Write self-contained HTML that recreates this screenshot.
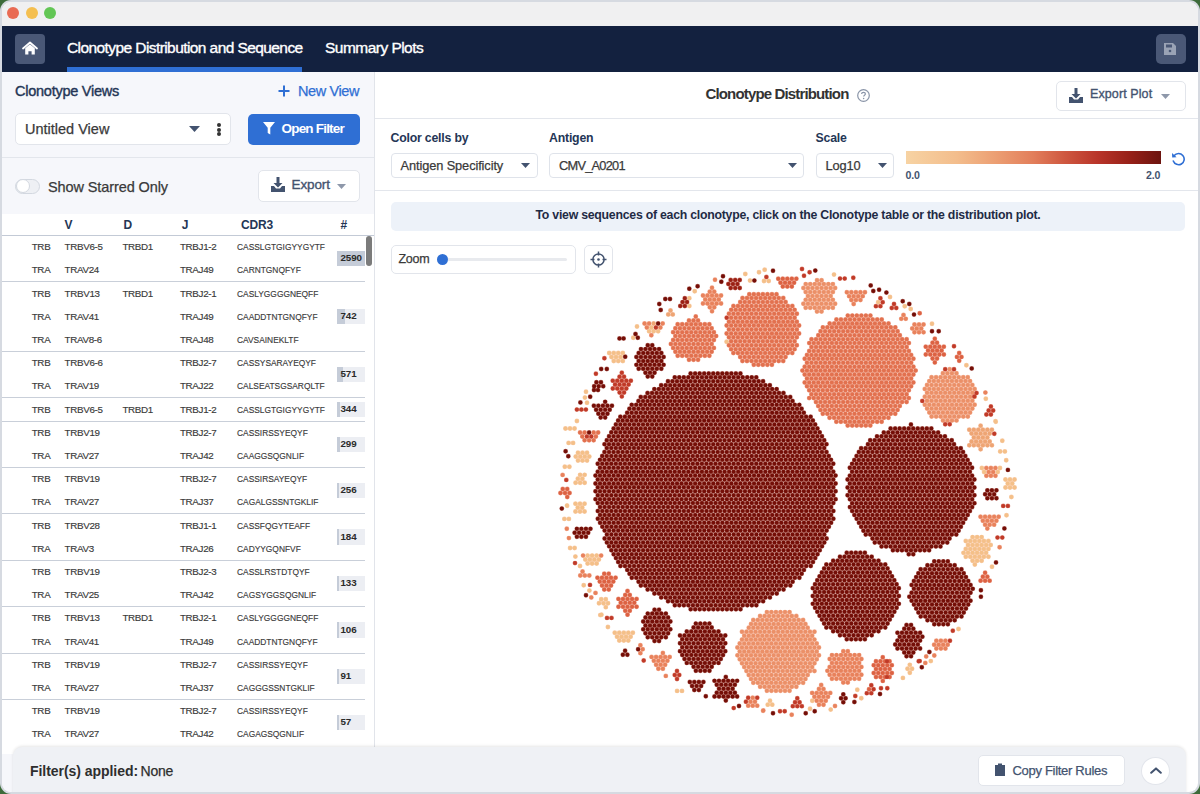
<!DOCTYPE html>
<html><head><meta charset="utf-8">
<style>
*{box-sizing:border-box;margin:0;padding:0}
html,body{width:1200px;height:794px;overflow:hidden;background:#3d6b3a;font-family:"Liberation Sans",sans-serif}
.win{position:absolute;left:0;top:0;width:1200px;height:794px;border-radius:11px;background:#d6dae1;overflow:hidden}
.inner{position:absolute;left:2px;top:2px;right:2px;bottom:2px;border-radius:9px;background:#fff;overflow:hidden}
.abs{position:absolute}
.t{position:absolute;white-space:nowrap;line-height:1}
</style></head><body>
<div class="win"><div class="inner">
<!-- coordinates inside .inner are offset by 2px; use wrapper at -2 -->
<div class="abs" id="root" style="left:-2px;top:-2px;width:1200px;height:794px">

<!-- title bar -->
<div class="abs" style="left:0;top:0;width:1200px;height:26px;background:#f0f0f1"></div>
<div class="abs" style="left:7px;top:7px;width:12px;height:12px;border-radius:50%;background:#e96b54"></div>
<div class="abs" style="left:25.5px;top:7px;width:12px;height:12px;border-radius:50%;background:#f4bf50"></div>
<div class="abs" style="left:44px;top:7px;width:12px;height:12px;border-radius:50%;background:#62c655"></div>

<!-- nav -->
<div class="abs" style="left:0;top:26px;width:1200px;height:46px;background:#13213f"></div>
<div class="abs" style="left:15px;top:34px;width:29.5px;height:30px;border-radius:4px;background:#4a5876"></div>
<svg class="abs" style="left:21px;top:41px" width="18" height="15" viewBox="0 0 18 15">
 <path d="M2 7.5 L9 1.5 L16 7.5" fill="none" stroke="#fff" stroke-width="1.8" stroke-linecap="round" stroke-linejoin="round"/>
 <path d="M4.2 7.2 L9 3.2 L13.8 7.2 V13.5 H10.6 V10.2 H7.4 V13.5 H4.2 Z" fill="#fff"/>
</svg>
<div class="t" style="left:67px;top:40px;font-size:15.5px;color:#fff;letter-spacing:-0.58px;-webkit-text-stroke:0.35px #fff">Clonotype Distribution and Sequence</div>
<div class="abs" style="left:67px;top:66.5px;width:235px;height:5.5px;background:#2f6fd4"></div>
<div class="t" style="left:325px;top:40px;font-size:15.5px;color:#fff;letter-spacing:-0.53px;-webkit-text-stroke:0.35px #fff">Summary Plots</div>
<div class="abs" style="left:1155.5px;top:34px;width:30px;height:30px;border-radius:5px;background:#4a5876"></div>
<svg class="abs" style="left:1163px;top:42px" width="14" height="14" viewBox="0 0 14 14">
 <path d="M1 1 H10 L13 4 V13 H1 Z" fill="#9aa3b5"/>
 <rect x="3" y="2.5" width="6" height="3" fill="#4a5876"/>
 <circle cx="7" cy="9" r="1.3" fill="#4a5876"/>
</svg>

<!-- left panel -->
<div class="abs" style="left:0;top:72px;width:375px;height:722px;background:#f6f7fb;border-right:1px solid #e1e4ea"></div>


<!-- left panel content -->
<div class="t" style="left:15px;top:84px;font-size:14.5px;color:#243656;letter-spacing:-0.25px;-webkit-text-stroke:0.4px #243656">Clonotype Views</div>
<svg class="abs" style="left:278px;top:85px" width="12" height="12" viewBox="0 0 12 12"><path d="M6 0.5 V11.5 M0.5 6 H11.5" stroke="#2f6fd4" stroke-width="2"/></svg>
<div class="t" style="left:298px;top:84px;font-size:14.5px;color:#2f6fd4;letter-spacing:-0.4px;-webkit-text-stroke:0.25px #2f6fd4">New View</div>

<div class="abs" style="left:15px;top:113px;width:216px;height:32px;border-radius:5px;background:#fff;border:1px solid #e2e5eb"></div>
<div class="t" style="left:25px;top:122px;font-size:14.5px;color:#3a3a3a;-webkit-text-stroke:0.25px #3a3a3a">Untitled View</div>
<svg class="abs" style="left:189px;top:126px" width="11" height="6" viewBox="0 0 11 6"><path d="M0 0 H11 L5.5 6 Z" fill="#43536f"/></svg>
<div class="abs" style="left:217px;top:123px;width:4px;height:4px;border-radius:50%;background:#333"></div>
<div class="abs" style="left:217px;top:127.5px;width:4px;height:4px;border-radius:50%;background:#333"></div>
<div class="abs" style="left:217px;top:132px;width:4px;height:4px;border-radius:50%;background:#333"></div>

<div class="abs" style="left:248px;top:113.5px;width:111.5px;height:31px;border-radius:5px;background:#2f6fd4"></div>
<svg class="abs" style="left:263px;top:122px" width="12" height="13" viewBox="0 0 12 13"><path d="M0 0 H12 L7.3 5.8 V12.5 L4.7 11 V5.8 Z" fill="#fff"/></svg>
<div class="t" style="left:281.5px;top:122px;font-size:13.5px;color:#fff;font-weight:bold;letter-spacing:-0.8px">Open Filter</div>

<div class="abs" style="left:0;top:156.5px;width:374px;height:1px;background:#e3e6ec"></div>

<div class="abs" style="left:15px;top:178.5px;width:25px;height:15px;border-radius:8px;background:#eef0f4;border:1px solid #d3d8e0"></div>
<div class="abs" style="left:15.5px;top:179px;width:14px;height:14px;border-radius:50%;background:#fff;border:1px solid #d3d8e0"></div>
<div class="t" style="left:48px;top:180px;font-size:14.5px;color:#3a3a3a;letter-spacing:-0.1px;-webkit-text-stroke:0.25px #3a3a3a">Show Starred Only</div>

<div class="abs" style="left:258px;top:170px;width:102px;height:32px;border-radius:5px;background:#fff;border:1px solid #e2e5eb"></div>
<svg class="abs" style="left:270.5px;top:177px" width="14" height="15" viewBox="0 0 14 15"><path d="M5.5 0 H8.5 V6 H11.5 L7 10.5 L2.5 6 H5.5 Z" fill="#43536f"/><path d="M0 9 H3 L5 11.5 H9 L11 9 H14 V15 H0 Z" fill="#43536f"/></svg>
<div class="t" style="left:291.5px;top:178px;font-size:13.5px;color:#43536f;letter-spacing:-0.1px;-webkit-text-stroke:0.35px #43536f">Export</div>
<svg class="abs" style="left:337px;top:184px" width="9" height="5" viewBox="0 0 9 5"><path d="M0 0 H9 L4.5 5 Z" fill="#8e98aa"/></svg>
<!-- table -->
<div class="abs" style="left:0;top:213.5px;width:374px;height:540px;background:#fff"></div>
<div class="t" style="left:64.5px;top:219px;font-size:12px;font-weight:bold;color:#243656;letter-spacing:-0.2px">V</div>
<div class="t" style="left:123.5px;top:219px;font-size:12px;font-weight:bold;color:#243656;letter-spacing:-0.2px">D</div>
<div class="t" style="left:181.7px;top:219px;font-size:12px;font-weight:bold;color:#243656;letter-spacing:-0.2px">J</div>
<div class="t" style="left:241px;top:219px;font-size:12px;font-weight:bold;color:#243656;letter-spacing:-0.2px">CDR3</div>
<div class="t" style="left:340.4px;top:219px;font-size:12px;font-weight:bold;color:#243656;letter-spacing:-0.2px">#</div>
<div class="abs" style="left:0;top:234.8px;width:374px;height:1.5px;background:#c3cad6"></div>
<div class="t" style="left:31.7px;top:242.1px;font-size:9.8px;color:#3a3a3a;-webkit-text-stroke:0.15px #3a3a3a;letter-spacing:-0.3px">TRB</div>
<div class="t" style="left:64.5px;top:242.1px;font-size:9.8px;color:#3a3a3a;-webkit-text-stroke:0.15px #3a3a3a;letter-spacing:-0.3px">TRBV6-5</div>
<div class="t" style="left:122.4px;top:242.1px;font-size:9.8px;color:#3a3a3a;-webkit-text-stroke:0.15px #3a3a3a;letter-spacing:-0.3px">TRBD1</div>
<div class="t" style="left:179.9px;top:242.1px;font-size:9.8px;color:#3a3a3a;-webkit-text-stroke:0.15px #3a3a3a;letter-spacing:-0.3px">TRBJ1-2</div>
<div class="t" style="left:237.4px;top:242.1px;font-size:9.8px;color:#3a3a3a;-webkit-text-stroke:0.15px #3a3a3a;letter-spacing:0px;transform:scaleX(0.855);transform-origin:0 0">CASSLGTGIGYYGYTF</div>
<div class="t" style="left:31.7px;top:265.3px;font-size:9.8px;color:#3a3a3a;-webkit-text-stroke:0.15px #3a3a3a;letter-spacing:-0.3px">TRA</div>
<div class="t" style="left:64.5px;top:265.3px;font-size:9.8px;color:#3a3a3a;-webkit-text-stroke:0.15px #3a3a3a;letter-spacing:-0.3px">TRAV24</div>
<div class="t" style="left:179.9px;top:265.3px;font-size:9.8px;color:#3a3a3a;-webkit-text-stroke:0.15px #3a3a3a;letter-spacing:-0.3px">TRAJ49</div>
<div class="t" style="left:237.4px;top:265.3px;font-size:9.8px;color:#3a3a3a;-webkit-text-stroke:0.15px #3a3a3a;letter-spacing:0px;transform:scaleX(0.855);transform-origin:0 0">CARNTGNQFYF</div>
<div class="abs" style="left:336.5px;top:250.9px;width:28.5px;height:15.5px;background:#eceef3"></div>
<div class="abs" style="left:336.5px;top:250.9px;width:28.5px;height:15.5px;background:#c5ccd8"></div>
<div class="t" style="left:340.5px;top:253.4px;font-size:9.8px;font-weight:bold;color:#2a2a2a;letter-spacing:-0.1px">2590</div>
<div class="abs" style="left:0;top:281.4px;width:365px;height:1px;background:#c9cfd9"></div>
<div class="t" style="left:31.7px;top:288.5px;font-size:9.8px;color:#3a3a3a;-webkit-text-stroke:0.15px #3a3a3a;letter-spacing:-0.3px">TRB</div>
<div class="t" style="left:64.5px;top:288.5px;font-size:9.8px;color:#3a3a3a;-webkit-text-stroke:0.15px #3a3a3a;letter-spacing:-0.3px">TRBV13</div>
<div class="t" style="left:122.4px;top:288.5px;font-size:9.8px;color:#3a3a3a;-webkit-text-stroke:0.15px #3a3a3a;letter-spacing:-0.3px">TRBD1</div>
<div class="t" style="left:179.9px;top:288.5px;font-size:9.8px;color:#3a3a3a;-webkit-text-stroke:0.15px #3a3a3a;letter-spacing:-0.3px">TRBJ2-1</div>
<div class="t" style="left:237.4px;top:288.5px;font-size:9.8px;color:#3a3a3a;-webkit-text-stroke:0.15px #3a3a3a;letter-spacing:0px;transform:scaleX(0.855);transform-origin:0 0">CASLYGGGGNEQFF</div>
<div class="t" style="left:31.7px;top:311.7px;font-size:9.8px;color:#3a3a3a;-webkit-text-stroke:0.15px #3a3a3a;letter-spacing:-0.3px">TRA</div>
<div class="t" style="left:64.5px;top:311.7px;font-size:9.8px;color:#3a3a3a;-webkit-text-stroke:0.15px #3a3a3a;letter-spacing:-0.3px">TRAV41</div>
<div class="t" style="left:179.9px;top:311.7px;font-size:9.8px;color:#3a3a3a;-webkit-text-stroke:0.15px #3a3a3a;letter-spacing:-0.3px">TRAJ49</div>
<div class="t" style="left:237.4px;top:311.7px;font-size:9.8px;color:#3a3a3a;-webkit-text-stroke:0.15px #3a3a3a;letter-spacing:0px;transform:scaleX(0.855);transform-origin:0 0">CAADDTNTGNQFYF</div>
<div class="t" style="left:31.7px;top:334.9px;font-size:9.8px;color:#3a3a3a;-webkit-text-stroke:0.15px #3a3a3a;letter-spacing:-0.3px">TRA</div>
<div class="t" style="left:64.5px;top:334.9px;font-size:9.8px;color:#3a3a3a;-webkit-text-stroke:0.15px #3a3a3a;letter-spacing:-0.3px">TRAV8-6</div>
<div class="t" style="left:179.9px;top:334.9px;font-size:9.8px;color:#3a3a3a;-webkit-text-stroke:0.15px #3a3a3a;letter-spacing:-0.3px">TRAJ48</div>
<div class="t" style="left:237.4px;top:334.9px;font-size:9.8px;color:#3a3a3a;-webkit-text-stroke:0.15px #3a3a3a;letter-spacing:0px;transform:scaleX(0.855);transform-origin:0 0">CAVSAINEKLTF</div>
<div class="abs" style="left:336.5px;top:308.9px;width:28.5px;height:15.5px;background:#eceef3"></div>
<div class="abs" style="left:336.5px;top:308.9px;width:8.2px;height:15.5px;background:#c5ccd8"></div>
<div class="t" style="left:340.5px;top:311.4px;font-size:9.8px;font-weight:bold;color:#2a2a2a;letter-spacing:-0.1px">742</div>
<div class="abs" style="left:0;top:351.0px;width:365px;height:1px;background:#c9cfd9"></div>
<div class="t" style="left:31.7px;top:358.1px;font-size:9.8px;color:#3a3a3a;-webkit-text-stroke:0.15px #3a3a3a;letter-spacing:-0.3px">TRB</div>
<div class="t" style="left:64.5px;top:358.1px;font-size:9.8px;color:#3a3a3a;-webkit-text-stroke:0.15px #3a3a3a;letter-spacing:-0.3px">TRBV6-6</div>
<div class="t" style="left:179.9px;top:358.1px;font-size:9.8px;color:#3a3a3a;-webkit-text-stroke:0.15px #3a3a3a;letter-spacing:-0.3px">TRBJ2-7</div>
<div class="t" style="left:237.4px;top:358.1px;font-size:9.8px;color:#3a3a3a;-webkit-text-stroke:0.15px #3a3a3a;letter-spacing:0px;transform:scaleX(0.855);transform-origin:0 0">CASSYSARAYEQYF</div>
<div class="t" style="left:31.7px;top:381.3px;font-size:9.8px;color:#3a3a3a;-webkit-text-stroke:0.15px #3a3a3a;letter-spacing:-0.3px">TRA</div>
<div class="t" style="left:64.5px;top:381.3px;font-size:9.8px;color:#3a3a3a;-webkit-text-stroke:0.15px #3a3a3a;letter-spacing:-0.3px">TRAV19</div>
<div class="t" style="left:179.9px;top:381.3px;font-size:9.8px;color:#3a3a3a;-webkit-text-stroke:0.15px #3a3a3a;letter-spacing:-0.3px">TRAJ22</div>
<div class="t" style="left:237.4px;top:381.3px;font-size:9.8px;color:#3a3a3a;-webkit-text-stroke:0.15px #3a3a3a;letter-spacing:0px;transform:scaleX(0.855);transform-origin:0 0">CALSEATSGSARQLTF</div>
<div class="abs" style="left:336.5px;top:366.9px;width:28.5px;height:15.5px;background:#eceef3"></div>
<div class="abs" style="left:336.5px;top:366.9px;width:6.3px;height:15.5px;background:#c5ccd8"></div>
<div class="t" style="left:340.5px;top:369.4px;font-size:9.8px;font-weight:bold;color:#2a2a2a;letter-spacing:-0.1px">571</div>
<div class="abs" style="left:0;top:397.4px;width:365px;height:1px;background:#c9cfd9"></div>
<div class="t" style="left:31.7px;top:404.5px;font-size:9.8px;color:#3a3a3a;-webkit-text-stroke:0.15px #3a3a3a;letter-spacing:-0.3px">TRB</div>
<div class="t" style="left:64.5px;top:404.5px;font-size:9.8px;color:#3a3a3a;-webkit-text-stroke:0.15px #3a3a3a;letter-spacing:-0.3px">TRBV6-5</div>
<div class="t" style="left:122.4px;top:404.5px;font-size:9.8px;color:#3a3a3a;-webkit-text-stroke:0.15px #3a3a3a;letter-spacing:-0.3px">TRBD1</div>
<div class="t" style="left:179.9px;top:404.5px;font-size:9.8px;color:#3a3a3a;-webkit-text-stroke:0.15px #3a3a3a;letter-spacing:-0.3px">TRBJ1-2</div>
<div class="t" style="left:237.4px;top:404.5px;font-size:9.8px;color:#3a3a3a;-webkit-text-stroke:0.15px #3a3a3a;letter-spacing:0px;transform:scaleX(0.855);transform-origin:0 0">CASSLGTGIGYYGYTF</div>
<div class="abs" style="left:336.5px;top:401.7px;width:28.5px;height:15.5px;background:#eceef3"></div>
<div class="abs" style="left:336.5px;top:401.7px;width:3.8px;height:15.5px;background:#c5ccd8"></div>
<div class="t" style="left:340.5px;top:404.2px;font-size:9.8px;font-weight:bold;color:#2a2a2a;letter-spacing:-0.1px">344</div>
<div class="abs" style="left:0;top:420.6px;width:365px;height:1px;background:#c9cfd9"></div>
<div class="t" style="left:31.7px;top:427.7px;font-size:9.8px;color:#3a3a3a;-webkit-text-stroke:0.15px #3a3a3a;letter-spacing:-0.3px">TRB</div>
<div class="t" style="left:64.5px;top:427.7px;font-size:9.8px;color:#3a3a3a;-webkit-text-stroke:0.15px #3a3a3a;letter-spacing:-0.3px">TRBV19</div>
<div class="t" style="left:179.9px;top:427.7px;font-size:9.8px;color:#3a3a3a;-webkit-text-stroke:0.15px #3a3a3a;letter-spacing:-0.3px">TRBJ2-7</div>
<div class="t" style="left:237.4px;top:427.7px;font-size:9.8px;color:#3a3a3a;-webkit-text-stroke:0.15px #3a3a3a;letter-spacing:0px;transform:scaleX(0.855);transform-origin:0 0">CASSIRSSYEQYF</div>
<div class="t" style="left:31.7px;top:450.9px;font-size:9.8px;color:#3a3a3a;-webkit-text-stroke:0.15px #3a3a3a;letter-spacing:-0.3px">TRA</div>
<div class="t" style="left:64.5px;top:450.9px;font-size:9.8px;color:#3a3a3a;-webkit-text-stroke:0.15px #3a3a3a;letter-spacing:-0.3px">TRAV27</div>
<div class="t" style="left:179.9px;top:450.9px;font-size:9.8px;color:#3a3a3a;-webkit-text-stroke:0.15px #3a3a3a;letter-spacing:-0.3px">TRAJ42</div>
<div class="t" style="left:237.4px;top:450.9px;font-size:9.8px;color:#3a3a3a;-webkit-text-stroke:0.15px #3a3a3a;letter-spacing:0px;transform:scaleX(0.855);transform-origin:0 0">CAAGGSQGNLIF</div>
<div class="abs" style="left:336.5px;top:436.5px;width:28.5px;height:15.5px;background:#eceef3"></div>
<div class="abs" style="left:336.5px;top:436.5px;width:3.3px;height:15.5px;background:#c5ccd8"></div>
<div class="t" style="left:340.5px;top:439.0px;font-size:9.8px;font-weight:bold;color:#2a2a2a;letter-spacing:-0.1px">299</div>
<div class="abs" style="left:0;top:467.0px;width:365px;height:1px;background:#c9cfd9"></div>
<div class="t" style="left:31.7px;top:474.1px;font-size:9.8px;color:#3a3a3a;-webkit-text-stroke:0.15px #3a3a3a;letter-spacing:-0.3px">TRB</div>
<div class="t" style="left:64.5px;top:474.1px;font-size:9.8px;color:#3a3a3a;-webkit-text-stroke:0.15px #3a3a3a;letter-spacing:-0.3px">TRBV19</div>
<div class="t" style="left:179.9px;top:474.1px;font-size:9.8px;color:#3a3a3a;-webkit-text-stroke:0.15px #3a3a3a;letter-spacing:-0.3px">TRBJ2-7</div>
<div class="t" style="left:237.4px;top:474.1px;font-size:9.8px;color:#3a3a3a;-webkit-text-stroke:0.15px #3a3a3a;letter-spacing:0px;transform:scaleX(0.855);transform-origin:0 0">CASSIRSAYEQYF</div>
<div class="t" style="left:31.7px;top:497.3px;font-size:9.8px;color:#3a3a3a;-webkit-text-stroke:0.15px #3a3a3a;letter-spacing:-0.3px">TRA</div>
<div class="t" style="left:64.5px;top:497.3px;font-size:9.8px;color:#3a3a3a;-webkit-text-stroke:0.15px #3a3a3a;letter-spacing:-0.3px">TRAV27</div>
<div class="t" style="left:179.9px;top:497.3px;font-size:9.8px;color:#3a3a3a;-webkit-text-stroke:0.15px #3a3a3a;letter-spacing:-0.3px">TRAJ37</div>
<div class="t" style="left:237.4px;top:497.3px;font-size:9.8px;color:#3a3a3a;-webkit-text-stroke:0.15px #3a3a3a;letter-spacing:0px;transform:scaleX(0.855);transform-origin:0 0">CAGALGSSNTGKLIF</div>
<div class="abs" style="left:336.5px;top:482.9px;width:28.5px;height:15.5px;background:#eceef3"></div>
<div class="abs" style="left:336.5px;top:482.9px;width:2.8px;height:15.5px;background:#c5ccd8"></div>
<div class="t" style="left:340.5px;top:485.4px;font-size:9.8px;font-weight:bold;color:#2a2a2a;letter-spacing:-0.1px">256</div>
<div class="abs" style="left:0;top:513.4px;width:365px;height:1px;background:#c9cfd9"></div>
<div class="t" style="left:31.7px;top:520.5px;font-size:9.8px;color:#3a3a3a;-webkit-text-stroke:0.15px #3a3a3a;letter-spacing:-0.3px">TRB</div>
<div class="t" style="left:64.5px;top:520.5px;font-size:9.8px;color:#3a3a3a;-webkit-text-stroke:0.15px #3a3a3a;letter-spacing:-0.3px">TRBV28</div>
<div class="t" style="left:179.9px;top:520.5px;font-size:9.8px;color:#3a3a3a;-webkit-text-stroke:0.15px #3a3a3a;letter-spacing:-0.3px">TRBJ1-1</div>
<div class="t" style="left:237.4px;top:520.5px;font-size:9.8px;color:#3a3a3a;-webkit-text-stroke:0.15px #3a3a3a;letter-spacing:0px;transform:scaleX(0.855);transform-origin:0 0">CASSFQGYTEAFF</div>
<div class="t" style="left:31.7px;top:543.7px;font-size:9.8px;color:#3a3a3a;-webkit-text-stroke:0.15px #3a3a3a;letter-spacing:-0.3px">TRA</div>
<div class="t" style="left:64.5px;top:543.7px;font-size:9.8px;color:#3a3a3a;-webkit-text-stroke:0.15px #3a3a3a;letter-spacing:-0.3px">TRAV3</div>
<div class="t" style="left:179.9px;top:543.7px;font-size:9.8px;color:#3a3a3a;-webkit-text-stroke:0.15px #3a3a3a;letter-spacing:-0.3px">TRAJ26</div>
<div class="t" style="left:237.4px;top:543.7px;font-size:9.8px;color:#3a3a3a;-webkit-text-stroke:0.15px #3a3a3a;letter-spacing:0px;transform:scaleX(0.855);transform-origin:0 0">CADYYGQNFVF</div>
<div class="abs" style="left:336.5px;top:529.3px;width:28.5px;height:15.5px;background:#eceef3"></div>
<div class="abs" style="left:336.5px;top:529.3px;width:2.0px;height:15.5px;background:#c5ccd8"></div>
<div class="t" style="left:340.5px;top:531.8px;font-size:9.8px;font-weight:bold;color:#2a2a2a;letter-spacing:-0.1px">184</div>
<div class="abs" style="left:0;top:559.8px;width:365px;height:1px;background:#c9cfd9"></div>
<div class="t" style="left:31.7px;top:566.9px;font-size:9.8px;color:#3a3a3a;-webkit-text-stroke:0.15px #3a3a3a;letter-spacing:-0.3px">TRB</div>
<div class="t" style="left:64.5px;top:566.9px;font-size:9.8px;color:#3a3a3a;-webkit-text-stroke:0.15px #3a3a3a;letter-spacing:-0.3px">TRBV19</div>
<div class="t" style="left:179.9px;top:566.9px;font-size:9.8px;color:#3a3a3a;-webkit-text-stroke:0.15px #3a3a3a;letter-spacing:-0.3px">TRBJ2-3</div>
<div class="t" style="left:237.4px;top:566.9px;font-size:9.8px;color:#3a3a3a;-webkit-text-stroke:0.15px #3a3a3a;letter-spacing:0px;transform:scaleX(0.855);transform-origin:0 0">CASSLRSTDTQYF</div>
<div class="t" style="left:31.7px;top:590.1px;font-size:9.8px;color:#3a3a3a;-webkit-text-stroke:0.15px #3a3a3a;letter-spacing:-0.3px">TRA</div>
<div class="t" style="left:64.5px;top:590.1px;font-size:9.8px;color:#3a3a3a;-webkit-text-stroke:0.15px #3a3a3a;letter-spacing:-0.3px">TRAV25</div>
<div class="t" style="left:179.9px;top:590.1px;font-size:9.8px;color:#3a3a3a;-webkit-text-stroke:0.15px #3a3a3a;letter-spacing:-0.3px">TRAJ42</div>
<div class="t" style="left:237.4px;top:590.1px;font-size:9.8px;color:#3a3a3a;-webkit-text-stroke:0.15px #3a3a3a;letter-spacing:0px;transform:scaleX(0.855);transform-origin:0 0">CAGSYGGSQGNLIF</div>
<div class="abs" style="left:336.5px;top:575.7px;width:28.5px;height:15.5px;background:#eceef3"></div>
<div class="abs" style="left:336.5px;top:575.7px;width:2.0px;height:15.5px;background:#c5ccd8"></div>
<div class="t" style="left:340.5px;top:578.2px;font-size:9.8px;font-weight:bold;color:#2a2a2a;letter-spacing:-0.1px">133</div>
<div class="abs" style="left:0;top:606.2px;width:365px;height:1px;background:#c9cfd9"></div>
<div class="t" style="left:31.7px;top:613.3px;font-size:9.8px;color:#3a3a3a;-webkit-text-stroke:0.15px #3a3a3a;letter-spacing:-0.3px">TRB</div>
<div class="t" style="left:64.5px;top:613.3px;font-size:9.8px;color:#3a3a3a;-webkit-text-stroke:0.15px #3a3a3a;letter-spacing:-0.3px">TRBV13</div>
<div class="t" style="left:122.4px;top:613.3px;font-size:9.8px;color:#3a3a3a;-webkit-text-stroke:0.15px #3a3a3a;letter-spacing:-0.3px">TRBD1</div>
<div class="t" style="left:179.9px;top:613.3px;font-size:9.8px;color:#3a3a3a;-webkit-text-stroke:0.15px #3a3a3a;letter-spacing:-0.3px">TRBJ2-1</div>
<div class="t" style="left:237.4px;top:613.3px;font-size:9.8px;color:#3a3a3a;-webkit-text-stroke:0.15px #3a3a3a;letter-spacing:0px;transform:scaleX(0.855);transform-origin:0 0">CASLYGGGGNEQFF</div>
<div class="t" style="left:31.7px;top:636.5px;font-size:9.8px;color:#3a3a3a;-webkit-text-stroke:0.15px #3a3a3a;letter-spacing:-0.3px">TRA</div>
<div class="t" style="left:64.5px;top:636.5px;font-size:9.8px;color:#3a3a3a;-webkit-text-stroke:0.15px #3a3a3a;letter-spacing:-0.3px">TRAV41</div>
<div class="t" style="left:179.9px;top:636.5px;font-size:9.8px;color:#3a3a3a;-webkit-text-stroke:0.15px #3a3a3a;letter-spacing:-0.3px">TRAJ49</div>
<div class="t" style="left:237.4px;top:636.5px;font-size:9.8px;color:#3a3a3a;-webkit-text-stroke:0.15px #3a3a3a;letter-spacing:0px;transform:scaleX(0.855);transform-origin:0 0">CAADDTNTGNQFYF</div>
<div class="abs" style="left:336.5px;top:622.1px;width:28.5px;height:15.5px;background:#eceef3"></div>
<div class="abs" style="left:336.5px;top:622.1px;width:2.0px;height:15.5px;background:#c5ccd8"></div>
<div class="t" style="left:340.5px;top:624.6px;font-size:9.8px;font-weight:bold;color:#2a2a2a;letter-spacing:-0.1px">106</div>
<div class="abs" style="left:0;top:652.6px;width:365px;height:1px;background:#c9cfd9"></div>
<div class="t" style="left:31.7px;top:659.7px;font-size:9.8px;color:#3a3a3a;-webkit-text-stroke:0.15px #3a3a3a;letter-spacing:-0.3px">TRB</div>
<div class="t" style="left:64.5px;top:659.7px;font-size:9.8px;color:#3a3a3a;-webkit-text-stroke:0.15px #3a3a3a;letter-spacing:-0.3px">TRBV19</div>
<div class="t" style="left:179.9px;top:659.7px;font-size:9.8px;color:#3a3a3a;-webkit-text-stroke:0.15px #3a3a3a;letter-spacing:-0.3px">TRBJ2-7</div>
<div class="t" style="left:237.4px;top:659.7px;font-size:9.8px;color:#3a3a3a;-webkit-text-stroke:0.15px #3a3a3a;letter-spacing:0px;transform:scaleX(0.855);transform-origin:0 0">CASSIRSSYEQYF</div>
<div class="t" style="left:31.7px;top:682.9px;font-size:9.8px;color:#3a3a3a;-webkit-text-stroke:0.15px #3a3a3a;letter-spacing:-0.3px">TRA</div>
<div class="t" style="left:64.5px;top:682.9px;font-size:9.8px;color:#3a3a3a;-webkit-text-stroke:0.15px #3a3a3a;letter-spacing:-0.3px">TRAV27</div>
<div class="t" style="left:179.9px;top:682.9px;font-size:9.8px;color:#3a3a3a;-webkit-text-stroke:0.15px #3a3a3a;letter-spacing:-0.3px">TRAJ37</div>
<div class="t" style="left:237.4px;top:682.9px;font-size:9.8px;color:#3a3a3a;-webkit-text-stroke:0.15px #3a3a3a;letter-spacing:0px;transform:scaleX(0.855);transform-origin:0 0">CAGGGSSNTGKLIF</div>
<div class="abs" style="left:336.5px;top:668.5px;width:28.5px;height:15.5px;background:#eceef3"></div>
<div class="abs" style="left:336.5px;top:668.5px;width:2.0px;height:15.5px;background:#c5ccd8"></div>
<div class="t" style="left:340.5px;top:671.0px;font-size:9.8px;font-weight:bold;color:#2a2a2a;letter-spacing:-0.1px">91</div>
<div class="abs" style="left:0;top:699.0px;width:365px;height:1px;background:#c9cfd9"></div>
<div class="t" style="left:31.7px;top:706.1px;font-size:9.8px;color:#3a3a3a;-webkit-text-stroke:0.15px #3a3a3a;letter-spacing:-0.3px">TRB</div>
<div class="t" style="left:64.5px;top:706.1px;font-size:9.8px;color:#3a3a3a;-webkit-text-stroke:0.15px #3a3a3a;letter-spacing:-0.3px">TRBV19</div>
<div class="t" style="left:179.9px;top:706.1px;font-size:9.8px;color:#3a3a3a;-webkit-text-stroke:0.15px #3a3a3a;letter-spacing:-0.3px">TRBJ2-7</div>
<div class="t" style="left:237.4px;top:706.1px;font-size:9.8px;color:#3a3a3a;-webkit-text-stroke:0.15px #3a3a3a;letter-spacing:0px;transform:scaleX(0.855);transform-origin:0 0">CASSIRSSYEQYF</div>
<div class="t" style="left:31.7px;top:729.3px;font-size:9.8px;color:#3a3a3a;-webkit-text-stroke:0.15px #3a3a3a;letter-spacing:-0.3px">TRA</div>
<div class="t" style="left:64.5px;top:729.3px;font-size:9.8px;color:#3a3a3a;-webkit-text-stroke:0.15px #3a3a3a;letter-spacing:-0.3px">TRAV27</div>
<div class="t" style="left:179.9px;top:729.3px;font-size:9.8px;color:#3a3a3a;-webkit-text-stroke:0.15px #3a3a3a;letter-spacing:-0.3px">TRAJ42</div>
<div class="t" style="left:237.4px;top:729.3px;font-size:9.8px;color:#3a3a3a;-webkit-text-stroke:0.15px #3a3a3a;letter-spacing:0px;transform:scaleX(0.855);transform-origin:0 0">CAGAGSQGNLIF</div>
<div class="abs" style="left:336.5px;top:714.9px;width:28.5px;height:15.5px;background:#eceef3"></div>
<div class="abs" style="left:336.5px;top:714.9px;width:2.0px;height:15.5px;background:#c5ccd8"></div>
<div class="t" style="left:340.5px;top:717.4px;font-size:9.8px;font-weight:bold;color:#2a2a2a;letter-spacing:-0.1px">57</div>
<div class="abs" style="left:365.5px;top:236px;width:6px;height:30px;border-radius:3px;background:#7b7b7b"></div>
<div class="abs" style="left:374px;top:213.5px;width:1px;height:540px;background:#e1e4ea"></div>

<!-- right panel header -->
<div class="t" style="left:705.5px;top:86px;font-size:15px;font-weight:bold;color:#333;letter-spacing:-0.85px">Clonotype Distribution</div>
<svg class="abs" style="left:857px;top:89px" width="13" height="13" viewBox="0 0 13 13"><circle cx="6.5" cy="6.5" r="5.8" fill="none" stroke="#8a95a8" stroke-width="1.2"/><path d="M4.6 5.1 C4.6 3.9 5.5 3.4 6.5 3.4 C7.6 3.4 8.4 4.1 8.4 5 C8.4 6.2 6.6 6.3 6.6 7.6" fill="none" stroke="#8a95a8" stroke-width="1.2"/><circle cx="6.6" cy="9.5" r="0.75" fill="#8a95a8"/></svg>
<div class="abs" style="left:1055.5px;top:81px;width:130px;height:29.5px;border-radius:5px;background:#fff;border:1px solid #e2e5eb"></div>
<svg class="abs" style="left:1069px;top:88px" width="14" height="15" viewBox="0 0 14 15"><path d="M5.5 0 H8.5 V6 H11.5 L7 10.5 L2.5 6 H5.5 Z" fill="#43536f"/><path d="M0 9 H3 L5 11.5 H9 L11 9 H14 V15 H0 Z" fill="#43536f"/></svg>
<div class="t" style="left:1090px;top:87.8px;font-size:12.5px;color:#43536f;letter-spacing:0.1px;-webkit-text-stroke:0.35px #43536f">Export Plot</div>
<svg class="abs" style="left:1161px;top:94px" width="9" height="5" viewBox="0 0 9 5"><path d="M0 0 H9 L4.5 5 Z" fill="#8e98aa"/></svg>
<div class="abs" style="left:375px;top:118px;width:825px;height:1px;background:#e3e6ec"></div>

<!-- controls -->
<div class="t" style="left:390.5px;top:132px;font-size:12.3px;font-weight:bold;color:#243656;letter-spacing:-0.2px">Color cells by</div>
<div class="abs" style="left:390.5px;top:152.5px;width:147px;height:25px;border-radius:4px;background:#fff;border:1px solid #dfe3ea"></div>
<div class="t" style="left:400.5px;top:159.5px;font-size:12.8px;color:#3a3a3a;letter-spacing:-0.1px;-webkit-text-stroke:0.25px #3a3a3a">Antigen Specificity</div>
<svg class="abs" style="left:521px;top:163px" width="9" height="5" viewBox="0 0 9 5"><path d="M0 0 H9 L4.5 5 Z" fill="#43536f"/></svg>

<div class="t" style="left:549px;top:132px;font-size:12.3px;font-weight:bold;color:#243656;letter-spacing:-0.2px">Antigen</div>
<div class="abs" style="left:549px;top:152.5px;width:255px;height:25px;border-radius:4px;background:#fff;border:1px solid #dfe3ea"></div>
<div class="t" style="left:559px;top:159.5px;font-size:12.8px;color:#3a3a3a;letter-spacing:-0.75px;-webkit-text-stroke:0.25px #3a3a3a">CMV_A0201</div>
<svg class="abs" style="left:787.5px;top:163px" width="9" height="5" viewBox="0 0 9 5"><path d="M0 0 H9 L4.5 5 Z" fill="#43536f"/></svg>

<div class="t" style="left:815.5px;top:132px;font-size:12.3px;font-weight:bold;color:#243656;letter-spacing:-0.2px">Scale</div>
<div class="abs" style="left:815.5px;top:153px;width:78.5px;height:25px;border-radius:4px;background:#fff;border:1px solid #dfe3ea"></div>
<div class="t" style="left:825.5px;top:159.5px;font-size:12.8px;color:#3a3a3a;letter-spacing:-0.1px;-webkit-text-stroke:0.25px #3a3a3a">Log10</div>
<svg class="abs" style="left:878px;top:163px" width="9" height="5" viewBox="0 0 9 5"><path d="M0 0 H9 L4.5 5 Z" fill="#43536f"/></svg>

<div class="abs" style="left:905.5px;top:150.5px;width:255.5px;height:13.5px;background:linear-gradient(to right,#f7d3a3 0%,#f3bd8c 20%,#ec9f73 35%,#e27e5b 50%,#cf5840 62%,#b9352a 75%,#962018 88%,#6c140f 100%)"></div>
<div class="t" style="left:905.5px;top:170px;font-size:10.6px;font-weight:bold;color:#43536f;letter-spacing:-0.2px">0.0</div>
<div class="t" style="left:1146px;top:170px;font-size:10.6px;font-weight:bold;color:#43536f;letter-spacing:-0.2px">2.0</div>
<svg class="abs" style="left:1171px;top:152px" width="15" height="14" viewBox="0 0 15 14"><path d="M3.2 3.6 A5.6 5.6 0 1 1 2.3 9" fill="none" stroke="#2f6fd4" stroke-width="1.6" stroke-linecap="round"/><path d="M1 1 L1.2 5.6 L5.6 5.2 Z" fill="#2f6fd4"/></svg>
<div class="abs" style="left:375px;top:189.5px;width:825px;height:1px;background:#e3e6ec"></div>

<div class="abs" style="left:390.5px;top:201.5px;width:794.5px;height:29px;border-radius:5px;background:#edf2f9"></div>
<div class="t" style="left:535.5px;top:209px;font-size:12.3px;font-weight:bold;color:#1f2b45;letter-spacing:-0.245px">To view sequences of each clonotype, click on the Clonotype table or the distribution plot.</div>

<div class="abs" style="left:390.5px;top:244.5px;width:185px;height:29px;border-radius:5px;background:#fff;border:1px solid #e2e5eb"></div>
<div class="t" style="left:398.5px;top:253px;font-size:12.5px;color:#3a3a3a;letter-spacing:-0.3px;-webkit-text-stroke:0.25px #3a3a3a">Zoom</div>
<div class="abs" style="left:437px;top:257.5px;width:130px;height:3px;border-radius:2px;background:#e8eaee"></div>
<div class="abs" style="left:436.5px;top:253.5px;width:11px;height:11px;border-radius:50%;background:#2f6fd4"></div>
<div class="abs" style="left:583.5px;top:244.5px;width:29.5px;height:29px;border-radius:5px;background:#fff;border:1px solid #e2e5eb"></div>
<svg class="abs" style="left:590px;top:250.5px" width="17" height="17" viewBox="0 0 17 17"><circle cx="8.5" cy="8.5" r="5.6" fill="none" stroke="#43536f" stroke-width="1.5"/><path d="M8.5 0.5 V4.5 M8.5 12.5 V16.5 M0.5 8.5 H4.5 M12.5 8.5 H16.5" stroke="#43536f" stroke-width="1.5"/><circle cx="8.5" cy="8.5" r="1.3" fill="#43536f"/></svg>

<!-- CHART -->
<svg class="abs" style="left:0;top:0" width="1200" height="794" viewBox="0 0 1200 794">
<g fill="none" stroke-linecap="round" stroke-width="4.9"><path stroke="#facfae" d="M609.21 353.07h0m4.53 0h0m4.53 0h0m4.53 0h0m-11.32 3.93h0m4.53 0h0m4.53 0h0m-6.79 3.93h0m4.53 0h0m4.53 0h0M601.24 599.27h0m4.53 0h0m-6.79 3.93h0m4.53 0h0m4.53 0h0m-2.26 3.93h0M565.47 428.5h0m4.53 0h0m4.53 0h0M972.57 537.11h0m4.53 0h0m4.53 0h0m-15.86 3.93h0m4.53 0h0m4.53 0h0m4.53 0h0m4.53 0h0m4.53 0h0m-20.38 3.93h0m4.53 0h0m4.53 0h0m4.53 0h0m4.53 0h0m4.53 0h0m-24.92 3.93h0m4.53 0h0m4.53 0h0m4.53 0h0m4.53 0h0m4.53 0h0m-24.92 3.93h0m4.53 0h0m4.53 0h0m4.53 0h0m4.53 0h0m4.53 0h0m-20.38 3.93h0m4.53 0h0m4.53 0h0m4.53 0h0m4.53 0h0m4.53 0h0m-15.86 3.93h0m4.53 0h0m4.53 0h0m-6.79 3.93h0M981.84 468h0m18.12 0h0m-15.85 3.93h0m13.59 0h0M1005.47 479.57h0m4.53 0h0m4.53 0h0m-6.79 3.93h0m4.53 0h0m-6.79 3.93h0m4.53 0h0m4.53 0h0M577.97 452.67h0m4.53 0h0m4.53 0h0m-11.32 3.93h0m4.53 0h0m4.53 0h0m4.53 0h0m-11.32 3.93h0m4.53 0h0m4.53 0h0M580.1 474.87h0m4.53 0h0m-6.79 3.93h0m4.53 0h0m-6.79 3.93h0m4.53 0h0m4.53 0h0M575.47 503.67h0m4.53 0h0m4.53 0h0m-6.79 3.93h0m4.53 0h0m-6.79 3.93h0m4.53 0h0m4.53 0h0M587.57 555.6h0m4.53 0h0m4.53 0h0m-11.32 3.93h0m4.53 0h0m4.53 0h0m4.53 0h0m-11.32 3.93h0m4.53 0h0m4.53 0h0M651.34 327.43h0m-2.26 3.93h0m4.53 0h0m4.53 0h0M689.33 298.17h0m0 7.86h0M878.15 302.2h0M909.8 664.87h0m-2.26 3.93h0m4.53 0h0m-2.26 3.93h0M770 700.7h0m-2.26 3.93h0m4.53 0h0M614.74 632.7h0m4.53 0h0m4.53 0h0m4.53 0h0m4.53 0h0m-15.85 3.93h0m4.53 0h0m4.53 0h0m4.53 0h0m-11.32 3.93h0m4.53 0h0m4.53 0h0M694.7 291.3h0M745.3 274h0M750 280.6h0M759 272.3h0M764.7 269.7h0M764 281h0M768.7 281h0M726.6 341.7h0M637 326.5h0M633.3 337.8h0M890 297h0M904.7 306.3h0M910.7 309h0M834 274.6h0M932 323.8h0M966.4 365.2h0M985.8 398.7h0M995.5 421.3h0M995.7 421.8h0M1002.3 440.8h0M1000.2 451.4h0M1004.9 451.4h0M1006.2 460.2h0M1011.4 497h0M1006.5 515.2h0M992 566.8h0M958.5 629h0M930.8 661.1h0M902.9 677.9h0M857.3 689.7h0M861.3 698.3h0M830.7 709.6h0M812.3 700.7h0M810 708.7h0M677.1 690.9h0M682 690.9h0M607.9 627h0M601.4 614.7h0M586 391.8h0M584.9 397.6h0M587 402.8h0M576.9 421h0M568.6 442.9h0M573.1 442.9h0M564.8 466.7h0M569.4 466.7h0M567 505.6h0M567.1 505.7h0M564.4 518.9h0M568.9 518.9h0M570.1 548h0M574.6 548h0M575.4 556.6h0M580 566h0M583.7 585.3h0M589.4 590.6h0M600.3 615.1h0"/><path stroke="#f5b79e" d="M766.88 612.1h0m4.53 0h0m4.53 0h0m4.53 0h0m4.53 0h0m4.53 0h0m-29.45 3.93h0m4.53 0h0m4.53 0h0m4.53 0h0m4.53 0h0m4.53 0h0m4.53 0h0m4.53 0h0m4.53 0h0m-43.03 3.93h0m4.53 0h0m4.53 0h0m4.53 0h0m4.53 0h0m4.53 0h0m4.53 0h0m4.53 0h0m4.53 0h0m4.53 0h0m4.53 0h0m4.53 0h0m-52.09 3.93h0m4.53 0h0m4.53 0h0m4.53 0h0m4.53 0h0m4.53 0h0m4.53 0h0m4.53 0h0m4.53 0h0m4.53 0h0m4.53 0h0m4.53 0h0m4.53 0h0m-56.62 3.93h0m4.53 0h0m4.53 0h0m4.53 0h0m4.53 0h0m4.53 0h0m4.53 0h0m4.53 0h0m4.53 0h0m4.53 0h0m4.53 0h0m4.53 0h0m4.53 0h0m4.53 0h0m-65.69 3.93h0m4.53 0h0m4.53 0h0m4.53 0h0m4.53 0h0m4.53 0h0m4.53 0h0m4.53 0h0m4.53 0h0m4.53 0h0m4.53 0h0m4.53 0h0m4.53 0h0m4.53 0h0m4.53 0h0m4.53 0h0m4.53 0h0m-70.22 3.93h0m4.53 0h0m4.53 0h0m4.53 0h0m4.53 0h0m4.53 0h0m4.53 0h0m4.53 0h0m4.53 0h0m4.53 0h0m4.53 0h0m4.53 0h0m4.53 0h0m4.53 0h0m4.53 0h0m4.53 0h0m-70.22 3.93h0m4.53 0h0m4.53 0h0m4.53 0h0m4.53 0h0m4.53 0h0m4.53 0h0m4.53 0h0m4.53 0h0m4.53 0h0m4.53 0h0m4.53 0h0m4.53 0h0m4.53 0h0m4.53 0h0m4.53 0h0m4.53 0h0m-74.75 3.93h0m4.53 0h0m4.53 0h0m4.53 0h0m4.53 0h0m4.53 0h0m4.53 0h0m4.53 0h0m4.53 0h0m4.53 0h0m4.53 0h0m4.53 0h0m4.53 0h0m4.53 0h0m4.53 0h0m4.53 0h0m4.53 0h0m4.53 0h0m-79.27 3.93h0m4.53 0h0m4.53 0h0m4.53 0h0m4.53 0h0m4.53 0h0m4.53 0h0m4.53 0h0m4.53 0h0m4.53 0h0m4.53 0h0m4.53 0h0m4.53 0h0m4.53 0h0m4.53 0h0m4.53 0h0m4.53 0h0m4.53 0h0m4.53 0h0m-79.27 3.93h0m4.53 0h0m4.53 0h0m4.53 0h0m4.53 0h0m4.53 0h0m4.53 0h0m4.53 0h0m4.53 0h0m4.53 0h0m4.53 0h0m4.53 0h0m4.53 0h0m4.53 0h0m4.53 0h0m4.53 0h0m4.53 0h0m4.53 0h0m-79.27 3.93h0m4.53 0h0m4.53 0h0m4.53 0h0m4.53 0h0m4.53 0h0m4.53 0h0m4.53 0h0m4.53 0h0m4.53 0h0m4.53 0h0m4.53 0h0m4.53 0h0m4.53 0h0m4.53 0h0m4.53 0h0m4.53 0h0m4.53 0h0m4.53 0h0m-79.27 3.93h0m4.53 0h0m4.53 0h0m4.53 0h0m4.53 0h0m4.53 0h0m4.53 0h0m4.53 0h0m4.53 0h0m4.53 0h0m4.53 0h0m4.53 0h0m4.53 0h0m4.53 0h0m4.53 0h0m4.53 0h0m4.53 0h0m4.53 0h0m-74.75 3.93h0m4.53 0h0m4.53 0h0m4.53 0h0m4.53 0h0m4.53 0h0m4.53 0h0m4.53 0h0m4.53 0h0m4.53 0h0m4.53 0h0m4.53 0h0m4.53 0h0m4.53 0h0m4.53 0h0m4.53 0h0m4.53 0h0m-70.22 3.93h0m4.53 0h0m4.53 0h0m4.53 0h0m4.53 0h0m4.53 0h0m4.53 0h0m4.53 0h0m4.53 0h0m4.53 0h0m4.53 0h0m4.53 0h0m4.53 0h0m4.53 0h0m4.53 0h0m4.53 0h0m-65.69 3.93h0m4.53 0h0m4.53 0h0m4.53 0h0m4.53 0h0m4.53 0h0m4.53 0h0m4.53 0h0m4.53 0h0m4.53 0h0m4.53 0h0m4.53 0h0m4.53 0h0m4.53 0h0m4.53 0h0m4.53 0h0m-65.69 3.93h0m4.53 0h0m4.53 0h0m4.53 0h0m4.53 0h0m4.53 0h0m4.53 0h0m4.53 0h0m4.53 0h0m4.53 0h0m4.53 0h0m4.53 0h0m4.53 0h0m4.53 0h0m-56.62 3.93h0m4.53 0h0m4.53 0h0m4.53 0h0m4.53 0h0m4.53 0h0m4.53 0h0m4.53 0h0m4.53 0h0m4.53 0h0m4.53 0h0m4.53 0h0m4.53 0h0m-52.09 3.93h0m4.53 0h0m4.53 0h0m4.53 0h0m4.53 0h0m4.53 0h0m4.53 0h0m4.53 0h0m4.53 0h0m4.53 0h0m4.53 0h0m4.53 0h0m-43.03 3.93h0m4.53 0h0m4.53 0h0m4.53 0h0m4.53 0h0m4.53 0h0m4.53 0h0m4.53 0h0m4.53 0h0m-29.45 3.93h0m4.53 0h0m4.53 0h0m4.53 0h0m4.53 0h0m4.53 0h0M817.03 280.18h0m4.53 0h0m-15.86 3.93h0m4.53 0h0m4.53 0h0m4.53 0h0m4.53 0h0m4.53 0h0m4.53 0h0m-29.45 3.93h0m4.53 0h0m4.53 0h0m4.53 0h0m4.53 0h0m4.53 0h0m4.53 0h0m4.53 0h0m-29.45 3.93h0m4.53 0h0m4.53 0h0m4.53 0h0m4.53 0h0m4.53 0h0m4.53 0h0m-24.92 3.93h0m4.53 0h0m4.53 0h0m4.53 0h0m4.53 0h0m4.53 0h0m-24.92 3.93h0m4.53 0h0m4.53 0h0m4.53 0h0m4.53 0h0m4.53 0h0m4.53 0h0m-29.45 3.93h0m4.53 0h0m4.53 0h0m4.53 0h0m4.53 0h0m4.53 0h0m4.53 0h0m4.53 0h0m-29.45 3.93h0m4.53 0h0m4.53 0h0m4.53 0h0m4.53 0h0m4.53 0h0m4.53 0h0m-15.86 3.93h0m4.53 0h0M949.66 369.29h0m-6.79 3.93h0m4.53 0h0m4.53 0h0m4.53 0h0m-24.91 3.93h0m4.53 0h0m4.53 0h0m4.53 0h0m4.53 0h0m4.53 0h0m4.53 0h0m4.53 0h0m4.53 0h0m-38.5 3.93h0m4.53 0h0m4.53 0h0m4.53 0h0m4.53 0h0m4.53 0h0m4.53 0h0m4.53 0h0m4.53 0h0m4.53 0h0m-43.03 3.93h0m4.53 0h0m4.53 0h0m4.53 0h0m4.53 0h0m4.53 0h0m4.53 0h0m4.53 0h0m4.53 0h0m4.53 0h0m4.53 0h0m-47.56 3.93h0m4.53 0h0m4.53 0h0m4.53 0h0m4.53 0h0m4.53 0h0m4.53 0h0m4.53 0h0m4.53 0h0m4.53 0h0m4.53 0h0m4.53 0h0m-47.56 3.93h0m4.53 0h0m4.53 0h0m4.53 0h0m4.53 0h0m4.53 0h0m4.53 0h0m4.53 0h0m4.53 0h0m4.53 0h0m4.53 0h0m-47.56 3.93h0m4.53 0h0m4.53 0h0m4.53 0h0m4.53 0h0m4.53 0h0m4.53 0h0m4.53 0h0m4.53 0h0m4.53 0h0m4.53 0h0m4.53 0h0m-47.56 3.93h0m4.53 0h0m4.53 0h0m4.53 0h0m4.53 0h0m4.53 0h0m4.53 0h0m4.53 0h0m4.53 0h0m4.53 0h0m4.53 0h0m-47.56 3.93h0m4.53 0h0m4.53 0h0m4.53 0h0m4.53 0h0m4.53 0h0m4.53 0h0m4.53 0h0m4.53 0h0m4.53 0h0m4.53 0h0m4.53 0h0m-47.56 3.93h0m4.53 0h0m4.53 0h0m4.53 0h0m4.53 0h0m4.53 0h0m4.53 0h0m4.53 0h0m4.53 0h0m4.53 0h0m4.53 0h0m-43.03 3.93h0m4.53 0h0m4.53 0h0m4.53 0h0m4.53 0h0m4.53 0h0m4.53 0h0m4.53 0h0m4.53 0h0m4.53 0h0m-38.5 3.93h0m4.53 0h0m4.53 0h0m4.53 0h0m4.53 0h0m4.53 0h0m4.53 0h0m4.53 0h0m4.53 0h0m-24.91 3.93h0m4.53 0h0m4.53 0h0m4.53 0h0"/><path stroke="#f4b098" d="M582.53 571.57h0m-2.26 3.93h0m4.53 0h0m4.53 0h0M712 287.71h0m-2.26 3.93h0m4.53 0h0m-11.32 3.93h0m4.53 0h0m4.53 0h0m4.53 0h0m4.53 0h0m-15.85 3.93h0m4.53 0h0m4.53 0h0m4.53 0h0m-15.85 3.93h0m4.53 0h0m4.53 0h0m4.53 0h0m4.53 0h0m-11.32 3.93h0m4.53 0h0m-2.26 3.93h0M821.2 685.06h0m-2.26 3.93h0m4.53 0h0m-11.32 3.93h0m4.53 0h0m4.53 0h0m4.53 0h0m4.53 0h0m-15.85 3.93h0m4.53 0h0m4.53 0h0m4.53 0h0m-11.32 3.93h0m4.53 0h0m4.53 0h0m-6.79 3.93h0m4.53 0h0M846.84 292.2h0m4.53 0h0m4.53 0h0m4.53 0h0m4.53 0h0m-15.85 3.93h0m4.53 0h0m4.53 0h0m4.53 0h0m-11.32 3.93h0m4.53 0h0m4.53 0h0m-6.79 3.93h0M980.54 516.8h0m4.53 0h0m4.53 0h0m4.53 0h0m4.53 0h0m-15.85 3.93h0m4.53 0h0m4.53 0h0m4.53 0h0m-11.32 3.93h0m4.53 0h0m4.53 0h0m-6.79 3.93h0M662.87 652.97h0m-11.32 3.93h0m4.53 0h0m4.53 0h0m4.53 0h0m4.53 0h0m-15.85 3.93h0m4.53 0h0m4.53 0h0m4.53 0h0m-11.32 3.93h0m4.53 0h0m4.53 0h0m-6.79 3.93h0m4.53 0h0M843.29 651.18h0m4.53 0h0m-15.86 3.93h0m4.53 0h0m4.53 0h0m4.53 0h0m4.53 0h0m4.53 0h0m4.53 0h0m-29.45 3.93h0m4.53 0h0m4.53 0h0m4.53 0h0m4.53 0h0m4.53 0h0m4.53 0h0m4.53 0h0m-29.45 3.93h0m4.53 0h0m4.53 0h0m4.53 0h0m4.53 0h0m4.53 0h0m4.53 0h0m-29.45 3.93h0m4.53 0h0m4.53 0h0m4.53 0h0m4.53 0h0m4.53 0h0m4.53 0h0m4.53 0h0m-33.98 3.93h0m4.53 0h0m4.53 0h0m4.53 0h0m4.53 0h0m4.53 0h0m4.53 0h0m4.53 0h0m-29.45 3.93h0m4.53 0h0m4.53 0h0m4.53 0h0m4.53 0h0m4.53 0h0m4.53 0h0m4.53 0h0m-29.45 3.93h0m4.53 0h0m4.53 0h0m4.53 0h0m4.53 0h0m4.53 0h0m4.53 0h0m-15.86 3.93h0m4.53 0h0M986.37 468h0m4.53 0h0m4.53 0h0m-6.79 3.93h0m4.53 0h0m-6.79 3.93h0m4.53 0h0m4.53 0h0M583.04 555.6h0m18.12 0h0M644.54 323.5h0m4.53 0h0m13.59 0h0m-15.85 3.93h0m13.59 0h0m-9.06 7.86h0M903.5 314.9h0m-2.26 3.93h0m4.53 0h0M914.47 324.47h0m4.53 0h0m4.53 0h0m-11.32 3.93h0m4.53 0h0m4.53 0h0m-6.79 3.93h0m4.53 0h0m4.53 0h0M936.37 640.7h0m4.53 0h0m4.53 0h0m-11.32 3.93h0m4.53 0h0m4.53 0h0m4.53 0h0m-11.32 3.93h0m4.53 0h0m4.53 0h0M752.7 697.77h0m-2.26 3.93h0m4.53 0h0m-6.79 3.93h0m4.53 0h0m4.53 0h0M640.4 645.27h0m2.26 3.93h0m-2.26 3.93h0M715 279.7h0M985.4 392.6h0M999.6 547.3h0M926.2 656.4h0M934.3 655.5h0M925.3 662.9h0M835 706h0M791.7 714.7h0M763.3 710.4h0M665.8 675.9h0M763.1 710.8h0M562.6 474.9h0M566.8 528.7h0M568.9 538.1h0M591.3 597.4h0M595.5 592.9h0"/><path stroke="#eea08c" d="M562.74 489.07h0m4.53 0h0m-6.79 3.93h0m4.53 0h0m4.53 0h0m-2.26 3.93h0M934.8 338.81h0m-2.26 3.93h0m4.53 0h0m-11.32 3.93h0m4.53 0h0m4.53 0h0m4.53 0h0m4.53 0h0m-15.85 3.93h0m4.53 0h0m4.53 0h0m4.53 0h0m-15.85 3.93h0m4.53 0h0m4.53 0h0m4.53 0h0m4.53 0h0m-11.32 3.93h0m4.53 0h0m-2.26 3.93h0M627.5 591.06h0m-2.26 3.93h0m4.53 0h0m-11.32 3.93h0m4.53 0h0m4.53 0h0m4.53 0h0m4.53 0h0m-15.85 3.93h0m4.53 0h0m4.53 0h0m4.53 0h0m-15.85 3.93h0m4.53 0h0m4.53 0h0m4.53 0h0m4.53 0h0m-11.32 3.93h0m4.53 0h0m-2.26 3.93h0M604.24 573.74h0m4.53 0h0m-11.32 3.93h0m4.53 0h0m4.53 0h0m4.53 0h0m4.53 0h0m-15.85 3.93h0m4.53 0h0m4.53 0h0m4.53 0h0m-11.32 3.93h0m4.53 0h0m4.53 0h0m-6.79 3.93h0m4.53 0h0M882.75 657.31h0m-6.79 3.93h0m4.53 0h0m4.53 0h0m4.53 0h0m-15.85 3.93h0m4.53 0h0m4.53 0h0m4.53 0h0m4.53 0h0m-15.85 3.93h0m4.53 0h0m4.53 0h0m4.53 0h0m-15.85 3.93h0m4.53 0h0m4.53 0h0m4.53 0h0m4.53 0h0m-15.85 3.93h0m4.53 0h0m4.53 0h0m4.53 0h0m-6.79 3.93h0M778.24 278.7h0m4.53 0h0m4.53 0h0m4.53 0h0m4.53 0h0m-15.85 3.93h0m4.53 0h0m4.53 0h0m4.53 0h0m-11.32 3.93h0m4.53 0h0m4.53 0h0M959.2 352.97h0m-2.26 3.93h0m4.53 0h0m-2.26 3.93h0M985.1 572.8h0m-2.26 3.93h0m4.53 0h0m-6.79 3.93h0m4.53 0h0m4.53 0h0M869.03 689.23h0M919.7 313.2h0"/><path stroke="#e08c7e" d="M576.87 409.6h0m4.53 0h0m4.53 0h0M621.8 372.81h0m-2.26 3.93h0m4.53 0h0m-11.32 3.93h0m4.53 0h0m4.53 0h0m4.53 0h0m4.53 0h0m-15.85 3.93h0m4.53 0h0m4.53 0h0m4.53 0h0m-15.85 3.93h0m4.53 0h0m4.53 0h0m4.53 0h0m-6.79 3.93h0m4.53 0h0m-2.26 3.93h0M887 661.2h0M887 676.9h0M586.84 436.43h0m4.53 0h0M655.87 327.43h0M880.41 298.27h0m2.26 3.93h0m-6.79 3.93h0m4.53 0h0M894 304h0m-2.26 3.93h0m4.53 0h0M990.9 406.57h0m-2.26 3.93h0m4.53 0h0m-6.79 3.93h0m4.53 0h0M949.96 640.7h0M748.17 697.77h0m9.06 0h0m-11.32 3.93h0M797.3 698.3h0m-2.26 3.93h0m4.53 0h0m-6.79 3.93h0m4.53 0h0m4.53 0h0M871.3 685.3h0m2.26 3.93h0m-6.79 3.93h0m4.53 0h0M677 671.07h0m-2.26 3.93h0m4.53 0h0m-2.26 3.93h0M766.4 277h0M726.7 317.7h0M604.4 358.2h0M595.9 373.7h0M840 278.6h0M844.7 278.6h0M853.3 277.7h0M802 269h0M809.6 272.3h0M804 275.7h0M945.2 369.3h0M954 369.3h0M976.5 393h0M974.3 396.6h0M922.3 400.9h0M945.2 424.3h0M949.7 424.3h0M954 346.2h0M994.3 433.8h0M1003.2 505.9h0M1007.9 505.9h0M997.5 537.6h0M1002.3 537.6h0M952.8 630.8h0M919.7 661.1h0M918.7 661.3h0M881 688.3h0M887.3 688.3h0M855.3 696h0M780 711.3h0M784.7 711.3h0M643.7 660.5h0M733.7 708.1h0M607 617.9h0M611.5 617.9h0M566.3 479.9h0M575 563.1h0M590 584.9h0"/><path stroke="#cc7f74" d="M684.8 298.17h0m-2.26 3.93h0m4.53 0h0m-6.79 3.93h0m4.53 0h0M730.67 280.07h0m4.53 0h0m4.53 0h0m-11.32 3.93h0m4.53 0h0m4.53 0h0m-6.79 3.93h0m4.53 0h0m4.53 0h0"/><path stroke="#ba766e" d="M690.59 373.4h0m4.53 0h0m4.53 0h0m4.53 0h0m4.53 0h0m4.53 0h0m4.53 0h0m4.53 0h0m4.53 0h0m4.53 0h0m4.53 0h0m4.53 0h0m-65.68 3.93h0m4.53 0h0m4.53 0h0m4.53 0h0m4.53 0h0m4.53 0h0m4.53 0h0m4.53 0h0m4.53 0h0m4.53 0h0m4.53 0h0m4.53 0h0m4.53 0h0m4.53 0h0m4.53 0h0m4.53 0h0m4.53 0h0m4.53 0h0m4.53 0h0m-88.34 3.93h0m4.53 0h0m4.53 0h0m4.53 0h0m4.53 0h0m4.53 0h0m4.53 0h0m4.53 0h0m4.53 0h0m4.53 0h0m4.53 0h0m4.53 0h0m4.53 0h0m4.53 0h0m4.53 0h0m4.53 0h0m4.53 0h0m4.53 0h0m4.53 0h0m4.53 0h0m4.53 0h0m4.53 0h0m-101.93 3.93h0m4.53 0h0m4.53 0h0m4.53 0h0m4.53 0h0m4.53 0h0m4.53 0h0m4.53 0h0m4.53 0h0m4.53 0h0m4.53 0h0m4.53 0h0m4.53 0h0m4.53 0h0m4.53 0h0m4.53 0h0m4.53 0h0m4.53 0h0m4.53 0h0m4.53 0h0m4.53 0h0m4.53 0h0m4.53 0h0m4.53 0h0m4.53 0h0m-115.51 3.93h0m4.53 0h0m4.53 0h0m4.53 0h0m4.53 0h0m4.53 0h0m4.53 0h0m4.53 0h0m4.53 0h0m4.53 0h0m4.53 0h0m4.53 0h0m4.53 0h0m4.53 0h0m4.53 0h0m4.53 0h0m4.53 0h0m4.53 0h0m4.53 0h0m4.53 0h0m4.53 0h0m4.53 0h0m4.53 0h0m4.53 0h0m4.53 0h0m4.53 0h0m4.53 0h0m4.53 0h0m-129.11 3.93h0m4.53 0h0m4.53 0h0m4.53 0h0m4.53 0h0m4.53 0h0m4.53 0h0m4.53 0h0m4.53 0h0m4.53 0h0m4.53 0h0m4.53 0h0m4.53 0h0m4.53 0h0m4.53 0h0m4.53 0h0m4.53 0h0m4.53 0h0m4.53 0h0m4.53 0h0m4.53 0h0m4.53 0h0m4.53 0h0m4.53 0h0m4.53 0h0m4.53 0h0m4.53 0h0m4.53 0h0m4.53 0h0m4.53 0h0m4.53 0h0m-142.7 3.93h0m4.53 0h0m4.53 0h0m4.53 0h0m4.53 0h0m4.53 0h0m4.53 0h0m4.53 0h0m4.53 0h0m4.53 0h0m4.53 0h0m4.53 0h0m4.53 0h0m4.53 0h0m4.53 0h0m4.53 0h0m4.53 0h0m4.53 0h0m4.53 0h0m4.53 0h0m4.53 0h0m4.53 0h0m4.53 0h0m4.53 0h0m4.53 0h0m4.53 0h0m4.53 0h0m4.53 0h0m4.53 0h0m4.53 0h0m4.53 0h0m4.53 0h0m4.53 0h0m4.53 0h0m-151.75 3.93h0m4.53 0h0m4.53 0h0m4.53 0h0m4.53 0h0m4.53 0h0m4.53 0h0m4.53 0h0m4.53 0h0m4.53 0h0m4.53 0h0m4.53 0h0m4.53 0h0m4.53 0h0m4.53 0h0m4.53 0h0m4.53 0h0m4.53 0h0m4.53 0h0m4.53 0h0m4.53 0h0m4.53 0h0m4.53 0h0m4.53 0h0m4.53 0h0m4.53 0h0m4.53 0h0m4.53 0h0m4.53 0h0m4.53 0h0m4.53 0h0m4.53 0h0m4.53 0h0m4.53 0h0m4.53 0h0m-160.82 3.93h0m4.53 0h0m4.53 0h0m4.53 0h0m4.53 0h0m4.53 0h0m4.53 0h0m4.53 0h0m4.53 0h0m4.53 0h0m4.53 0h0m4.53 0h0m4.53 0h0m4.53 0h0m4.53 0h0m4.53 0h0m4.53 0h0m4.53 0h0m4.53 0h0m4.53 0h0m4.53 0h0m4.53 0h0m4.53 0h0m4.53 0h0m4.53 0h0m4.53 0h0m4.53 0h0m4.53 0h0m4.53 0h0m4.53 0h0m4.53 0h0m4.53 0h0m4.53 0h0m4.53 0h0m4.53 0h0m4.53 0h0m4.53 0h0m4.53 0h0m-169.88 3.93h0m4.53 0h0m4.53 0h0m4.53 0h0m4.53 0h0m4.53 0h0m4.53 0h0m4.53 0h0m4.53 0h0m4.53 0h0m4.53 0h0m4.53 0h0m4.53 0h0m4.53 0h0m4.53 0h0m4.53 0h0m4.53 0h0m4.53 0h0m4.53 0h0m4.53 0h0m4.53 0h0m4.53 0h0m4.53 0h0m4.53 0h0m4.53 0h0m4.53 0h0m4.53 0h0m4.53 0h0m4.53 0h0m4.53 0h0m4.53 0h0m4.53 0h0m4.53 0h0m4.53 0h0m4.53 0h0m4.53 0h0m4.53 0h0m4.53 0h0m4.53 0h0m-174.41 3.93h0m4.53 0h0m4.53 0h0m4.53 0h0m4.53 0h0m4.53 0h0m4.53 0h0m4.53 0h0m4.53 0h0m4.53 0h0m4.53 0h0m4.53 0h0m4.53 0h0m4.53 0h0m4.53 0h0m4.53 0h0m4.53 0h0m4.53 0h0m4.53 0h0m4.53 0h0m4.53 0h0m4.53 0h0m4.53 0h0m4.53 0h0m4.53 0h0m4.53 0h0m4.53 0h0m4.53 0h0m4.53 0h0m4.53 0h0m4.53 0h0m4.53 0h0m4.53 0h0m4.53 0h0m4.53 0h0m4.53 0h0m4.53 0h0m4.53 0h0m4.53 0h0m4.53 0h0m-183.47 3.93h0m4.53 0h0m4.53 0h0m4.53 0h0m4.53 0h0m4.53 0h0m4.53 0h0m4.53 0h0m4.53 0h0m4.53 0h0m4.53 0h0m4.53 0h0m4.53 0h0m4.53 0h0m4.53 0h0m4.53 0h0m4.53 0h0m4.53 0h0m4.53 0h0m4.53 0h0m4.53 0h0m4.53 0h0m4.53 0h0m4.53 0h0m4.53 0h0m4.53 0h0m4.53 0h0m4.53 0h0m4.53 0h0m4.53 0h0m4.53 0h0m4.53 0h0m4.53 0h0m4.53 0h0m4.53 0h0m4.53 0h0m4.53 0h0m4.53 0h0m4.53 0h0m4.53 0h0m4.53 0h0m4.53 0h0m4.53 0h0m-192.52 3.93h0m4.53 0h0m4.53 0h0m4.53 0h0m4.53 0h0m4.53 0h0m4.53 0h0m4.53 0h0m4.53 0h0m4.53 0h0m4.53 0h0m4.53 0h0m4.53 0h0m4.53 0h0m4.53 0h0m4.53 0h0m4.53 0h0m4.53 0h0m4.53 0h0m4.53 0h0m4.53 0h0m4.53 0h0m4.53 0h0m4.53 0h0m4.53 0h0m4.53 0h0m4.53 0h0m4.53 0h0m4.53 0h0m4.53 0h0m4.53 0h0m4.53 0h0m4.53 0h0m4.53 0h0m4.53 0h0m4.53 0h0m4.53 0h0m4.53 0h0m4.53 0h0m4.53 0h0m4.53 0h0m4.53 0h0m4.53 0h0m4.53 0h0m-197.05 3.93h0m4.53 0h0m4.53 0h0m4.53 0h0m4.53 0h0m4.53 0h0m4.53 0h0m4.53 0h0m4.53 0h0m4.53 0h0m4.53 0h0m4.53 0h0m4.53 0h0m4.53 0h0m4.53 0h0m4.53 0h0m4.53 0h0m4.53 0h0m4.53 0h0m4.53 0h0m4.53 0h0m4.53 0h0m4.53 0h0m4.53 0h0m4.53 0h0m4.53 0h0m4.53 0h0m4.53 0h0m4.53 0h0m4.53 0h0m4.53 0h0m4.53 0h0m4.53 0h0m4.53 0h0m4.53 0h0m4.53 0h0m4.53 0h0m4.53 0h0m4.53 0h0m4.53 0h0m4.53 0h0m4.53 0h0m4.53 0h0m4.53 0h0m4.53 0h0m-201.58 3.93h0m4.53 0h0m4.53 0h0m4.53 0h0m4.53 0h0m4.53 0h0m4.53 0h0m4.53 0h0m4.53 0h0m4.53 0h0m4.53 0h0m4.53 0h0m4.53 0h0m4.53 0h0m4.53 0h0m4.53 0h0m4.53 0h0m4.53 0h0m4.53 0h0m4.53 0h0m4.53 0h0m4.53 0h0m4.53 0h0m4.53 0h0m4.53 0h0m4.53 0h0m4.53 0h0m4.53 0h0m4.53 0h0m4.53 0h0m4.53 0h0m4.53 0h0m4.53 0h0m4.53 0h0m4.53 0h0m4.53 0h0m4.53 0h0m4.53 0h0m4.53 0h0m4.53 0h0m4.53 0h0m4.53 0h0m4.53 0h0m4.53 0h0m4.53 0h0m4.53 0h0m-206.12 3.93h0m4.53 0h0m4.53 0h0m4.53 0h0m4.53 0h0m4.53 0h0m4.53 0h0m4.53 0h0m4.53 0h0m4.53 0h0m4.53 0h0m4.53 0h0m4.53 0h0m4.53 0h0m4.53 0h0m4.53 0h0m4.53 0h0m4.53 0h0m4.53 0h0m4.53 0h0m4.53 0h0m4.53 0h0m4.53 0h0m4.53 0h0m4.53 0h0m4.53 0h0m4.53 0h0m4.53 0h0m4.53 0h0m4.53 0h0m4.53 0h0m4.53 0h0m4.53 0h0m4.53 0h0m4.53 0h0m4.53 0h0m4.53 0h0m4.53 0h0m4.53 0h0m4.53 0h0m4.53 0h0m4.53 0h0m4.53 0h0m4.53 0h0m4.53 0h0m4.53 0h0m4.53 0h0m-210.65 3.93h0m4.53 0h0m4.53 0h0m4.53 0h0m4.53 0h0m4.53 0h0m4.53 0h0m4.53 0h0m4.53 0h0m4.53 0h0m4.53 0h0m4.53 0h0m4.53 0h0m4.53 0h0m4.53 0h0m4.53 0h0m4.53 0h0m4.53 0h0m4.53 0h0m4.53 0h0m4.53 0h0m4.53 0h0m4.53 0h0m4.53 0h0m4.53 0h0m4.53 0h0m4.53 0h0m4.53 0h0m4.53 0h0m4.53 0h0m4.53 0h0m4.53 0h0m4.53 0h0m4.53 0h0m4.53 0h0m4.53 0h0m4.53 0h0m4.53 0h0m4.53 0h0m4.53 0h0m4.53 0h0m4.53 0h0m4.53 0h0m4.53 0h0m4.53 0h0m4.53 0h0m4.53 0h0m4.53 0h0m-215.18 3.93h0m4.53 0h0m4.53 0h0m4.53 0h0m4.53 0h0m4.53 0h0m4.53 0h0m4.53 0h0m4.53 0h0m4.53 0h0m4.53 0h0m4.53 0h0m4.53 0h0m4.53 0h0m4.53 0h0m4.53 0h0m4.53 0h0m4.53 0h0m4.53 0h0m4.53 0h0m4.53 0h0m4.53 0h0m4.53 0h0m4.53 0h0m4.53 0h0m4.53 0h0m4.53 0h0m4.53 0h0m4.53 0h0m4.53 0h0m4.53 0h0m4.53 0h0m4.53 0h0m4.53 0h0m4.53 0h0m4.53 0h0m4.53 0h0m4.53 0h0m4.53 0h0m4.53 0h0m4.53 0h0m4.53 0h0m4.53 0h0m4.53 0h0m4.53 0h0m4.53 0h0m4.53 0h0m4.53 0h0m4.53 0h0m-219.71 3.93h0m4.53 0h0m4.53 0h0m4.53 0h0m4.53 0h0m4.53 0h0m4.53 0h0m4.53 0h0m4.53 0h0m4.53 0h0m4.53 0h0m4.53 0h0m4.53 0h0m4.53 0h0m4.53 0h0m4.53 0h0m4.53 0h0m4.53 0h0m4.53 0h0m4.53 0h0m4.53 0h0m4.53 0h0m4.53 0h0m4.53 0h0m4.53 0h0m4.53 0h0m4.53 0h0m4.53 0h0m4.53 0h0m4.53 0h0m4.53 0h0m4.53 0h0m4.53 0h0m4.53 0h0m4.53 0h0m4.53 0h0m4.53 0h0m4.53 0h0m4.53 0h0m4.53 0h0m4.53 0h0m4.53 0h0m4.53 0h0m4.53 0h0m4.53 0h0m4.53 0h0m4.53 0h0m4.53 0h0m4.53 0h0m4.53 0h0m-219.71 3.93h0m4.53 0h0m4.53 0h0m4.53 0h0m4.53 0h0m4.53 0h0m4.53 0h0m4.53 0h0m4.53 0h0m4.53 0h0m4.53 0h0m4.53 0h0m4.53 0h0m4.53 0h0m4.53 0h0m4.53 0h0m4.53 0h0m4.53 0h0m4.53 0h0m4.53 0h0m4.53 0h0m4.53 0h0m4.53 0h0m4.53 0h0m4.53 0h0m4.53 0h0m4.53 0h0m4.53 0h0m4.53 0h0m4.53 0h0m4.53 0h0m4.53 0h0m4.53 0h0m4.53 0h0m4.53 0h0m4.53 0h0m4.53 0h0m4.53 0h0m4.53 0h0m4.53 0h0m4.53 0h0m4.53 0h0m4.53 0h0m4.53 0h0m4.53 0h0m4.53 0h0m4.53 0h0m4.53 0h0m4.53 0h0m-219.71 3.93h0m4.53 0h0m4.53 0h0m4.53 0h0m4.53 0h0m4.53 0h0m4.53 0h0m4.53 0h0m4.53 0h0m4.53 0h0m4.53 0h0m4.53 0h0m4.53 0h0m4.53 0h0m4.53 0h0m4.53 0h0m4.53 0h0m4.53 0h0m4.53 0h0m4.53 0h0m4.53 0h0m4.53 0h0m4.53 0h0m4.53 0h0m4.53 0h0m4.53 0h0m4.53 0h0m4.53 0h0m4.53 0h0m4.53 0h0m4.53 0h0m4.53 0h0m4.53 0h0m4.53 0h0m4.53 0h0m4.53 0h0m4.53 0h0m4.53 0h0m4.53 0h0m4.53 0h0m4.53 0h0m4.53 0h0m4.53 0h0m4.53 0h0m4.53 0h0m4.53 0h0m4.53 0h0m4.53 0h0m4.53 0h0m4.53 0h0m-224.24 3.93h0m4.53 0h0m4.53 0h0m4.53 0h0m4.53 0h0m4.53 0h0m4.53 0h0m4.53 0h0m4.53 0h0m4.53 0h0m4.53 0h0m4.53 0h0m4.53 0h0m4.53 0h0m4.53 0h0m4.53 0h0m4.53 0h0m4.53 0h0m4.53 0h0m4.53 0h0m4.53 0h0m4.53 0h0m4.53 0h0m4.53 0h0m4.53 0h0m4.53 0h0m4.53 0h0m4.53 0h0m4.53 0h0m4.53 0h0m4.53 0h0m4.53 0h0m4.53 0h0m4.53 0h0m4.53 0h0m4.53 0h0m4.53 0h0m4.53 0h0m4.53 0h0m4.53 0h0m4.53 0h0m4.53 0h0m4.53 0h0m4.53 0h0m4.53 0h0m4.53 0h0m4.53 0h0m4.53 0h0m4.53 0h0m4.53 0h0m4.53 0h0m-228.76 3.93h0m4.53 0h0m4.53 0h0m4.53 0h0m4.53 0h0m4.53 0h0m4.53 0h0m4.53 0h0m4.53 0h0m4.53 0h0m4.53 0h0m4.53 0h0m4.53 0h0m4.53 0h0m4.53 0h0m4.53 0h0m4.53 0h0m4.53 0h0m4.53 0h0m4.53 0h0m4.53 0h0m4.53 0h0m4.53 0h0m4.53 0h0m4.53 0h0m4.53 0h0m4.53 0h0m4.53 0h0m4.53 0h0m4.53 0h0m4.53 0h0m4.53 0h0m4.53 0h0m4.53 0h0m4.53 0h0m4.53 0h0m4.53 0h0m4.53 0h0m4.53 0h0m4.53 0h0m4.53 0h0m4.53 0h0m4.53 0h0m4.53 0h0m4.53 0h0m4.53 0h0m4.53 0h0m4.53 0h0m4.53 0h0m4.53 0h0m4.53 0h0m4.53 0h0m-233.29 3.93h0m4.53 0h0m4.53 0h0m4.53 0h0m4.53 0h0m4.53 0h0m4.53 0h0m4.53 0h0m4.53 0h0m4.53 0h0m4.53 0h0m4.53 0h0m4.53 0h0m4.53 0h0m4.53 0h0m4.53 0h0m4.53 0h0m4.53 0h0m4.53 0h0m4.53 0h0m4.53 0h0m4.53 0h0m4.53 0h0m4.53 0h0m4.53 0h0m4.53 0h0m4.53 0h0m4.53 0h0m4.53 0h0m4.53 0h0m4.53 0h0m4.53 0h0m4.53 0h0m4.53 0h0m4.53 0h0m4.53 0h0m4.53 0h0m4.53 0h0m4.53 0h0m4.53 0h0m4.53 0h0m4.53 0h0m4.53 0h0m4.53 0h0m4.53 0h0m4.53 0h0m4.53 0h0m4.53 0h0m4.53 0h0m4.53 0h0m4.53 0h0m4.53 0h0m4.53 0h0m-233.29 3.93h0m4.53 0h0m4.53 0h0m4.53 0h0m4.53 0h0m4.53 0h0m4.53 0h0m4.53 0h0m4.53 0h0m4.53 0h0m4.53 0h0m4.53 0h0m4.53 0h0m4.53 0h0m4.53 0h0m4.53 0h0m4.53 0h0m4.53 0h0m4.53 0h0m4.53 0h0m4.53 0h0m4.53 0h0m4.53 0h0m4.53 0h0m4.53 0h0m4.53 0h0m4.53 0h0m4.53 0h0m4.53 0h0m4.53 0h0m4.53 0h0m4.53 0h0m4.53 0h0m4.53 0h0m4.53 0h0m4.53 0h0m4.53 0h0m4.53 0h0m4.53 0h0m4.53 0h0m4.53 0h0m4.53 0h0m4.53 0h0m4.53 0h0m4.53 0h0m4.53 0h0m4.53 0h0m4.53 0h0m4.53 0h0m4.53 0h0m4.53 0h0m4.53 0h0m-233.29 3.93h0m4.53 0h0m4.53 0h0m4.53 0h0m4.53 0h0m4.53 0h0m4.53 0h0m4.53 0h0m4.53 0h0m4.53 0h0m4.53 0h0m4.53 0h0m4.53 0h0m4.53 0h0m4.53 0h0m4.53 0h0m4.53 0h0m4.53 0h0m4.53 0h0m4.53 0h0m4.53 0h0m4.53 0h0m4.53 0h0m4.53 0h0m4.53 0h0m4.53 0h0m4.53 0h0m4.53 0h0m4.53 0h0m4.53 0h0m4.53 0h0m4.53 0h0m4.53 0h0m4.53 0h0m4.53 0h0m4.53 0h0m4.53 0h0m4.53 0h0m4.53 0h0m4.53 0h0m4.53 0h0m4.53 0h0m4.53 0h0m4.53 0h0m4.53 0h0m4.53 0h0m4.53 0h0m4.53 0h0m4.53 0h0m4.53 0h0m4.53 0h0m4.53 0h0m4.53 0h0m-237.82 3.93h0m4.53 0h0m4.53 0h0m4.53 0h0m4.53 0h0m4.53 0h0m4.53 0h0m4.53 0h0m4.53 0h0m4.53 0h0m4.53 0h0m4.53 0h0m4.53 0h0m4.53 0h0m4.53 0h0m4.53 0h0m4.53 0h0m4.53 0h0m4.53 0h0m4.53 0h0m4.53 0h0m4.53 0h0m4.53 0h0m4.53 0h0m4.53 0h0m4.53 0h0m4.53 0h0m4.53 0h0m4.53 0h0m4.53 0h0m4.53 0h0m4.53 0h0m4.53 0h0m4.53 0h0m4.53 0h0m4.53 0h0m4.53 0h0m4.53 0h0m4.53 0h0m4.53 0h0m4.53 0h0m4.53 0h0m4.53 0h0m4.53 0h0m4.53 0h0m4.53 0h0m4.53 0h0m4.53 0h0m4.53 0h0m4.53 0h0m4.53 0h0m4.53 0h0m4.53 0h0m4.53 0h0m-237.82 3.93h0m4.53 0h0m4.53 0h0m4.53 0h0m4.53 0h0m4.53 0h0m4.53 0h0m4.53 0h0m4.53 0h0m4.53 0h0m4.53 0h0m4.53 0h0m4.53 0h0m4.53 0h0m4.53 0h0m4.53 0h0m4.53 0h0m4.53 0h0m4.53 0h0m4.53 0h0m4.53 0h0m4.53 0h0m4.53 0h0m4.53 0h0m4.53 0h0m4.53 0h0m4.53 0h0m4.53 0h0m4.53 0h0m4.53 0h0m4.53 0h0m4.53 0h0m4.53 0h0m4.53 0h0m4.53 0h0m4.53 0h0m4.53 0h0m4.53 0h0m4.53 0h0m4.53 0h0m4.53 0h0m4.53 0h0m4.53 0h0m4.53 0h0m4.53 0h0m4.53 0h0m4.53 0h0m4.53 0h0m4.53 0h0m4.53 0h0m4.53 0h0m4.53 0h0m4.53 0h0m-237.82 3.93h0m4.53 0h0m4.53 0h0m4.53 0h0m4.53 0h0m4.53 0h0m4.53 0h0m4.53 0h0m4.53 0h0m4.53 0h0m4.53 0h0m4.53 0h0m4.53 0h0m4.53 0h0m4.53 0h0m4.53 0h0m4.53 0h0m4.53 0h0m4.53 0h0m4.53 0h0m4.53 0h0m4.53 0h0m4.53 0h0m4.53 0h0m4.53 0h0m4.53 0h0m4.53 0h0m4.53 0h0m4.53 0h0m4.53 0h0m4.53 0h0m4.53 0h0m4.53 0h0m4.53 0h0m4.53 0h0m4.53 0h0m4.53 0h0m4.53 0h0m4.53 0h0m4.53 0h0m4.53 0h0m4.53 0h0m4.53 0h0m4.53 0h0m4.53 0h0m4.53 0h0m4.53 0h0m4.53 0h0m4.53 0h0m4.53 0h0m4.53 0h0m4.53 0h0m4.53 0h0m4.53 0h0m-237.82 3.93h0m4.53 0h0m4.53 0h0m4.53 0h0m4.53 0h0m4.53 0h0m4.53 0h0m4.53 0h0m4.53 0h0m4.53 0h0m4.53 0h0m4.53 0h0m4.53 0h0m4.53 0h0m4.53 0h0m4.53 0h0m4.53 0h0m4.53 0h0m4.53 0h0m4.53 0h0m4.53 0h0m4.53 0h0m4.53 0h0m4.53 0h0m4.53 0h0m4.53 0h0m4.53 0h0m4.53 0h0m4.53 0h0m4.53 0h0m4.53 0h0m4.53 0h0m4.53 0h0m4.53 0h0m4.53 0h0m4.53 0h0m4.53 0h0m4.53 0h0m4.53 0h0m4.53 0h0m4.53 0h0m4.53 0h0m4.53 0h0m4.53 0h0m4.53 0h0m4.53 0h0m4.53 0h0m4.53 0h0m4.53 0h0m4.53 0h0m4.53 0h0m4.53 0h0m4.53 0h0m-237.82 3.93h0m4.53 0h0m4.53 0h0m4.53 0h0m4.53 0h0m4.53 0h0m4.53 0h0m4.53 0h0m4.53 0h0m4.53 0h0m4.53 0h0m4.53 0h0m4.53 0h0m4.53 0h0m4.53 0h0m4.53 0h0m4.53 0h0m4.53 0h0m4.53 0h0m4.53 0h0m4.53 0h0m4.53 0h0m4.53 0h0m4.53 0h0m4.53 0h0m4.53 0h0m4.53 0h0m4.53 0h0m4.53 0h0m4.53 0h0m4.53 0h0m4.53 0h0m4.53 0h0m4.53 0h0m4.53 0h0m4.53 0h0m4.53 0h0m4.53 0h0m4.53 0h0m4.53 0h0m4.53 0h0m4.53 0h0m4.53 0h0m4.53 0h0m4.53 0h0m4.53 0h0m4.53 0h0m4.53 0h0m4.53 0h0m4.53 0h0m4.53 0h0m4.53 0h0m4.53 0h0m4.53 0h0m-237.82 3.93h0m4.53 0h0m4.53 0h0m4.53 0h0m4.53 0h0m4.53 0h0m4.53 0h0m4.53 0h0m4.53 0h0m4.53 0h0m4.53 0h0m4.53 0h0m4.53 0h0m4.53 0h0m4.53 0h0m4.53 0h0m4.53 0h0m4.53 0h0m4.53 0h0m4.53 0h0m4.53 0h0m4.53 0h0m4.53 0h0m4.53 0h0m4.53 0h0m4.53 0h0m4.53 0h0m4.53 0h0m4.53 0h0m4.53 0h0m4.53 0h0m4.53 0h0m4.53 0h0m4.53 0h0m4.53 0h0m4.53 0h0m4.53 0h0m4.53 0h0m4.53 0h0m4.53 0h0m4.53 0h0m4.53 0h0m4.53 0h0m4.53 0h0m4.53 0h0m4.53 0h0m4.53 0h0m4.53 0h0m4.53 0h0m4.53 0h0m4.53 0h0m4.53 0h0m4.53 0h0m-237.82 3.93h0m4.53 0h0m4.53 0h0m4.53 0h0m4.53 0h0m4.53 0h0m4.53 0h0m4.53 0h0m4.53 0h0m4.53 0h0m4.53 0h0m4.53 0h0m4.53 0h0m4.53 0h0m4.53 0h0m4.53 0h0m4.53 0h0m4.53 0h0m4.53 0h0m4.53 0h0m4.53 0h0m4.53 0h0m4.53 0h0m4.53 0h0m4.53 0h0m4.53 0h0m4.53 0h0m4.53 0h0m4.53 0h0m4.53 0h0m4.53 0h0m4.53 0h0m4.53 0h0m4.53 0h0m4.53 0h0m4.53 0h0m4.53 0h0m4.53 0h0m4.53 0h0m4.53 0h0m4.53 0h0m4.53 0h0m4.53 0h0m4.53 0h0m4.53 0h0m4.53 0h0m4.53 0h0m4.53 0h0m4.53 0h0m4.53 0h0m4.53 0h0m4.53 0h0m4.53 0h0m4.53 0h0m-237.82 3.93h0m4.53 0h0m4.53 0h0m4.53 0h0m4.53 0h0m4.53 0h0m4.53 0h0m4.53 0h0m4.53 0h0m4.53 0h0m4.53 0h0m4.53 0h0m4.53 0h0m4.53 0h0m4.53 0h0m4.53 0h0m4.53 0h0m4.53 0h0m4.53 0h0m4.53 0h0m4.53 0h0m4.53 0h0m4.53 0h0m4.53 0h0m4.53 0h0m4.53 0h0m4.53 0h0m4.53 0h0m4.53 0h0m4.53 0h0m4.53 0h0m4.53 0h0m4.53 0h0m4.53 0h0m4.53 0h0m4.53 0h0m4.53 0h0m4.53 0h0m4.53 0h0m4.53 0h0m4.53 0h0m4.53 0h0m4.53 0h0m4.53 0h0m4.53 0h0m4.53 0h0m4.53 0h0m4.53 0h0m4.53 0h0m4.53 0h0m4.53 0h0m4.53 0h0m4.53 0h0m-233.29 3.93h0m4.53 0h0m4.53 0h0m4.53 0h0m4.53 0h0m4.53 0h0m4.53 0h0m4.53 0h0m4.53 0h0m4.53 0h0m4.53 0h0m4.53 0h0m4.53 0h0m4.53 0h0m4.53 0h0m4.53 0h0m4.53 0h0m4.53 0h0m4.53 0h0m4.53 0h0m4.53 0h0m4.53 0h0m4.53 0h0m4.53 0h0m4.53 0h0m4.53 0h0m4.53 0h0m4.53 0h0m4.53 0h0m4.53 0h0m4.53 0h0m4.53 0h0m4.53 0h0m4.53 0h0m4.53 0h0m4.53 0h0m4.53 0h0m4.53 0h0m4.53 0h0m4.53 0h0m4.53 0h0m4.53 0h0m4.53 0h0m4.53 0h0m4.53 0h0m4.53 0h0m4.53 0h0m4.53 0h0m4.53 0h0m4.53 0h0m4.53 0h0m4.53 0h0m-233.29 3.93h0m4.53 0h0m4.53 0h0m4.53 0h0m4.53 0h0m4.53 0h0m4.53 0h0m4.53 0h0m4.53 0h0m4.53 0h0m4.53 0h0m4.53 0h0m4.53 0h0m4.53 0h0m4.53 0h0m4.53 0h0m4.53 0h0m4.53 0h0m4.53 0h0m4.53 0h0m4.53 0h0m4.53 0h0m4.53 0h0m4.53 0h0m4.53 0h0m4.53 0h0m4.53 0h0m4.53 0h0m4.53 0h0m4.53 0h0m4.53 0h0m4.53 0h0m4.53 0h0m4.53 0h0m4.53 0h0m4.53 0h0m4.53 0h0m4.53 0h0m4.53 0h0m4.53 0h0m4.53 0h0m4.53 0h0m4.53 0h0m4.53 0h0m4.53 0h0m4.53 0h0m4.53 0h0m4.53 0h0m4.53 0h0m4.53 0h0m4.53 0h0m4.53 0h0m4.53 0h0m-233.29 3.93h0m4.53 0h0m4.53 0h0m4.53 0h0m4.53 0h0m4.53 0h0m4.53 0h0m4.53 0h0m4.53 0h0m4.53 0h0m4.53 0h0m4.53 0h0m4.53 0h0m4.53 0h0m4.53 0h0m4.53 0h0m4.53 0h0m4.53 0h0m4.53 0h0m4.53 0h0m4.53 0h0m4.53 0h0m4.53 0h0m4.53 0h0m4.53 0h0m4.53 0h0m4.53 0h0m4.53 0h0m4.53 0h0m4.53 0h0m4.53 0h0m4.53 0h0m4.53 0h0m4.53 0h0m4.53 0h0m4.53 0h0m4.53 0h0m4.53 0h0m4.53 0h0m4.53 0h0m4.53 0h0m4.53 0h0m4.53 0h0m4.53 0h0m4.53 0h0m4.53 0h0m4.53 0h0m4.53 0h0m4.53 0h0m4.53 0h0m4.53 0h0m4.53 0h0m-233.29 3.93h0m4.53 0h0m4.53 0h0m4.53 0h0m4.53 0h0m4.53 0h0m4.53 0h0m4.53 0h0m4.53 0h0m4.53 0h0m4.53 0h0m4.53 0h0m4.53 0h0m4.53 0h0m4.53 0h0m4.53 0h0m4.53 0h0m4.53 0h0m4.53 0h0m4.53 0h0m4.53 0h0m4.53 0h0m4.53 0h0m4.53 0h0m4.53 0h0m4.53 0h0m4.53 0h0m4.53 0h0m4.53 0h0m4.53 0h0m4.53 0h0m4.53 0h0m4.53 0h0m4.53 0h0m4.53 0h0m4.53 0h0m4.53 0h0m4.53 0h0m4.53 0h0m4.53 0h0m4.53 0h0m4.53 0h0m4.53 0h0m4.53 0h0m4.53 0h0m4.53 0h0m4.53 0h0m4.53 0h0m4.53 0h0m4.53 0h0m4.53 0h0m4.53 0h0m4.53 0h0m-233.29 3.93h0m4.53 0h0m4.53 0h0m4.53 0h0m4.53 0h0m4.53 0h0m4.53 0h0m4.53 0h0m4.53 0h0m4.53 0h0m4.53 0h0m4.53 0h0m4.53 0h0m4.53 0h0m4.53 0h0m4.53 0h0m4.53 0h0m4.53 0h0m4.53 0h0m4.53 0h0m4.53 0h0m4.53 0h0m4.53 0h0m4.53 0h0m4.53 0h0m4.53 0h0m4.53 0h0m4.53 0h0m4.53 0h0m4.53 0h0m4.53 0h0m4.53 0h0m4.53 0h0m4.53 0h0m4.53 0h0m4.53 0h0m4.53 0h0m4.53 0h0m4.53 0h0m4.53 0h0m4.53 0h0m4.53 0h0m4.53 0h0m4.53 0h0m4.53 0h0m4.53 0h0m4.53 0h0m4.53 0h0m4.53 0h0m4.53 0h0m4.53 0h0m4.53 0h0m-228.76 3.93h0m4.53 0h0m4.53 0h0m4.53 0h0m4.53 0h0m4.53 0h0m4.53 0h0m4.53 0h0m4.53 0h0m4.53 0h0m4.53 0h0m4.53 0h0m4.53 0h0m4.53 0h0m4.53 0h0m4.53 0h0m4.53 0h0m4.53 0h0m4.53 0h0m4.53 0h0m4.53 0h0m4.53 0h0m4.53 0h0m4.53 0h0m4.53 0h0m4.53 0h0m4.53 0h0m4.53 0h0m4.53 0h0m4.53 0h0m4.53 0h0m4.53 0h0m4.53 0h0m4.53 0h0m4.53 0h0m4.53 0h0m4.53 0h0m4.53 0h0m4.53 0h0m4.53 0h0m4.53 0h0m4.53 0h0m4.53 0h0m4.53 0h0m4.53 0h0m4.53 0h0m4.53 0h0m4.53 0h0m4.53 0h0m4.53 0h0m4.53 0h0m-224.24 3.93h0m4.53 0h0m4.53 0h0m4.53 0h0m4.53 0h0m4.53 0h0m4.53 0h0m4.53 0h0m4.53 0h0m4.53 0h0m4.53 0h0m4.53 0h0m4.53 0h0m4.53 0h0m4.53 0h0m4.53 0h0m4.53 0h0m4.53 0h0m4.53 0h0m4.53 0h0m4.53 0h0m4.53 0h0m4.53 0h0m4.53 0h0m4.53 0h0m4.53 0h0m4.53 0h0m4.53 0h0m4.53 0h0m4.53 0h0m4.53 0h0m4.53 0h0m4.53 0h0m4.53 0h0m4.53 0h0m4.53 0h0m4.53 0h0m4.53 0h0m4.53 0h0m4.53 0h0m4.53 0h0m4.53 0h0m4.53 0h0m4.53 0h0m4.53 0h0m4.53 0h0m4.53 0h0m4.53 0h0m4.53 0h0m4.53 0h0m-219.71 3.93h0m4.53 0h0m4.53 0h0m4.53 0h0m4.53 0h0m4.53 0h0m4.53 0h0m4.53 0h0m4.53 0h0m4.53 0h0m4.53 0h0m4.53 0h0m4.53 0h0m4.53 0h0m4.53 0h0m4.53 0h0m4.53 0h0m4.53 0h0m4.53 0h0m4.53 0h0m4.53 0h0m4.53 0h0m4.53 0h0m4.53 0h0m4.53 0h0m4.53 0h0m4.53 0h0m4.53 0h0m4.53 0h0m4.53 0h0m4.53 0h0m4.53 0h0m4.53 0h0m4.53 0h0m4.53 0h0m4.53 0h0m4.53 0h0m4.53 0h0m4.53 0h0m4.53 0h0m4.53 0h0m4.53 0h0m4.53 0h0m4.53 0h0m4.53 0h0m4.53 0h0m4.53 0h0m4.53 0h0m4.53 0h0m-219.71 3.93h0m4.53 0h0m4.53 0h0m4.53 0h0m4.53 0h0m4.53 0h0m4.53 0h0m4.53 0h0m4.53 0h0m4.53 0h0m4.53 0h0m4.53 0h0m4.53 0h0m4.53 0h0m4.53 0h0m4.53 0h0m4.53 0h0m4.53 0h0m4.53 0h0m4.53 0h0m4.53 0h0m4.53 0h0m4.53 0h0m4.53 0h0m4.53 0h0m4.53 0h0m4.53 0h0m4.53 0h0m4.53 0h0m4.53 0h0m4.53 0h0m4.53 0h0m4.53 0h0m4.53 0h0m4.53 0h0m4.53 0h0m4.53 0h0m4.53 0h0m4.53 0h0m4.53 0h0m4.53 0h0m4.53 0h0m4.53 0h0m4.53 0h0m4.53 0h0m4.53 0h0m4.53 0h0m4.53 0h0m4.53 0h0m4.53 0h0m-219.71 3.93h0m4.53 0h0m4.53 0h0m4.53 0h0m4.53 0h0m4.53 0h0m4.53 0h0m4.53 0h0m4.53 0h0m4.53 0h0m4.53 0h0m4.53 0h0m4.53 0h0m4.53 0h0m4.53 0h0m4.53 0h0m4.53 0h0m4.53 0h0m4.53 0h0m4.53 0h0m4.53 0h0m4.53 0h0m4.53 0h0m4.53 0h0m4.53 0h0m4.53 0h0m4.53 0h0m4.53 0h0m4.53 0h0m4.53 0h0m4.53 0h0m4.53 0h0m4.53 0h0m4.53 0h0m4.53 0h0m4.53 0h0m4.53 0h0m4.53 0h0m4.53 0h0m4.53 0h0m4.53 0h0m4.53 0h0m4.53 0h0m4.53 0h0m4.53 0h0m4.53 0h0m4.53 0h0m4.53 0h0m4.53 0h0m-215.18 3.93h0m4.53 0h0m4.53 0h0m4.53 0h0m4.53 0h0m4.53 0h0m4.53 0h0m4.53 0h0m4.53 0h0m4.53 0h0m4.53 0h0m4.53 0h0m4.53 0h0m4.53 0h0m4.53 0h0m4.53 0h0m4.53 0h0m4.53 0h0m4.53 0h0m4.53 0h0m4.53 0h0m4.53 0h0m4.53 0h0m4.53 0h0m4.53 0h0m4.53 0h0m4.53 0h0m4.53 0h0m4.53 0h0m4.53 0h0m4.53 0h0m4.53 0h0m4.53 0h0m4.53 0h0m4.53 0h0m4.53 0h0m4.53 0h0m4.53 0h0m4.53 0h0m4.53 0h0m4.53 0h0m4.53 0h0m4.53 0h0m4.53 0h0m4.53 0h0m4.53 0h0m4.53 0h0m4.53 0h0m-210.65 3.93h0m4.53 0h0m4.53 0h0m4.53 0h0m4.53 0h0m4.53 0h0m4.53 0h0m4.53 0h0m4.53 0h0m4.53 0h0m4.53 0h0m4.53 0h0m4.53 0h0m4.53 0h0m4.53 0h0m4.53 0h0m4.53 0h0m4.53 0h0m4.53 0h0m4.53 0h0m4.53 0h0m4.53 0h0m4.53 0h0m4.53 0h0m4.53 0h0m4.53 0h0m4.53 0h0m4.53 0h0m4.53 0h0m4.53 0h0m4.53 0h0m4.53 0h0m4.53 0h0m4.53 0h0m4.53 0h0m4.53 0h0m4.53 0h0m4.53 0h0m4.53 0h0m4.53 0h0m4.53 0h0m4.53 0h0m4.53 0h0m4.53 0h0m4.53 0h0m4.53 0h0m4.53 0h0m-206.12 3.93h0m4.53 0h0m4.53 0h0m4.53 0h0m4.53 0h0m4.53 0h0m4.53 0h0m4.53 0h0m4.53 0h0m4.53 0h0m4.53 0h0m4.53 0h0m4.53 0h0m4.53 0h0m4.53 0h0m4.53 0h0m4.53 0h0m4.53 0h0m4.53 0h0m4.53 0h0m4.53 0h0m4.53 0h0m4.53 0h0m4.53 0h0m4.53 0h0m4.53 0h0m4.53 0h0m4.53 0h0m4.53 0h0m4.53 0h0m4.53 0h0m4.53 0h0m4.53 0h0m4.53 0h0m4.53 0h0m4.53 0h0m4.53 0h0m4.53 0h0m4.53 0h0m4.53 0h0m4.53 0h0m4.53 0h0m4.53 0h0m4.53 0h0m4.53 0h0m4.53 0h0m-201.58 3.93h0m4.53 0h0m4.53 0h0m4.53 0h0m4.53 0h0m4.53 0h0m4.53 0h0m4.53 0h0m4.53 0h0m4.53 0h0m4.53 0h0m4.53 0h0m4.53 0h0m4.53 0h0m4.53 0h0m4.53 0h0m4.53 0h0m4.53 0h0m4.53 0h0m4.53 0h0m4.53 0h0m4.53 0h0m4.53 0h0m4.53 0h0m4.53 0h0m4.53 0h0m4.53 0h0m4.53 0h0m4.53 0h0m4.53 0h0m4.53 0h0m4.53 0h0m4.53 0h0m4.53 0h0m4.53 0h0m4.53 0h0m4.53 0h0m4.53 0h0m4.53 0h0m4.53 0h0m4.53 0h0m4.53 0h0m4.53 0h0m4.53 0h0m4.53 0h0m-197.05 3.93h0m4.53 0h0m4.53 0h0m4.53 0h0m4.53 0h0m4.53 0h0m4.53 0h0m4.53 0h0m4.53 0h0m4.53 0h0m4.53 0h0m4.53 0h0m4.53 0h0m4.53 0h0m4.53 0h0m4.53 0h0m4.53 0h0m4.53 0h0m4.53 0h0m4.53 0h0m4.53 0h0m4.53 0h0m4.53 0h0m4.53 0h0m4.53 0h0m4.53 0h0m4.53 0h0m4.53 0h0m4.53 0h0m4.53 0h0m4.53 0h0m4.53 0h0m4.53 0h0m4.53 0h0m4.53 0h0m4.53 0h0m4.53 0h0m4.53 0h0m4.53 0h0m4.53 0h0m4.53 0h0m4.53 0h0m4.53 0h0m4.53 0h0m-192.52 3.93h0m4.53 0h0m4.53 0h0m4.53 0h0m4.53 0h0m4.53 0h0m4.53 0h0m4.53 0h0m4.53 0h0m4.53 0h0m4.53 0h0m4.53 0h0m4.53 0h0m4.53 0h0m4.53 0h0m4.53 0h0m4.53 0h0m4.53 0h0m4.53 0h0m4.53 0h0m4.53 0h0m4.53 0h0m4.53 0h0m4.53 0h0m4.53 0h0m4.53 0h0m4.53 0h0m4.53 0h0m4.53 0h0m4.53 0h0m4.53 0h0m4.53 0h0m4.53 0h0m4.53 0h0m4.53 0h0m4.53 0h0m4.53 0h0m4.53 0h0m4.53 0h0m4.53 0h0m4.53 0h0m4.53 0h0m4.53 0h0m-183.47 3.93h0m4.53 0h0m4.53 0h0m4.53 0h0m4.53 0h0m4.53 0h0m4.53 0h0m4.53 0h0m4.53 0h0m4.53 0h0m4.53 0h0m4.53 0h0m4.53 0h0m4.53 0h0m4.53 0h0m4.53 0h0m4.53 0h0m4.53 0h0m4.53 0h0m4.53 0h0m4.53 0h0m4.53 0h0m4.53 0h0m4.53 0h0m4.53 0h0m4.53 0h0m4.53 0h0m4.53 0h0m4.53 0h0m4.53 0h0m4.53 0h0m4.53 0h0m4.53 0h0m4.53 0h0m4.53 0h0m4.53 0h0m4.53 0h0m4.53 0h0m4.53 0h0m4.53 0h0m-174.41 3.93h0m4.53 0h0m4.53 0h0m4.53 0h0m4.53 0h0m4.53 0h0m4.53 0h0m4.53 0h0m4.53 0h0m4.53 0h0m4.53 0h0m4.53 0h0m4.53 0h0m4.53 0h0m4.53 0h0m4.53 0h0m4.53 0h0m4.53 0h0m4.53 0h0m4.53 0h0m4.53 0h0m4.53 0h0m4.53 0h0m4.53 0h0m4.53 0h0m4.53 0h0m4.53 0h0m4.53 0h0m4.53 0h0m4.53 0h0m4.53 0h0m4.53 0h0m4.53 0h0m4.53 0h0m4.53 0h0m4.53 0h0m4.53 0h0m4.53 0h0m4.53 0h0m-169.88 3.93h0m4.53 0h0m4.53 0h0m4.53 0h0m4.53 0h0m4.53 0h0m4.53 0h0m4.53 0h0m4.53 0h0m4.53 0h0m4.53 0h0m4.53 0h0m4.53 0h0m4.53 0h0m4.53 0h0m4.53 0h0m4.53 0h0m4.53 0h0m4.53 0h0m4.53 0h0m4.53 0h0m4.53 0h0m4.53 0h0m4.53 0h0m4.53 0h0m4.53 0h0m4.53 0h0m4.53 0h0m4.53 0h0m4.53 0h0m4.53 0h0m4.53 0h0m4.53 0h0m4.53 0h0m4.53 0h0m4.53 0h0m4.53 0h0m4.53 0h0m-160.82 3.93h0m4.53 0h0m4.53 0h0m4.53 0h0m4.53 0h0m4.53 0h0m4.53 0h0m4.53 0h0m4.53 0h0m4.53 0h0m4.53 0h0m4.53 0h0m4.53 0h0m4.53 0h0m4.53 0h0m4.53 0h0m4.53 0h0m4.53 0h0m4.53 0h0m4.53 0h0m4.53 0h0m4.53 0h0m4.53 0h0m4.53 0h0m4.53 0h0m4.53 0h0m4.53 0h0m4.53 0h0m4.53 0h0m4.53 0h0m4.53 0h0m4.53 0h0m4.53 0h0m4.53 0h0m4.53 0h0m-151.75 3.93h0m4.53 0h0m4.53 0h0m4.53 0h0m4.53 0h0m4.53 0h0m4.53 0h0m4.53 0h0m4.53 0h0m4.53 0h0m4.53 0h0m4.53 0h0m4.53 0h0m4.53 0h0m4.53 0h0m4.53 0h0m4.53 0h0m4.53 0h0m4.53 0h0m4.53 0h0m4.53 0h0m4.53 0h0m4.53 0h0m4.53 0h0m4.53 0h0m4.53 0h0m4.53 0h0m4.53 0h0m4.53 0h0m4.53 0h0m4.53 0h0m4.53 0h0m4.53 0h0m4.53 0h0m-142.7 3.93h0m4.53 0h0m4.53 0h0m4.53 0h0m4.53 0h0m4.53 0h0m4.53 0h0m4.53 0h0m4.53 0h0m4.53 0h0m4.53 0h0m4.53 0h0m4.53 0h0m4.53 0h0m4.53 0h0m4.53 0h0m4.53 0h0m4.53 0h0m4.53 0h0m4.53 0h0m4.53 0h0m4.53 0h0m4.53 0h0m4.53 0h0m4.53 0h0m4.53 0h0m4.53 0h0m4.53 0h0m4.53 0h0m4.53 0h0m4.53 0h0m-129.11 3.93h0m4.53 0h0m4.53 0h0m4.53 0h0m4.53 0h0m4.53 0h0m4.53 0h0m4.53 0h0m4.53 0h0m4.53 0h0m4.53 0h0m4.53 0h0m4.53 0h0m4.53 0h0m4.53 0h0m4.53 0h0m4.53 0h0m4.53 0h0m4.53 0h0m4.53 0h0m4.53 0h0m4.53 0h0m4.53 0h0m4.53 0h0m4.53 0h0m4.53 0h0m4.53 0h0m4.53 0h0m-115.51 3.93h0m4.53 0h0m4.53 0h0m4.53 0h0m4.53 0h0m4.53 0h0m4.53 0h0m4.53 0h0m4.53 0h0m4.53 0h0m4.53 0h0m4.53 0h0m4.53 0h0m4.53 0h0m4.53 0h0m4.53 0h0m4.53 0h0m4.53 0h0m4.53 0h0m4.53 0h0m4.53 0h0m4.53 0h0m4.53 0h0m4.53 0h0m4.53 0h0m-101.93 3.93h0m4.53 0h0m4.53 0h0m4.53 0h0m4.53 0h0m4.53 0h0m4.53 0h0m4.53 0h0m4.53 0h0m4.53 0h0m4.53 0h0m4.53 0h0m4.53 0h0m4.53 0h0m4.53 0h0m4.53 0h0m4.53 0h0m4.53 0h0m4.53 0h0m4.53 0h0m4.53 0h0m4.53 0h0m-88.34 3.93h0m4.53 0h0m4.53 0h0m4.53 0h0m4.53 0h0m4.53 0h0m4.53 0h0m4.53 0h0m4.53 0h0m4.53 0h0m4.53 0h0m4.53 0h0m4.53 0h0m4.53 0h0m4.53 0h0m4.53 0h0m4.53 0h0m4.53 0h0m4.53 0h0m-65.68 3.93h0m4.53 0h0m4.53 0h0m4.53 0h0m4.53 0h0m4.53 0h0m4.53 0h0m4.53 0h0m4.53 0h0m4.53 0h0m4.53 0h0m4.53 0h0M910.95 424.55h0m-20.38 3.93h0m4.53 0h0m4.53 0h0m4.53 0h0m4.53 0h0m4.53 0h0m4.53 0h0m4.53 0h0m4.53 0h0m4.53 0h0m-47.56 3.93h0m4.53 0h0m4.53 0h0m4.53 0h0m4.53 0h0m4.53 0h0m4.53 0h0m4.53 0h0m4.53 0h0m4.53 0h0m4.53 0h0m4.53 0h0m4.53 0h0m-61.15 3.93h0m4.53 0h0m4.53 0h0m4.53 0h0m4.53 0h0m4.53 0h0m4.53 0h0m4.53 0h0m4.53 0h0m4.53 0h0m4.53 0h0m4.53 0h0m4.53 0h0m4.53 0h0m4.53 0h0m4.53 0h0m-74.75 3.93h0m4.53 0h0m4.53 0h0m4.53 0h0m4.53 0h0m4.53 0h0m4.53 0h0m4.53 0h0m4.53 0h0m4.53 0h0m4.53 0h0m4.53 0h0m4.53 0h0m4.53 0h0m4.53 0h0m4.53 0h0m4.53 0h0m4.53 0h0m4.53 0h0m-83.8 3.93h0m4.53 0h0m4.53 0h0m4.53 0h0m4.53 0h0m4.53 0h0m4.53 0h0m4.53 0h0m4.53 0h0m4.53 0h0m4.53 0h0m4.53 0h0m4.53 0h0m4.53 0h0m4.53 0h0m4.53 0h0m4.53 0h0m4.53 0h0m4.53 0h0m4.53 0h0m-92.87 3.93h0m4.53 0h0m4.53 0h0m4.53 0h0m4.53 0h0m4.53 0h0m4.53 0h0m4.53 0h0m4.53 0h0m4.53 0h0m4.53 0h0m4.53 0h0m4.53 0h0m4.53 0h0m4.53 0h0m4.53 0h0m4.53 0h0m4.53 0h0m4.53 0h0m4.53 0h0m4.53 0h0m4.53 0h0m4.53 0h0m-101.93 3.93h0m4.53 0h0m4.53 0h0m4.53 0h0m4.53 0h0m4.53 0h0m4.53 0h0m4.53 0h0m4.53 0h0m4.53 0h0m4.53 0h0m4.53 0h0m4.53 0h0m4.53 0h0m4.53 0h0m4.53 0h0m4.53 0h0m4.53 0h0m4.53 0h0m4.53 0h0m4.53 0h0m4.53 0h0m4.53 0h0m4.53 0h0m-106.46 3.93h0m4.53 0h0m4.53 0h0m4.53 0h0m4.53 0h0m4.53 0h0m4.53 0h0m4.53 0h0m4.53 0h0m4.53 0h0m4.53 0h0m4.53 0h0m4.53 0h0m4.53 0h0m4.53 0h0m4.53 0h0m4.53 0h0m4.53 0h0m4.53 0h0m4.53 0h0m4.53 0h0m4.53 0h0m4.53 0h0m4.53 0h0m4.53 0h0m-110.99 3.93h0m4.53 0h0m4.53 0h0m4.53 0h0m4.53 0h0m4.53 0h0m4.53 0h0m4.53 0h0m4.53 0h0m4.53 0h0m4.53 0h0m4.53 0h0m4.53 0h0m4.53 0h0m4.53 0h0m4.53 0h0m4.53 0h0m4.53 0h0m4.53 0h0m4.53 0h0m4.53 0h0m4.53 0h0m4.53 0h0m4.53 0h0m4.53 0h0m4.53 0h0m-115.51 3.93h0m4.53 0h0m4.53 0h0m4.53 0h0m4.53 0h0m4.53 0h0m4.53 0h0m4.53 0h0m4.53 0h0m4.53 0h0m4.53 0h0m4.53 0h0m4.53 0h0m4.53 0h0m4.53 0h0m4.53 0h0m4.53 0h0m4.53 0h0m4.53 0h0m4.53 0h0m4.53 0h0m4.53 0h0m4.53 0h0m4.53 0h0m4.53 0h0m4.53 0h0m4.53 0h0m-120.04 3.93h0m4.53 0h0m4.53 0h0m4.53 0h0m4.53 0h0m4.53 0h0m4.53 0h0m4.53 0h0m4.53 0h0m4.53 0h0m4.53 0h0m4.53 0h0m4.53 0h0m4.53 0h0m4.53 0h0m4.53 0h0m4.53 0h0m4.53 0h0m4.53 0h0m4.53 0h0m4.53 0h0m4.53 0h0m4.53 0h0m4.53 0h0m4.53 0h0m4.53 0h0m4.53 0h0m4.53 0h0m-120.04 3.93h0m4.53 0h0m4.53 0h0m4.53 0h0m4.53 0h0m4.53 0h0m4.53 0h0m4.53 0h0m4.53 0h0m4.53 0h0m4.53 0h0m4.53 0h0m4.53 0h0m4.53 0h0m4.53 0h0m4.53 0h0m4.53 0h0m4.53 0h0m4.53 0h0m4.53 0h0m4.53 0h0m4.53 0h0m4.53 0h0m4.53 0h0m4.53 0h0m4.53 0h0m4.53 0h0m-120.04 3.93h0m4.53 0h0m4.53 0h0m4.53 0h0m4.53 0h0m4.53 0h0m4.53 0h0m4.53 0h0m4.53 0h0m4.53 0h0m4.53 0h0m4.53 0h0m4.53 0h0m4.53 0h0m4.53 0h0m4.53 0h0m4.53 0h0m4.53 0h0m4.53 0h0m4.53 0h0m4.53 0h0m4.53 0h0m4.53 0h0m4.53 0h0m4.53 0h0m4.53 0h0m4.53 0h0m4.53 0h0m-124.57 3.93h0m4.53 0h0m4.53 0h0m4.53 0h0m4.53 0h0m4.53 0h0m4.53 0h0m4.53 0h0m4.53 0h0m4.53 0h0m4.53 0h0m4.53 0h0m4.53 0h0m4.53 0h0m4.53 0h0m4.53 0h0m4.53 0h0m4.53 0h0m4.53 0h0m4.53 0h0m4.53 0h0m4.53 0h0m4.53 0h0m4.53 0h0m4.53 0h0m4.53 0h0m4.53 0h0m4.53 0h0m4.53 0h0m-124.57 3.93h0m4.53 0h0m4.53 0h0m4.53 0h0m4.53 0h0m4.53 0h0m4.53 0h0m4.53 0h0m4.53 0h0m4.53 0h0m4.53 0h0m4.53 0h0m4.53 0h0m4.53 0h0m4.53 0h0m4.53 0h0m4.53 0h0m4.53 0h0m4.53 0h0m4.53 0h0m4.53 0h0m4.53 0h0m4.53 0h0m4.53 0h0m4.53 0h0m4.53 0h0m4.53 0h0m4.53 0h0m-124.57 3.93h0m4.53 0h0m4.53 0h0m4.53 0h0m4.53 0h0m4.53 0h0m4.53 0h0m4.53 0h0m4.53 0h0m4.53 0h0m4.53 0h0m4.53 0h0m4.53 0h0m4.53 0h0m4.53 0h0m4.53 0h0m4.53 0h0m4.53 0h0m4.53 0h0m4.53 0h0m4.53 0h0m4.53 0h0m4.53 0h0m4.53 0h0m4.53 0h0m4.53 0h0m4.53 0h0m4.53 0h0m4.53 0h0m-124.57 3.93h0m4.53 0h0m4.53 0h0m4.53 0h0m4.53 0h0m4.53 0h0m4.53 0h0m4.53 0h0m4.53 0h0m4.53 0h0m4.53 0h0m4.53 0h0m4.53 0h0m4.53 0h0m4.53 0h0m4.53 0h0m4.53 0h0m4.53 0h0m4.53 0h0m4.53 0h0m4.53 0h0m4.53 0h0m4.53 0h0m4.53 0h0m4.53 0h0m4.53 0h0m4.53 0h0m4.53 0h0m-124.57 3.93h0m4.53 0h0m4.53 0h0m4.53 0h0m4.53 0h0m4.53 0h0m4.53 0h0m4.53 0h0m4.53 0h0m4.53 0h0m4.53 0h0m4.53 0h0m4.53 0h0m4.53 0h0m4.53 0h0m4.53 0h0m4.53 0h0m4.53 0h0m4.53 0h0m4.53 0h0m4.53 0h0m4.53 0h0m4.53 0h0m4.53 0h0m4.53 0h0m4.53 0h0m4.53 0h0m4.53 0h0m4.53 0h0m-124.57 3.93h0m4.53 0h0m4.53 0h0m4.53 0h0m4.53 0h0m4.53 0h0m4.53 0h0m4.53 0h0m4.53 0h0m4.53 0h0m4.53 0h0m4.53 0h0m4.53 0h0m4.53 0h0m4.53 0h0m4.53 0h0m4.53 0h0m4.53 0h0m4.53 0h0m4.53 0h0m4.53 0h0m4.53 0h0m4.53 0h0m4.53 0h0m4.53 0h0m4.53 0h0m4.53 0h0m4.53 0h0m-120.04 3.93h0m4.53 0h0m4.53 0h0m4.53 0h0m4.53 0h0m4.53 0h0m4.53 0h0m4.53 0h0m4.53 0h0m4.53 0h0m4.53 0h0m4.53 0h0m4.53 0h0m4.53 0h0m4.53 0h0m4.53 0h0m4.53 0h0m4.53 0h0m4.53 0h0m4.53 0h0m4.53 0h0m4.53 0h0m4.53 0h0m4.53 0h0m4.53 0h0m4.53 0h0m4.53 0h0m4.53 0h0m-124.57 3.93h0m4.53 0h0m4.53 0h0m4.53 0h0m4.53 0h0m4.53 0h0m4.53 0h0m4.53 0h0m4.53 0h0m4.53 0h0m4.53 0h0m4.53 0h0m4.53 0h0m4.53 0h0m4.53 0h0m4.53 0h0m4.53 0h0m4.53 0h0m4.53 0h0m4.53 0h0m4.53 0h0m4.53 0h0m4.53 0h0m4.53 0h0m4.53 0h0m4.53 0h0m4.53 0h0m4.53 0h0m-120.04 3.93h0m4.53 0h0m4.53 0h0m4.53 0h0m4.53 0h0m4.53 0h0m4.53 0h0m4.53 0h0m4.53 0h0m4.53 0h0m4.53 0h0m4.53 0h0m4.53 0h0m4.53 0h0m4.53 0h0m4.53 0h0m4.53 0h0m4.53 0h0m4.53 0h0m4.53 0h0m4.53 0h0m4.53 0h0m4.53 0h0m4.53 0h0m4.53 0h0m4.53 0h0m4.53 0h0m-115.51 3.93h0m4.53 0h0m4.53 0h0m4.53 0h0m4.53 0h0m4.53 0h0m4.53 0h0m4.53 0h0m4.53 0h0m4.53 0h0m4.53 0h0m4.53 0h0m4.53 0h0m4.53 0h0m4.53 0h0m4.53 0h0m4.53 0h0m4.53 0h0m4.53 0h0m4.53 0h0m4.53 0h0m4.53 0h0m4.53 0h0m4.53 0h0m4.53 0h0m4.53 0h0m-110.99 3.93h0m4.53 0h0m4.53 0h0m4.53 0h0m4.53 0h0m4.53 0h0m4.53 0h0m4.53 0h0m4.53 0h0m4.53 0h0m4.53 0h0m4.53 0h0m4.53 0h0m4.53 0h0m4.53 0h0m4.53 0h0m4.53 0h0m4.53 0h0m4.53 0h0m4.53 0h0m4.53 0h0m4.53 0h0m4.53 0h0m4.53 0h0m4.53 0h0m-106.46 3.93h0m4.53 0h0m4.53 0h0m4.53 0h0m4.53 0h0m4.53 0h0m4.53 0h0m4.53 0h0m4.53 0h0m4.53 0h0m4.53 0h0m4.53 0h0m4.53 0h0m4.53 0h0m4.53 0h0m4.53 0h0m4.53 0h0m4.53 0h0m4.53 0h0m4.53 0h0m4.53 0h0m4.53 0h0m4.53 0h0m4.53 0h0m-101.93 3.93h0m4.53 0h0m4.53 0h0m4.53 0h0m4.53 0h0m4.53 0h0m4.53 0h0m4.53 0h0m4.53 0h0m4.53 0h0m4.53 0h0m4.53 0h0m4.53 0h0m4.53 0h0m4.53 0h0m4.53 0h0m4.53 0h0m4.53 0h0m4.53 0h0m4.53 0h0m4.53 0h0m4.53 0h0m4.53 0h0m-97.4 3.93h0m4.53 0h0m4.53 0h0m4.53 0h0m4.53 0h0m4.53 0h0m4.53 0h0m4.53 0h0m4.53 0h0m4.53 0h0m4.53 0h0m4.53 0h0m4.53 0h0m4.53 0h0m4.53 0h0m4.53 0h0m4.53 0h0m4.53 0h0m4.53 0h0m4.53 0h0m4.53 0h0m4.53 0h0m-92.87 3.93h0m4.53 0h0m4.53 0h0m4.53 0h0m4.53 0h0m4.53 0h0m4.53 0h0m4.53 0h0m4.53 0h0m4.53 0h0m4.53 0h0m4.53 0h0m4.53 0h0m4.53 0h0m4.53 0h0m4.53 0h0m4.53 0h0m4.53 0h0m4.53 0h0m4.53 0h0m4.53 0h0m-83.8 3.93h0m4.53 0h0m4.53 0h0m4.53 0h0m4.53 0h0m4.53 0h0m4.53 0h0m4.53 0h0m4.53 0h0m4.53 0h0m4.53 0h0m4.53 0h0m4.53 0h0m4.53 0h0m4.53 0h0m4.53 0h0m4.53 0h0m4.53 0h0m-74.75 3.93h0m4.53 0h0m4.53 0h0m4.53 0h0m4.53 0h0m4.53 0h0m4.53 0h0m4.53 0h0m4.53 0h0m4.53 0h0m4.53 0h0m4.53 0h0m4.53 0h0m4.53 0h0m4.53 0h0m4.53 0h0m4.53 0h0m-65.69 3.93h0m4.53 0h0m4.53 0h0m4.53 0h0m4.53 0h0m4.53 0h0m4.53 0h0m4.53 0h0m4.53 0h0m4.53 0h0m4.53 0h0m4.53 0h0m4.53 0h0m4.53 0h0m-47.57 3.93h0m4.53 0h0m4.53 0h0m4.53 0h0m4.53 0h0m4.53 0h0m4.53 0h0m4.53 0h0m4.53 0h0m-20.38 3.93h0m4.53 0h0M846.74 552.77h0m4.53 0h0m4.53 0h0m4.53 0h0m4.53 0h0m-24.91 3.93h0m4.53 0h0m4.53 0h0m4.53 0h0m4.53 0h0m4.53 0h0m4.53 0h0m4.53 0h0m-38.5 3.93h0m4.53 0h0m4.53 0h0m4.53 0h0m4.53 0h0m4.53 0h0m4.53 0h0m4.53 0h0m4.53 0h0m4.53 0h0m4.53 0h0m-52.1 3.93h0m4.53 0h0m4.53 0h0m4.53 0h0m4.53 0h0m4.53 0h0m4.53 0h0m4.53 0h0m4.53 0h0m4.53 0h0m4.53 0h0m4.53 0h0m4.53 0h0m4.53 0h0m-61.16 3.93h0m4.53 0h0m4.53 0h0m4.53 0h0m4.53 0h0m4.53 0h0m4.53 0h0m4.53 0h0m4.53 0h0m4.53 0h0m4.53 0h0m4.53 0h0m4.53 0h0m4.53 0h0m4.53 0h0m-65.69 3.93h0m4.53 0h0m4.53 0h0m4.53 0h0m4.53 0h0m4.53 0h0m4.53 0h0m4.53 0h0m4.53 0h0m4.53 0h0m4.53 0h0m4.53 0h0m4.53 0h0m4.53 0h0m4.53 0h0m4.53 0h0m-70.22 3.93h0m4.53 0h0m4.53 0h0m4.53 0h0m4.53 0h0m4.53 0h0m4.53 0h0m4.53 0h0m4.53 0h0m4.53 0h0m4.53 0h0m4.53 0h0m4.53 0h0m4.53 0h0m4.53 0h0m4.53 0h0m4.53 0h0m-74.75 3.93h0m4.53 0h0m4.53 0h0m4.53 0h0m4.53 0h0m4.53 0h0m4.53 0h0m4.53 0h0m4.53 0h0m4.53 0h0m4.53 0h0m4.53 0h0m4.53 0h0m4.53 0h0m4.53 0h0m4.53 0h0m4.53 0h0m4.53 0h0m-79.27 3.93h0m4.53 0h0m4.53 0h0m4.53 0h0m4.53 0h0m4.53 0h0m4.53 0h0m4.53 0h0m4.53 0h0m4.53 0h0m4.53 0h0m4.53 0h0m4.53 0h0m4.53 0h0m4.53 0h0m4.53 0h0m4.53 0h0m4.53 0h0m4.53 0h0m-83.8 3.93h0m4.53 0h0m4.53 0h0m4.53 0h0m4.53 0h0m4.53 0h0m4.53 0h0m4.53 0h0m4.53 0h0m4.53 0h0m4.53 0h0m4.53 0h0m4.53 0h0m4.53 0h0m4.53 0h0m4.53 0h0m4.53 0h0m4.53 0h0m4.53 0h0m4.53 0h0m-83.8 3.93h0m4.53 0h0m4.53 0h0m4.53 0h0m4.53 0h0m4.53 0h0m4.53 0h0m4.53 0h0m4.53 0h0m4.53 0h0m4.53 0h0m4.53 0h0m4.53 0h0m4.53 0h0m4.53 0h0m4.53 0h0m4.53 0h0m4.53 0h0m4.53 0h0m-83.8 3.93h0m4.53 0h0m4.53 0h0m4.53 0h0m4.53 0h0m4.53 0h0m4.53 0h0m4.53 0h0m4.53 0h0m4.53 0h0m4.53 0h0m4.53 0h0m4.53 0h0m4.53 0h0m4.53 0h0m4.53 0h0m4.53 0h0m4.53 0h0m4.53 0h0m4.53 0h0m-83.8 3.93h0m4.53 0h0m4.53 0h0m4.53 0h0m4.53 0h0m4.53 0h0m4.53 0h0m4.53 0h0m4.53 0h0m4.53 0h0m4.53 0h0m4.53 0h0m4.53 0h0m4.53 0h0m4.53 0h0m4.53 0h0m4.53 0h0m4.53 0h0m4.53 0h0m-83.8 3.93h0m4.53 0h0m4.53 0h0m4.53 0h0m4.53 0h0m4.53 0h0m4.53 0h0m4.53 0h0m4.53 0h0m4.53 0h0m4.53 0h0m4.53 0h0m4.53 0h0m4.53 0h0m4.53 0h0m4.53 0h0m4.53 0h0m4.53 0h0m4.53 0h0m4.53 0h0m-83.8 3.93h0m4.53 0h0m4.53 0h0m4.53 0h0m4.53 0h0m4.53 0h0m4.53 0h0m4.53 0h0m4.53 0h0m4.53 0h0m4.53 0h0m4.53 0h0m4.53 0h0m4.53 0h0m4.53 0h0m4.53 0h0m4.53 0h0m4.53 0h0m4.53 0h0m-79.27 3.93h0m4.53 0h0m4.53 0h0m4.53 0h0m4.53 0h0m4.53 0h0m4.53 0h0m4.53 0h0m4.53 0h0m4.53 0h0m4.53 0h0m4.53 0h0m4.53 0h0m4.53 0h0m4.53 0h0m4.53 0h0m4.53 0h0m4.53 0h0m-74.75 3.93h0m4.53 0h0m4.53 0h0m4.53 0h0m4.53 0h0m4.53 0h0m4.53 0h0m4.53 0h0m4.53 0h0m4.53 0h0m4.53 0h0m4.53 0h0m4.53 0h0m4.53 0h0m4.53 0h0m4.53 0h0m4.53 0h0m-70.22 3.93h0m4.53 0h0m4.53 0h0m4.53 0h0m4.53 0h0m4.53 0h0m4.53 0h0m4.53 0h0m4.53 0h0m4.53 0h0m4.53 0h0m4.53 0h0m4.53 0h0m4.53 0h0m4.53 0h0m4.53 0h0m-65.69 3.93h0m4.53 0h0m4.53 0h0m4.53 0h0m4.53 0h0m4.53 0h0m4.53 0h0m4.53 0h0m4.53 0h0m4.53 0h0m4.53 0h0m4.53 0h0m4.53 0h0m4.53 0h0m4.53 0h0m-61.16 3.93h0m4.53 0h0m4.53 0h0m4.53 0h0m4.53 0h0m4.53 0h0m4.53 0h0m4.53 0h0m4.53 0h0m4.53 0h0m4.53 0h0m4.53 0h0m4.53 0h0m4.53 0h0m-52.1 3.93h0m4.53 0h0m4.53 0h0m4.53 0h0m4.53 0h0m4.53 0h0m4.53 0h0m4.53 0h0m4.53 0h0m4.53 0h0m4.53 0h0m-38.5 3.93h0m4.53 0h0m4.53 0h0m4.53 0h0m4.53 0h0m4.53 0h0m4.53 0h0m4.53 0h0m-24.91 3.93h0m4.53 0h0m4.53 0h0m4.53 0h0m4.53 0h0M689.81 682.07h0m4.53 0h0m4.53 0h0m4.53 0h0m-11.32 3.93h0m4.53 0h0m4.53 0h0m-6.79 3.93h0m4.53 0h0M596.44 382.27h0m4.53 0h0m-6.79 3.93h0m4.53 0h0m4.53 0h0M725.8 676.91h0m-11.33 3.93h0m4.53 0h0m4.53 0h0m4.53 0h0m4.53 0h0m4.53 0h0m-20.38 3.93h0m4.53 0h0m4.53 0h0m4.53 0h0m4.53 0h0m-15.85 3.93h0m4.53 0h0m4.53 0h0m4.53 0h0m-15.85 3.93h0m4.53 0h0m4.53 0h0m4.53 0h0m4.53 0h0m-20.38 3.93h0m4.53 0h0m4.53 0h0m4.53 0h0m4.53 0h0m4.53 0h0m-11.33 3.93h0M605.16 401.87h0m-11.32 3.93h0m4.53 0h0m4.53 0h0m4.53 0h0m4.53 0h0m-15.85 3.93h0m4.53 0h0m4.53 0h0m4.53 0h0m-11.32 3.93h0m4.53 0h0m4.53 0h0m-6.79 3.93h0m4.53 0h0M647.74 345.18h0m4.53 0h0m-11.32 3.93h0m4.53 0h0m4.53 0h0m4.53 0h0m4.53 0h0m-20.38 3.93h0m4.53 0h0m4.53 0h0m4.53 0h0m4.53 0h0m4.53 0h0m-24.92 3.93h0m4.53 0h0m4.53 0h0m4.53 0h0m4.53 0h0m4.53 0h0m4.53 0h0m-24.92 3.93h0m4.53 0h0m4.53 0h0m4.53 0h0m4.53 0h0m4.53 0h0m-24.92 3.93h0m4.53 0h0m4.53 0h0m4.53 0h0m4.53 0h0m4.53 0h0m4.53 0h0m-24.92 3.93h0m4.53 0h0m4.53 0h0m4.53 0h0m4.53 0h0m4.53 0h0m-15.86 3.93h0m4.53 0h0m4.53 0h0m-6.79 3.93h0m4.53 0h0M654.53 609.68h0m4.53 0h0m-11.32 3.93h0m4.53 0h0m4.53 0h0m4.53 0h0m4.53 0h0m-20.38 3.93h0m4.53 0h0m4.53 0h0m4.53 0h0m4.53 0h0m4.53 0h0m-24.92 3.93h0m4.53 0h0m4.53 0h0m4.53 0h0m4.53 0h0m4.53 0h0m4.53 0h0m-24.92 3.93h0m4.53 0h0m4.53 0h0m4.53 0h0m4.53 0h0m4.53 0h0m-24.92 3.93h0m4.53 0h0m4.53 0h0m4.53 0h0m4.53 0h0m4.53 0h0m4.53 0h0m-24.92 3.93h0m4.53 0h0m4.53 0h0m4.53 0h0m4.53 0h0m4.53 0h0m-20.38 3.93h0m4.53 0h0m4.53 0h0m4.53 0h0m4.53 0h0m-11.32 3.93h0m4.53 0h0M906.53 624.88h0m4.53 0h0m-6.79 3.93h0m4.53 0h0m4.53 0h0m-15.86 3.93h0m4.53 0h0m4.53 0h0m4.53 0h0m4.53 0h0m4.53 0h0m-20.38 3.93h0m4.53 0h0m4.53 0h0m4.53 0h0m4.53 0h0m4.53 0h0m-24.92 3.93h0m4.53 0h0m4.53 0h0m4.53 0h0m4.53 0h0m4.53 0h0m-24.92 3.93h0m4.53 0h0m4.53 0h0m4.53 0h0m4.53 0h0m4.53 0h0m-20.38 3.93h0m4.53 0h0m4.53 0h0m4.53 0h0m4.53 0h0m4.53 0h0m-15.86 3.93h0m4.53 0h0m4.53 0h0m-6.79 3.93h0m4.53 0h0M987.37 490.37h0m4.53 0h0m4.53 0h0m-11.32 3.93h0m4.53 0h0m4.53 0h0m-6.79 3.93h0m4.53 0h0m4.53 0h0M589.1 432.5h0M576.87 528.87h0m4.53 0h0m4.53 0h0m4.53 0h0m-15.85 3.93h0m4.53 0h0m4.53 0h0m4.53 0h0m-11.32 3.93h0m4.53 0h0m4.53 0h0M658.13 323.5h0M934.25 561.36h0m4.53 0h0m4.53 0h0m4.53 0h0m-20.38 3.93h0m4.53 0h0m4.53 0h0m4.53 0h0m4.53 0h0m4.53 0h0m4.53 0h0m-33.98 3.93h0m4.53 0h0m4.53 0h0m4.53 0h0m4.53 0h0m4.53 0h0m4.53 0h0m4.53 0h0m4.53 0h0m4.53 0h0m-43.03 3.93h0m4.53 0h0m4.53 0h0m4.53 0h0m4.53 0h0m4.53 0h0m4.53 0h0m4.53 0h0m4.53 0h0m4.53 0h0m4.53 0h0m-47.56 3.93h0m4.53 0h0m4.53 0h0m4.53 0h0m4.53 0h0m4.53 0h0m4.53 0h0m4.53 0h0m4.53 0h0m4.53 0h0m4.53 0h0m4.53 0h0m-52.09 3.93h0m4.53 0h0m4.53 0h0m4.53 0h0m4.53 0h0m4.53 0h0m4.53 0h0m4.53 0h0m4.53 0h0m4.53 0h0m4.53 0h0m4.53 0h0m4.53 0h0m-56.62 3.93h0m4.53 0h0m4.53 0h0m4.53 0h0m4.53 0h0m4.53 0h0m4.53 0h0m4.53 0h0m4.53 0h0m4.53 0h0m4.53 0h0m4.53 0h0m4.53 0h0m4.53 0h0m-56.62 3.93h0m4.53 0h0m4.53 0h0m4.53 0h0m4.53 0h0m4.53 0h0m4.53 0h0m4.53 0h0m4.53 0h0m4.53 0h0m4.53 0h0m4.53 0h0m4.53 0h0m4.53 0h0m-61.16 3.93h0m4.53 0h0m4.53 0h0m4.53 0h0m4.53 0h0m4.53 0h0m4.53 0h0m4.53 0h0m4.53 0h0m4.53 0h0m4.53 0h0m4.53 0h0m4.53 0h0m4.53 0h0m-61.16 3.93h0m4.53 0h0m4.53 0h0m4.53 0h0m4.53 0h0m4.53 0h0m4.53 0h0m4.53 0h0m4.53 0h0m4.53 0h0m4.53 0h0m4.53 0h0m4.53 0h0m4.53 0h0m-56.62 3.93h0m4.53 0h0m4.53 0h0m4.53 0h0m4.53 0h0m4.53 0h0m4.53 0h0m4.53 0h0m4.53 0h0m4.53 0h0m4.53 0h0m4.53 0h0m4.53 0h0m4.53 0h0m-56.62 3.93h0m4.53 0h0m4.53 0h0m4.53 0h0m4.53 0h0m4.53 0h0m4.53 0h0m4.53 0h0m4.53 0h0m4.53 0h0m4.53 0h0m4.53 0h0m4.53 0h0m-52.09 3.93h0m4.53 0h0m4.53 0h0m4.53 0h0m4.53 0h0m4.53 0h0m4.53 0h0m4.53 0h0m4.53 0h0m4.53 0h0m4.53 0h0m4.53 0h0m-47.56 3.93h0m4.53 0h0m4.53 0h0m4.53 0h0m4.53 0h0m4.53 0h0m4.53 0h0m4.53 0h0m4.53 0h0m4.53 0h0m4.53 0h0m-43.03 3.93h0m4.53 0h0m4.53 0h0m4.53 0h0m4.53 0h0m4.53 0h0m4.53 0h0m4.53 0h0m4.53 0h0m4.53 0h0m-33.98 3.93h0m4.53 0h0m4.53 0h0m4.53 0h0m4.53 0h0m4.53 0h0m4.53 0h0m-20.38 3.93h0m4.53 0h0m4.53 0h0m4.53 0h0M695.81 623.62h0m4.53 0h0m4.53 0h0m4.53 0h0m-15.85 3.93h0m4.53 0h0m4.53 0h0m4.53 0h0m4.53 0h0m-24.91 3.93h0m4.53 0h0m4.53 0h0m4.53 0h0m4.53 0h0m4.53 0h0m4.53 0h0m4.53 0h0m-38.5 3.93h0m4.53 0h0m4.53 0h0m4.53 0h0m4.53 0h0m4.53 0h0m4.53 0h0m4.53 0h0m4.53 0h0m4.53 0h0m4.53 0h0m-43.03 3.93h0m4.53 0h0m4.53 0h0m4.53 0h0m4.53 0h0m4.53 0h0m4.53 0h0m4.53 0h0m4.53 0h0m4.53 0h0m-43.03 3.93h0m4.53 0h0m4.53 0h0m4.53 0h0m4.53 0h0m4.53 0h0m4.53 0h0m4.53 0h0m4.53 0h0m4.53 0h0m4.53 0h0m-43.03 3.93h0m4.53 0h0m4.53 0h0m4.53 0h0m4.53 0h0m4.53 0h0m4.53 0h0m4.53 0h0m4.53 0h0m4.53 0h0m-43.03 3.93h0m4.53 0h0m4.53 0h0m4.53 0h0m4.53 0h0m4.53 0h0m4.53 0h0m4.53 0h0m4.53 0h0m4.53 0h0m4.53 0h0m-43.03 3.93h0m4.53 0h0m4.53 0h0m4.53 0h0m4.53 0h0m4.53 0h0m4.53 0h0m4.53 0h0m4.53 0h0m4.53 0h0m-38.5 3.93h0m4.53 0h0m4.53 0h0m4.53 0h0m4.53 0h0m4.53 0h0m4.53 0h0m4.53 0h0m4.53 0h0m-33.98 3.93h0m4.53 0h0m4.53 0h0m4.53 0h0m4.53 0h0m4.53 0h0m4.53 0h0m4.53 0h0m-24.91 3.93h0m4.53 0h0m4.53 0h0m4.53 0h0m4.53 0h0m-15.85 3.93h0m4.53 0h0m4.53 0h0m4.53 0h0M843.3 694.37h0m-2.26 3.93h0m4.53 0h0m-2.26 3.93h0M625.1 650.8h0m-2.26 3.93h0m4.53 0h0M638.13 649.2h0M665.3 299h0M670 299h0M659.3 304h0M660.7 310h0M689.3 288.7h0M697.6 286.3h0M723 276.3h0M721.3 281.7h0M754.4 280.6h0M773 270.7h0M635.5 334h0M637.8 337.8h0M619.5 338.4h0M623.6 338.4h0M601.2 369h0M606.8 369h0M625.2 356.7h0M870.7 285.4h0M873.3 291h0M879.1 289.7h0M886.4 292.6h0M902.7 301.3h0M909.3 304h0M914 314.6h0M815.3 270.6h0M932 331.2h0M938.7 331.2h0M971.7 368.4h0M1007.9 469.9h0M1004.4 528.4h0M996 562.4h0M980.9 590.3h0M980.9 596.8h0M929.4 652h0M921.8 667.3h0M880 694h0M854.4 702h0M814.7 711.3h0M805.7 713.3h0M773 713.3h0M705.8 696.3h0M739 706h0M594 390h0M598 390h0M590.2 396.8h0M580.4 402.4h0M565.6 451.2h0M568.3 456.2h0M561.8 508.6h0M586 595.2h0"/><path stroke="#f0a892" d="M847.77 315.58h0m4.53 0h0m4.53 0h0m4.53 0h0m4.53 0h0m4.53 0h0m-33.98 3.93h0m4.53 0h0m4.53 0h0m4.53 0h0m4.53 0h0m4.53 0h0m4.53 0h0m4.53 0h0m4.53 0h0m4.53 0h0m4.53 0h0m-52.1 3.93h0m4.53 0h0m4.53 0h0m4.53 0h0m4.53 0h0m4.53 0h0m4.53 0h0m4.53 0h0m4.53 0h0m4.53 0h0m4.53 0h0m4.53 0h0m4.53 0h0m4.53 0h0m-65.69 3.93h0m4.53 0h0m4.53 0h0m4.53 0h0m4.53 0h0m4.53 0h0m4.53 0h0m4.53 0h0m4.53 0h0m4.53 0h0m4.53 0h0m4.53 0h0m4.53 0h0m4.53 0h0m4.53 0h0m4.53 0h0m4.53 0h0m-74.75 3.93h0m4.53 0h0m4.53 0h0m4.53 0h0m4.53 0h0m4.53 0h0m4.53 0h0m4.53 0h0m4.53 0h0m4.53 0h0m4.53 0h0m4.53 0h0m4.53 0h0m4.53 0h0m4.53 0h0m4.53 0h0m4.53 0h0m4.53 0h0m-79.27 3.93h0m4.53 0h0m4.53 0h0m4.53 0h0m4.53 0h0m4.53 0h0m4.53 0h0m4.53 0h0m4.53 0h0m4.53 0h0m4.53 0h0m4.53 0h0m4.53 0h0m4.53 0h0m4.53 0h0m4.53 0h0m4.53 0h0m4.53 0h0m4.53 0h0m-88.34 3.93h0m4.53 0h0m4.53 0h0m4.53 0h0m4.53 0h0m4.53 0h0m4.53 0h0m4.53 0h0m4.53 0h0m4.53 0h0m4.53 0h0m4.53 0h0m4.53 0h0m4.53 0h0m4.53 0h0m4.53 0h0m4.53 0h0m4.53 0h0m4.53 0h0m4.53 0h0m4.53 0h0m4.53 0h0m-97.4 3.93h0m4.53 0h0m4.53 0h0m4.53 0h0m4.53 0h0m4.53 0h0m4.53 0h0m4.53 0h0m4.53 0h0m4.53 0h0m4.53 0h0m4.53 0h0m4.53 0h0m4.53 0h0m4.53 0h0m4.53 0h0m4.53 0h0m4.53 0h0m4.53 0h0m4.53 0h0m4.53 0h0m4.53 0h0m4.53 0h0m-97.4 3.93h0m4.53 0h0m4.53 0h0m4.53 0h0m4.53 0h0m4.53 0h0m4.53 0h0m4.53 0h0m4.53 0h0m4.53 0h0m4.53 0h0m4.53 0h0m4.53 0h0m4.53 0h0m4.53 0h0m4.53 0h0m4.53 0h0m4.53 0h0m4.53 0h0m4.53 0h0m4.53 0h0m4.53 0h0m-97.4 3.93h0m4.53 0h0m4.53 0h0m4.53 0h0m4.53 0h0m4.53 0h0m4.53 0h0m4.53 0h0m4.53 0h0m4.53 0h0m4.53 0h0m4.53 0h0m4.53 0h0m4.53 0h0m4.53 0h0m4.53 0h0m4.53 0h0m4.53 0h0m4.53 0h0m4.53 0h0m4.53 0h0m4.53 0h0m4.53 0h0m-101.93 3.93h0m4.53 0h0m4.53 0h0m4.53 0h0m4.53 0h0m4.53 0h0m4.53 0h0m4.53 0h0m4.53 0h0m4.53 0h0m4.53 0h0m4.53 0h0m4.53 0h0m4.53 0h0m4.53 0h0m4.53 0h0m4.53 0h0m4.53 0h0m4.53 0h0m4.53 0h0m4.53 0h0m4.53 0h0m4.53 0h0m4.53 0h0m-106.46 3.93h0m4.53 0h0m4.53 0h0m4.53 0h0m4.53 0h0m4.53 0h0m4.53 0h0m4.53 0h0m4.53 0h0m4.53 0h0m4.53 0h0m4.53 0h0m4.53 0h0m4.53 0h0m4.53 0h0m4.53 0h0m4.53 0h0m4.53 0h0m4.53 0h0m4.53 0h0m4.53 0h0m4.53 0h0m4.53 0h0m4.53 0h0m4.53 0h0m-106.46 3.93h0m4.53 0h0m4.53 0h0m4.53 0h0m4.53 0h0m4.53 0h0m4.53 0h0m4.53 0h0m4.53 0h0m4.53 0h0m4.53 0h0m4.53 0h0m4.53 0h0m4.53 0h0m4.53 0h0m4.53 0h0m4.53 0h0m4.53 0h0m4.53 0h0m4.53 0h0m4.53 0h0m4.53 0h0m4.53 0h0m4.53 0h0m-106.46 3.93h0m4.53 0h0m4.53 0h0m4.53 0h0m4.53 0h0m4.53 0h0m4.53 0h0m4.53 0h0m4.53 0h0m4.53 0h0m4.53 0h0m4.53 0h0m4.53 0h0m4.53 0h0m4.53 0h0m4.53 0h0m4.53 0h0m4.53 0h0m4.53 0h0m4.53 0h0m4.53 0h0m4.53 0h0m4.53 0h0m4.53 0h0m4.53 0h0m-110.99 3.93h0m4.53 0h0m4.53 0h0m4.53 0h0m4.53 0h0m4.53 0h0m4.53 0h0m4.53 0h0m4.53 0h0m4.53 0h0m4.53 0h0m4.53 0h0m4.53 0h0m4.53 0h0m4.53 0h0m4.53 0h0m4.53 0h0m4.53 0h0m4.53 0h0m4.53 0h0m4.53 0h0m4.53 0h0m4.53 0h0m4.53 0h0m4.53 0h0m4.53 0h0m-110.99 3.93h0m4.53 0h0m4.53 0h0m4.53 0h0m4.53 0h0m4.53 0h0m4.53 0h0m4.53 0h0m4.53 0h0m4.53 0h0m4.53 0h0m4.53 0h0m4.53 0h0m4.53 0h0m4.53 0h0m4.53 0h0m4.53 0h0m4.53 0h0m4.53 0h0m4.53 0h0m4.53 0h0m4.53 0h0m4.53 0h0m4.53 0h0m4.53 0h0m-106.46 3.93h0m4.53 0h0m4.53 0h0m4.53 0h0m4.53 0h0m4.53 0h0m4.53 0h0m4.53 0h0m4.53 0h0m4.53 0h0m4.53 0h0m4.53 0h0m4.53 0h0m4.53 0h0m4.53 0h0m4.53 0h0m4.53 0h0m4.53 0h0m4.53 0h0m4.53 0h0m4.53 0h0m4.53 0h0m4.53 0h0m4.53 0h0m-106.46 3.93h0m4.53 0h0m4.53 0h0m4.53 0h0m4.53 0h0m4.53 0h0m4.53 0h0m4.53 0h0m4.53 0h0m4.53 0h0m4.53 0h0m4.53 0h0m4.53 0h0m4.53 0h0m4.53 0h0m4.53 0h0m4.53 0h0m4.53 0h0m4.53 0h0m4.53 0h0m4.53 0h0m4.53 0h0m4.53 0h0m4.53 0h0m4.53 0h0m-106.46 3.93h0m4.53 0h0m4.53 0h0m4.53 0h0m4.53 0h0m4.53 0h0m4.53 0h0m4.53 0h0m4.53 0h0m4.53 0h0m4.53 0h0m4.53 0h0m4.53 0h0m4.53 0h0m4.53 0h0m4.53 0h0m4.53 0h0m4.53 0h0m4.53 0h0m4.53 0h0m4.53 0h0m4.53 0h0m4.53 0h0m4.53 0h0m-101.93 3.93h0m4.53 0h0m4.53 0h0m4.53 0h0m4.53 0h0m4.53 0h0m4.53 0h0m4.53 0h0m4.53 0h0m4.53 0h0m4.53 0h0m4.53 0h0m4.53 0h0m4.53 0h0m4.53 0h0m4.53 0h0m4.53 0h0m4.53 0h0m4.53 0h0m4.53 0h0m4.53 0h0m4.53 0h0m4.53 0h0m-97.4 3.93h0m4.53 0h0m4.53 0h0m4.53 0h0m4.53 0h0m4.53 0h0m4.53 0h0m4.53 0h0m4.53 0h0m4.53 0h0m4.53 0h0m4.53 0h0m4.53 0h0m4.53 0h0m4.53 0h0m4.53 0h0m4.53 0h0m4.53 0h0m4.53 0h0m4.53 0h0m4.53 0h0m4.53 0h0m-97.4 3.93h0m4.53 0h0m4.53 0h0m4.53 0h0m4.53 0h0m4.53 0h0m4.53 0h0m4.53 0h0m4.53 0h0m4.53 0h0m4.53 0h0m4.53 0h0m4.53 0h0m4.53 0h0m4.53 0h0m4.53 0h0m4.53 0h0m4.53 0h0m4.53 0h0m4.53 0h0m4.53 0h0m4.53 0h0m4.53 0h0m-92.87 3.93h0m4.53 0h0m4.53 0h0m4.53 0h0m4.53 0h0m4.53 0h0m4.53 0h0m4.53 0h0m4.53 0h0m4.53 0h0m4.53 0h0m4.53 0h0m4.53 0h0m4.53 0h0m4.53 0h0m4.53 0h0m4.53 0h0m4.53 0h0m4.53 0h0m4.53 0h0m4.53 0h0m-88.34 3.93h0m4.53 0h0m4.53 0h0m4.53 0h0m4.53 0h0m4.53 0h0m4.53 0h0m4.53 0h0m4.53 0h0m4.53 0h0m4.53 0h0m4.53 0h0m4.53 0h0m4.53 0h0m4.53 0h0m4.53 0h0m4.53 0h0m4.53 0h0m4.53 0h0m-79.27 3.93h0m4.53 0h0m4.53 0h0m4.53 0h0m4.53 0h0m4.53 0h0m4.53 0h0m4.53 0h0m4.53 0h0m4.53 0h0m4.53 0h0m4.53 0h0m4.53 0h0m4.53 0h0m4.53 0h0m4.53 0h0m4.53 0h0m4.53 0h0m-74.75 3.93h0m4.53 0h0m4.53 0h0m4.53 0h0m4.53 0h0m4.53 0h0m4.53 0h0m4.53 0h0m4.53 0h0m4.53 0h0m4.53 0h0m4.53 0h0m4.53 0h0m4.53 0h0m4.53 0h0m4.53 0h0m4.53 0h0m-65.69 3.93h0m4.53 0h0m4.53 0h0m4.53 0h0m4.53 0h0m4.53 0h0m4.53 0h0m4.53 0h0m4.53 0h0m4.53 0h0m4.53 0h0m4.53 0h0m4.53 0h0m4.53 0h0m-52.1 3.93h0m4.53 0h0m4.53 0h0m4.53 0h0m4.53 0h0m4.53 0h0m4.53 0h0m4.53 0h0m4.53 0h0m4.53 0h0m4.53 0h0m-33.98 3.93h0m4.53 0h0m4.53 0h0m4.53 0h0m4.53 0h0m4.53 0h0M749.31 294.13h0m4.53 0h0m4.53 0h0m4.53 0h0m4.53 0h0m4.53 0h0m4.53 0h0m-33.98 3.93h0m4.53 0h0m4.53 0h0m4.53 0h0m4.53 0h0m4.53 0h0m4.53 0h0m4.53 0h0m4.53 0h0m4.53 0h0m-43.03 3.93h0m4.53 0h0m4.53 0h0m4.53 0h0m4.53 0h0m4.53 0h0m4.53 0h0m4.53 0h0m4.53 0h0m4.53 0h0m4.53 0h0m-52.1 3.93h0m4.53 0h0m4.53 0h0m4.53 0h0m4.53 0h0m4.53 0h0m4.53 0h0m4.53 0h0m4.53 0h0m4.53 0h0m4.53 0h0m4.53 0h0m4.53 0h0m4.53 0h0m-61.16 3.93h0m4.53 0h0m4.53 0h0m4.53 0h0m4.53 0h0m4.53 0h0m4.53 0h0m4.53 0h0m4.53 0h0m4.53 0h0m4.53 0h0m4.53 0h0m4.53 0h0m4.53 0h0m4.53 0h0m-65.69 3.93h0m4.53 0h0m4.53 0h0m4.53 0h0m4.53 0h0m4.53 0h0m4.53 0h0m4.53 0h0m4.53 0h0m4.53 0h0m4.53 0h0m4.53 0h0m4.53 0h0m4.53 0h0m4.53 0h0m4.53 0h0m-65.69 3.93h0m4.53 0h0m4.53 0h0m4.53 0h0m4.53 0h0m4.53 0h0m4.53 0h0m4.53 0h0m4.53 0h0m4.53 0h0m4.53 0h0m4.53 0h0m4.53 0h0m4.53 0h0m4.53 0h0m-65.69 3.93h0m4.53 0h0m4.53 0h0m4.53 0h0m4.53 0h0m4.53 0h0m4.53 0h0m4.53 0h0m4.53 0h0m4.53 0h0m4.53 0h0m4.53 0h0m4.53 0h0m4.53 0h0m4.53 0h0m4.53 0h0m-70.22 3.93h0m4.53 0h0m4.53 0h0m4.53 0h0m4.53 0h0m4.53 0h0m4.53 0h0m4.53 0h0m4.53 0h0m4.53 0h0m4.53 0h0m4.53 0h0m4.53 0h0m4.53 0h0m4.53 0h0m4.53 0h0m4.53 0h0m-70.22 3.93h0m4.53 0h0m4.53 0h0m4.53 0h0m4.53 0h0m4.53 0h0m4.53 0h0m4.53 0h0m4.53 0h0m4.53 0h0m4.53 0h0m4.53 0h0m4.53 0h0m4.53 0h0m4.53 0h0m4.53 0h0m-70.22 3.93h0m4.53 0h0m4.53 0h0m4.53 0h0m4.53 0h0m4.53 0h0m4.53 0h0m4.53 0h0m4.53 0h0m4.53 0h0m4.53 0h0m4.53 0h0m4.53 0h0m4.53 0h0m4.53 0h0m4.53 0h0m4.53 0h0m-70.22 3.93h0m4.53 0h0m4.53 0h0m4.53 0h0m4.53 0h0m4.53 0h0m4.53 0h0m4.53 0h0m4.53 0h0m4.53 0h0m4.53 0h0m4.53 0h0m4.53 0h0m4.53 0h0m4.53 0h0m4.53 0h0m-65.69 3.93h0m4.53 0h0m4.53 0h0m4.53 0h0m4.53 0h0m4.53 0h0m4.53 0h0m4.53 0h0m4.53 0h0m4.53 0h0m4.53 0h0m4.53 0h0m4.53 0h0m4.53 0h0m4.53 0h0m-65.69 3.93h0m4.53 0h0m4.53 0h0m4.53 0h0m4.53 0h0m4.53 0h0m4.53 0h0m4.53 0h0m4.53 0h0m4.53 0h0m4.53 0h0m4.53 0h0m4.53 0h0m4.53 0h0m4.53 0h0m4.53 0h0m-65.69 3.93h0m4.53 0h0m4.53 0h0m4.53 0h0m4.53 0h0m4.53 0h0m4.53 0h0m4.53 0h0m4.53 0h0m4.53 0h0m4.53 0h0m4.53 0h0m4.53 0h0m4.53 0h0m4.53 0h0m-61.16 3.93h0m4.53 0h0m4.53 0h0m4.53 0h0m4.53 0h0m4.53 0h0m4.53 0h0m4.53 0h0m4.53 0h0m4.53 0h0m4.53 0h0m4.53 0h0m4.53 0h0m4.53 0h0m-52.1 3.93h0m4.53 0h0m4.53 0h0m4.53 0h0m4.53 0h0m4.53 0h0m4.53 0h0m4.53 0h0m4.53 0h0m4.53 0h0m4.53 0h0m-43.03 3.93h0m4.53 0h0m4.53 0h0m4.53 0h0m4.53 0h0m4.53 0h0m4.53 0h0m4.53 0h0m4.53 0h0m4.53 0h0m-29.44 3.93h0m4.53 0h0m4.53 0h0m4.53 0h0m4.53 0h0M580.04 432.5h0m4.53 0h0m9.06 0h0m4.53 0h0m-15.85 3.93h0m13.59 0h0m-11.32 3.93h0m4.53 0h0m4.53 0h0M695.76 316.45h0m-6.79 3.93h0m4.53 0h0m4.53 0h0m-20.38 3.93h0m4.53 0h0m4.53 0h0m4.53 0h0m4.53 0h0m4.53 0h0m4.53 0h0m4.53 0h0m-33.98 3.93h0m4.53 0h0m4.53 0h0m4.53 0h0m4.53 0h0m4.53 0h0m4.53 0h0m4.53 0h0m4.53 0h0m-38.5 3.93h0m4.53 0h0m4.53 0h0m4.53 0h0m4.53 0h0m4.53 0h0m4.53 0h0m4.53 0h0m4.53 0h0m4.53 0h0m-38.5 3.93h0m4.53 0h0m4.53 0h0m4.53 0h0m4.53 0h0m4.53 0h0m4.53 0h0m4.53 0h0m4.53 0h0m4.53 0h0m-43.03 3.93h0m4.53 0h0m4.53 0h0m4.53 0h0m4.53 0h0m4.53 0h0m4.53 0h0m4.53 0h0m4.53 0h0m4.53 0h0m-43.03 3.93h0m4.53 0h0m4.53 0h0m4.53 0h0m4.53 0h0m4.53 0h0m4.53 0h0m4.53 0h0m4.53 0h0m4.53 0h0m-38.5 3.93h0m4.53 0h0m4.53 0h0m4.53 0h0m4.53 0h0m4.53 0h0m4.53 0h0m4.53 0h0m4.53 0h0m4.53 0h0m-38.5 3.93h0m4.53 0h0m4.53 0h0m4.53 0h0m4.53 0h0m4.53 0h0m4.53 0h0m4.53 0h0m4.53 0h0m-33.98 3.93h0m4.53 0h0m4.53 0h0m4.53 0h0m4.53 0h0m4.53 0h0m4.53 0h0m4.53 0h0m-20.38 3.93h0m4.53 0h0m4.53 0h0"/><path stroke="#f6c2a4" d="M980.6 425.71h0m-11.33 3.93h0m4.53 0h0m4.53 0h0m4.53 0h0m4.53 0h0m4.53 0h0m-20.38 3.93h0m4.53 0h0m4.53 0h0m4.53 0h0m4.53 0h0m-15.85 3.93h0m4.53 0h0m4.53 0h0m4.53 0h0m-15.85 3.93h0m4.53 0h0m4.53 0h0m4.53 0h0m4.53 0h0m-20.38 3.93h0m4.53 0h0m4.53 0h0m4.53 0h0m4.53 0h0m4.53 0h0m-11.33 3.93h0M653.6 323.5h0M670.5 310.47h0m-2.26 3.93h0m4.53 0h0"/></g>
<g fill="none" stroke-linecap="round" stroke-width="4.0"><path stroke="#f4c089" d="M609.21 353.07h0m4.53 0h0m4.53 0h0m4.53 0h0m-11.32 3.93h0m4.53 0h0m4.53 0h0m-6.79 3.93h0m4.53 0h0m4.53 0h0M601.24 599.27h0m4.53 0h0m-6.79 3.93h0m4.53 0h0m4.53 0h0m-2.26 3.93h0M565.47 428.5h0m4.53 0h0m4.53 0h0M972.57 537.11h0m4.53 0h0m4.53 0h0m-15.86 3.93h0m4.53 0h0m4.53 0h0m4.53 0h0m4.53 0h0m4.53 0h0m-20.38 3.93h0m4.53 0h0m4.53 0h0m4.53 0h0m4.53 0h0m4.53 0h0m-24.92 3.93h0m4.53 0h0m4.53 0h0m4.53 0h0m4.53 0h0m4.53 0h0m-24.92 3.93h0m4.53 0h0m4.53 0h0m4.53 0h0m4.53 0h0m4.53 0h0m-20.38 3.93h0m4.53 0h0m4.53 0h0m4.53 0h0m4.53 0h0m4.53 0h0m-15.86 3.93h0m4.53 0h0m4.53 0h0m-6.79 3.93h0M981.84 468h0m18.12 0h0m-15.85 3.93h0m13.59 0h0M1005.47 479.57h0m4.53 0h0m4.53 0h0m-6.79 3.93h0m4.53 0h0m-6.79 3.93h0m4.53 0h0m4.53 0h0M577.97 452.67h0m4.53 0h0m4.53 0h0m-11.32 3.93h0m4.53 0h0m4.53 0h0m4.53 0h0m-11.32 3.93h0m4.53 0h0m4.53 0h0M580.1 474.87h0m4.53 0h0m-6.79 3.93h0m4.53 0h0m-6.79 3.93h0m4.53 0h0m4.53 0h0M575.47 503.67h0m4.53 0h0m4.53 0h0m-6.79 3.93h0m4.53 0h0m-6.79 3.93h0m4.53 0h0m4.53 0h0M587.57 555.6h0m4.53 0h0m4.53 0h0m-11.32 3.93h0m4.53 0h0m4.53 0h0m4.53 0h0m-11.32 3.93h0m4.53 0h0m4.53 0h0M651.34 327.43h0m-2.26 3.93h0m4.53 0h0m4.53 0h0M689.33 298.17h0m0 7.86h0M878.15 302.2h0M909.8 664.87h0m-2.26 3.93h0m4.53 0h0m-2.26 3.93h0M770 700.7h0m-2.26 3.93h0m4.53 0h0M614.74 632.7h0m4.53 0h0m4.53 0h0m4.53 0h0m4.53 0h0m-15.85 3.93h0m4.53 0h0m4.53 0h0m4.53 0h0m-11.32 3.93h0m4.53 0h0m4.53 0h0M694.7 291.3h0M745.3 274h0M750 280.6h0M759 272.3h0M764.7 269.7h0M764 281h0M768.7 281h0M726.6 341.7h0M637 326.5h0M633.3 337.8h0M890 297h0M904.7 306.3h0M910.7 309h0M834 274.6h0M932 323.8h0M966.4 365.2h0M985.8 398.7h0M995.5 421.3h0M995.7 421.8h0M1002.3 440.8h0M1000.2 451.4h0M1004.9 451.4h0M1006.2 460.2h0M1011.4 497h0M1006.5 515.2h0M992 566.8h0M958.5 629h0M930.8 661.1h0M902.9 677.9h0M857.3 689.7h0M861.3 698.3h0M830.7 709.6h0M812.3 700.7h0M810 708.7h0M677.1 690.9h0M682 690.9h0M607.9 627h0M601.4 614.7h0M586 391.8h0M584.9 397.6h0M587 402.8h0M576.9 421h0M568.6 442.9h0M573.1 442.9h0M564.8 466.7h0M569.4 466.7h0M567 505.6h0M567.1 505.7h0M564.4 518.9h0M568.9 518.9h0M570.1 548h0M574.6 548h0M575.4 556.6h0M580 566h0M583.7 585.3h0M589.4 590.6h0M600.3 615.1h0"/><path stroke="#eb9068" d="M766.88 612.1h0m4.53 0h0m4.53 0h0m4.53 0h0m4.53 0h0m4.53 0h0m-29.45 3.93h0m4.53 0h0m4.53 0h0m4.53 0h0m4.53 0h0m4.53 0h0m4.53 0h0m4.53 0h0m4.53 0h0m-43.03 3.93h0m4.53 0h0m4.53 0h0m4.53 0h0m4.53 0h0m4.53 0h0m4.53 0h0m4.53 0h0m4.53 0h0m4.53 0h0m4.53 0h0m4.53 0h0m-52.09 3.93h0m4.53 0h0m4.53 0h0m4.53 0h0m4.53 0h0m4.53 0h0m4.53 0h0m4.53 0h0m4.53 0h0m4.53 0h0m4.53 0h0m4.53 0h0m4.53 0h0m-56.62 3.93h0m4.53 0h0m4.53 0h0m4.53 0h0m4.53 0h0m4.53 0h0m4.53 0h0m4.53 0h0m4.53 0h0m4.53 0h0m4.53 0h0m4.53 0h0m4.53 0h0m4.53 0h0m-65.69 3.93h0m4.53 0h0m4.53 0h0m4.53 0h0m4.53 0h0m4.53 0h0m4.53 0h0m4.53 0h0m4.53 0h0m4.53 0h0m4.53 0h0m4.53 0h0m4.53 0h0m4.53 0h0m4.53 0h0m4.53 0h0m4.53 0h0m-70.22 3.93h0m4.53 0h0m4.53 0h0m4.53 0h0m4.53 0h0m4.53 0h0m4.53 0h0m4.53 0h0m4.53 0h0m4.53 0h0m4.53 0h0m4.53 0h0m4.53 0h0m4.53 0h0m4.53 0h0m4.53 0h0m-70.22 3.93h0m4.53 0h0m4.53 0h0m4.53 0h0m4.53 0h0m4.53 0h0m4.53 0h0m4.53 0h0m4.53 0h0m4.53 0h0m4.53 0h0m4.53 0h0m4.53 0h0m4.53 0h0m4.53 0h0m4.53 0h0m4.53 0h0m-74.75 3.93h0m4.53 0h0m4.53 0h0m4.53 0h0m4.53 0h0m4.53 0h0m4.53 0h0m4.53 0h0m4.53 0h0m4.53 0h0m4.53 0h0m4.53 0h0m4.53 0h0m4.53 0h0m4.53 0h0m4.53 0h0m4.53 0h0m4.53 0h0m-79.27 3.93h0m4.53 0h0m4.53 0h0m4.53 0h0m4.53 0h0m4.53 0h0m4.53 0h0m4.53 0h0m4.53 0h0m4.53 0h0m4.53 0h0m4.53 0h0m4.53 0h0m4.53 0h0m4.53 0h0m4.53 0h0m4.53 0h0m4.53 0h0m4.53 0h0m-79.27 3.93h0m4.53 0h0m4.53 0h0m4.53 0h0m4.53 0h0m4.53 0h0m4.53 0h0m4.53 0h0m4.53 0h0m4.53 0h0m4.53 0h0m4.53 0h0m4.53 0h0m4.53 0h0m4.53 0h0m4.53 0h0m4.53 0h0m4.53 0h0m-79.27 3.93h0m4.53 0h0m4.53 0h0m4.53 0h0m4.53 0h0m4.53 0h0m4.53 0h0m4.53 0h0m4.53 0h0m4.53 0h0m4.53 0h0m4.53 0h0m4.53 0h0m4.53 0h0m4.53 0h0m4.53 0h0m4.53 0h0m4.53 0h0m4.53 0h0m-79.27 3.93h0m4.53 0h0m4.53 0h0m4.53 0h0m4.53 0h0m4.53 0h0m4.53 0h0m4.53 0h0m4.53 0h0m4.53 0h0m4.53 0h0m4.53 0h0m4.53 0h0m4.53 0h0m4.53 0h0m4.53 0h0m4.53 0h0m4.53 0h0m-74.75 3.93h0m4.53 0h0m4.53 0h0m4.53 0h0m4.53 0h0m4.53 0h0m4.53 0h0m4.53 0h0m4.53 0h0m4.53 0h0m4.53 0h0m4.53 0h0m4.53 0h0m4.53 0h0m4.53 0h0m4.53 0h0m4.53 0h0m-70.22 3.93h0m4.53 0h0m4.53 0h0m4.53 0h0m4.53 0h0m4.53 0h0m4.53 0h0m4.53 0h0m4.53 0h0m4.53 0h0m4.53 0h0m4.53 0h0m4.53 0h0m4.53 0h0m4.53 0h0m4.53 0h0m-65.69 3.93h0m4.53 0h0m4.53 0h0m4.53 0h0m4.53 0h0m4.53 0h0m4.53 0h0m4.53 0h0m4.53 0h0m4.53 0h0m4.53 0h0m4.53 0h0m4.53 0h0m4.53 0h0m4.53 0h0m4.53 0h0m-65.69 3.93h0m4.53 0h0m4.53 0h0m4.53 0h0m4.53 0h0m4.53 0h0m4.53 0h0m4.53 0h0m4.53 0h0m4.53 0h0m4.53 0h0m4.53 0h0m4.53 0h0m4.53 0h0m-56.62 3.93h0m4.53 0h0m4.53 0h0m4.53 0h0m4.53 0h0m4.53 0h0m4.53 0h0m4.53 0h0m4.53 0h0m4.53 0h0m4.53 0h0m4.53 0h0m4.53 0h0m-52.09 3.93h0m4.53 0h0m4.53 0h0m4.53 0h0m4.53 0h0m4.53 0h0m4.53 0h0m4.53 0h0m4.53 0h0m4.53 0h0m4.53 0h0m4.53 0h0m-43.03 3.93h0m4.53 0h0m4.53 0h0m4.53 0h0m4.53 0h0m4.53 0h0m4.53 0h0m4.53 0h0m4.53 0h0m-29.45 3.93h0m4.53 0h0m4.53 0h0m4.53 0h0m4.53 0h0m4.53 0h0M817.03 280.18h0m4.53 0h0m-15.86 3.93h0m4.53 0h0m4.53 0h0m4.53 0h0m4.53 0h0m4.53 0h0m4.53 0h0m-29.45 3.93h0m4.53 0h0m4.53 0h0m4.53 0h0m4.53 0h0m4.53 0h0m4.53 0h0m4.53 0h0m-29.45 3.93h0m4.53 0h0m4.53 0h0m4.53 0h0m4.53 0h0m4.53 0h0m4.53 0h0m-24.92 3.93h0m4.53 0h0m4.53 0h0m4.53 0h0m4.53 0h0m4.53 0h0m-24.92 3.93h0m4.53 0h0m4.53 0h0m4.53 0h0m4.53 0h0m4.53 0h0m4.53 0h0m-29.45 3.93h0m4.53 0h0m4.53 0h0m4.53 0h0m4.53 0h0m4.53 0h0m4.53 0h0m4.53 0h0m-29.45 3.93h0m4.53 0h0m4.53 0h0m4.53 0h0m4.53 0h0m4.53 0h0m4.53 0h0m-15.86 3.93h0m4.53 0h0M949.66 369.29h0m-6.79 3.93h0m4.53 0h0m4.53 0h0m4.53 0h0m-24.91 3.93h0m4.53 0h0m4.53 0h0m4.53 0h0m4.53 0h0m4.53 0h0m4.53 0h0m4.53 0h0m4.53 0h0m-38.5 3.93h0m4.53 0h0m4.53 0h0m4.53 0h0m4.53 0h0m4.53 0h0m4.53 0h0m4.53 0h0m4.53 0h0m4.53 0h0m-43.03 3.93h0m4.53 0h0m4.53 0h0m4.53 0h0m4.53 0h0m4.53 0h0m4.53 0h0m4.53 0h0m4.53 0h0m4.53 0h0m4.53 0h0m-47.56 3.93h0m4.53 0h0m4.53 0h0m4.53 0h0m4.53 0h0m4.53 0h0m4.53 0h0m4.53 0h0m4.53 0h0m4.53 0h0m4.53 0h0m4.53 0h0m-47.56 3.93h0m4.53 0h0m4.53 0h0m4.53 0h0m4.53 0h0m4.53 0h0m4.53 0h0m4.53 0h0m4.53 0h0m4.53 0h0m4.53 0h0m-47.56 3.93h0m4.53 0h0m4.53 0h0m4.53 0h0m4.53 0h0m4.53 0h0m4.53 0h0m4.53 0h0m4.53 0h0m4.53 0h0m4.53 0h0m4.53 0h0m-47.56 3.93h0m4.53 0h0m4.53 0h0m4.53 0h0m4.53 0h0m4.53 0h0m4.53 0h0m4.53 0h0m4.53 0h0m4.53 0h0m4.53 0h0m-47.56 3.93h0m4.53 0h0m4.53 0h0m4.53 0h0m4.53 0h0m4.53 0h0m4.53 0h0m4.53 0h0m4.53 0h0m4.53 0h0m4.53 0h0m4.53 0h0m-47.56 3.93h0m4.53 0h0m4.53 0h0m4.53 0h0m4.53 0h0m4.53 0h0m4.53 0h0m4.53 0h0m4.53 0h0m4.53 0h0m4.53 0h0m-43.03 3.93h0m4.53 0h0m4.53 0h0m4.53 0h0m4.53 0h0m4.53 0h0m4.53 0h0m4.53 0h0m4.53 0h0m4.53 0h0m-38.5 3.93h0m4.53 0h0m4.53 0h0m4.53 0h0m4.53 0h0m4.53 0h0m4.53 0h0m4.53 0h0m4.53 0h0m-24.91 3.93h0m4.53 0h0m4.53 0h0m4.53 0h0"/><path stroke="#e8825c" d="M582.53 571.57h0m-2.26 3.93h0m4.53 0h0m4.53 0h0M712 287.71h0m-2.26 3.93h0m4.53 0h0m-11.32 3.93h0m4.53 0h0m4.53 0h0m4.53 0h0m4.53 0h0m-15.85 3.93h0m4.53 0h0m4.53 0h0m4.53 0h0m-15.85 3.93h0m4.53 0h0m4.53 0h0m4.53 0h0m4.53 0h0m-11.32 3.93h0m4.53 0h0m-2.26 3.93h0M821.2 685.06h0m-2.26 3.93h0m4.53 0h0m-11.32 3.93h0m4.53 0h0m4.53 0h0m4.53 0h0m4.53 0h0m-15.85 3.93h0m4.53 0h0m4.53 0h0m4.53 0h0m-11.32 3.93h0m4.53 0h0m4.53 0h0m-6.79 3.93h0m4.53 0h0M846.84 292.2h0m4.53 0h0m4.53 0h0m4.53 0h0m4.53 0h0m-15.85 3.93h0m4.53 0h0m4.53 0h0m4.53 0h0m-11.32 3.93h0m4.53 0h0m4.53 0h0m-6.79 3.93h0M980.54 516.8h0m4.53 0h0m4.53 0h0m4.53 0h0m4.53 0h0m-15.85 3.93h0m4.53 0h0m4.53 0h0m4.53 0h0m-11.32 3.93h0m4.53 0h0m4.53 0h0m-6.79 3.93h0M662.87 652.97h0m-11.32 3.93h0m4.53 0h0m4.53 0h0m4.53 0h0m4.53 0h0m-15.85 3.93h0m4.53 0h0m4.53 0h0m4.53 0h0m-11.32 3.93h0m4.53 0h0m4.53 0h0m-6.79 3.93h0m4.53 0h0M843.29 651.18h0m4.53 0h0m-15.86 3.93h0m4.53 0h0m4.53 0h0m4.53 0h0m4.53 0h0m4.53 0h0m4.53 0h0m-29.45 3.93h0m4.53 0h0m4.53 0h0m4.53 0h0m4.53 0h0m4.53 0h0m4.53 0h0m4.53 0h0m-29.45 3.93h0m4.53 0h0m4.53 0h0m4.53 0h0m4.53 0h0m4.53 0h0m4.53 0h0m-29.45 3.93h0m4.53 0h0m4.53 0h0m4.53 0h0m4.53 0h0m4.53 0h0m4.53 0h0m4.53 0h0m-33.98 3.93h0m4.53 0h0m4.53 0h0m4.53 0h0m4.53 0h0m4.53 0h0m4.53 0h0m4.53 0h0m-29.45 3.93h0m4.53 0h0m4.53 0h0m4.53 0h0m4.53 0h0m4.53 0h0m4.53 0h0m4.53 0h0m-29.45 3.93h0m4.53 0h0m4.53 0h0m4.53 0h0m4.53 0h0m4.53 0h0m4.53 0h0m-15.86 3.93h0m4.53 0h0M986.37 468h0m4.53 0h0m4.53 0h0m-6.79 3.93h0m4.53 0h0m-6.79 3.93h0m4.53 0h0m4.53 0h0M583.04 555.6h0m18.12 0h0M644.54 323.5h0m4.53 0h0m13.59 0h0m-15.85 3.93h0m13.59 0h0m-9.06 7.86h0M903.5 314.9h0m-2.26 3.93h0m4.53 0h0M914.47 324.47h0m4.53 0h0m4.53 0h0m-11.32 3.93h0m4.53 0h0m4.53 0h0m-6.79 3.93h0m4.53 0h0m4.53 0h0M936.37 640.7h0m4.53 0h0m4.53 0h0m-11.32 3.93h0m4.53 0h0m4.53 0h0m4.53 0h0m-11.32 3.93h0m4.53 0h0m4.53 0h0M752.7 697.77h0m-2.26 3.93h0m4.53 0h0m-6.79 3.93h0m4.53 0h0m4.53 0h0M640.4 645.27h0m2.26 3.93h0m-2.26 3.93h0M715 279.7h0M985.4 392.6h0M999.6 547.3h0M926.2 656.4h0M934.3 655.5h0M925.3 662.9h0M835 706h0M791.7 714.7h0M763.3 710.4h0M665.8 675.9h0M763.1 710.8h0M562.6 474.9h0M566.8 528.7h0M568.9 538.1h0M591.3 597.4h0M595.5 592.9h0"/><path stroke="#dc6243" d="M562.74 489.07h0m4.53 0h0m-6.79 3.93h0m4.53 0h0m4.53 0h0m-2.26 3.93h0M934.8 338.81h0m-2.26 3.93h0m4.53 0h0m-11.32 3.93h0m4.53 0h0m4.53 0h0m4.53 0h0m4.53 0h0m-15.85 3.93h0m4.53 0h0m4.53 0h0m4.53 0h0m-15.85 3.93h0m4.53 0h0m4.53 0h0m4.53 0h0m4.53 0h0m-11.32 3.93h0m4.53 0h0m-2.26 3.93h0M627.5 591.06h0m-2.26 3.93h0m4.53 0h0m-11.32 3.93h0m4.53 0h0m4.53 0h0m4.53 0h0m4.53 0h0m-15.85 3.93h0m4.53 0h0m4.53 0h0m4.53 0h0m-15.85 3.93h0m4.53 0h0m4.53 0h0m4.53 0h0m4.53 0h0m-11.32 3.93h0m4.53 0h0m-2.26 3.93h0M604.24 573.74h0m4.53 0h0m-11.32 3.93h0m4.53 0h0m4.53 0h0m4.53 0h0m4.53 0h0m-15.85 3.93h0m4.53 0h0m4.53 0h0m4.53 0h0m-11.32 3.93h0m4.53 0h0m4.53 0h0m-6.79 3.93h0m4.53 0h0M882.75 657.31h0m-6.79 3.93h0m4.53 0h0m4.53 0h0m4.53 0h0m-15.85 3.93h0m4.53 0h0m4.53 0h0m4.53 0h0m4.53 0h0m-15.85 3.93h0m4.53 0h0m4.53 0h0m4.53 0h0m-15.85 3.93h0m4.53 0h0m4.53 0h0m4.53 0h0m4.53 0h0m-15.85 3.93h0m4.53 0h0m4.53 0h0m4.53 0h0m-6.79 3.93h0M778.24 278.7h0m4.53 0h0m4.53 0h0m4.53 0h0m4.53 0h0m-15.85 3.93h0m4.53 0h0m4.53 0h0m4.53 0h0m-11.32 3.93h0m4.53 0h0m4.53 0h0M959.2 352.97h0m-2.26 3.93h0m4.53 0h0m-2.26 3.93h0M985.1 572.8h0m-2.26 3.93h0m4.53 0h0m-6.79 3.93h0m4.53 0h0m4.53 0h0M869.03 689.23h0M919.7 313.2h0"/><path stroke="#c03a28" d="M576.87 409.6h0m4.53 0h0m4.53 0h0M621.8 372.81h0m-2.26 3.93h0m4.53 0h0m-11.32 3.93h0m4.53 0h0m4.53 0h0m4.53 0h0m4.53 0h0m-15.85 3.93h0m4.53 0h0m4.53 0h0m4.53 0h0m-15.85 3.93h0m4.53 0h0m4.53 0h0m4.53 0h0m-6.79 3.93h0m4.53 0h0m-2.26 3.93h0M887 661.2h0M887 676.9h0M586.84 436.43h0m4.53 0h0M655.87 327.43h0M880.41 298.27h0m2.26 3.93h0m-6.79 3.93h0m4.53 0h0M894 304h0m-2.26 3.93h0m4.53 0h0M990.9 406.57h0m-2.26 3.93h0m4.53 0h0m-6.79 3.93h0m4.53 0h0M949.96 640.7h0M748.17 697.77h0m9.06 0h0m-11.32 3.93h0M797.3 698.3h0m-2.26 3.93h0m4.53 0h0m-6.79 3.93h0m4.53 0h0m4.53 0h0M871.3 685.3h0m2.26 3.93h0m-6.79 3.93h0m4.53 0h0M677 671.07h0m-2.26 3.93h0m4.53 0h0m-2.26 3.93h0M766.4 277h0M726.7 317.7h0M604.4 358.2h0M595.9 373.7h0M840 278.6h0M844.7 278.6h0M853.3 277.7h0M802 269h0M809.6 272.3h0M804 275.7h0M945.2 369.3h0M954 369.3h0M976.5 393h0M974.3 396.6h0M922.3 400.9h0M945.2 424.3h0M949.7 424.3h0M954 346.2h0M994.3 433.8h0M1003.2 505.9h0M1007.9 505.9h0M997.5 537.6h0M1002.3 537.6h0M952.8 630.8h0M919.7 661.1h0M918.7 661.3h0M881 688.3h0M887.3 688.3h0M855.3 696h0M780 711.3h0M784.7 711.3h0M643.7 660.5h0M733.7 708.1h0M607 617.9h0M611.5 617.9h0M566.3 479.9h0M575 563.1h0M590 584.9h0"/><path stroke="#9a2014" d="M684.8 298.17h0m-2.26 3.93h0m4.53 0h0m-6.79 3.93h0m4.53 0h0M730.67 280.07h0m4.53 0h0m4.53 0h0m-11.32 3.93h0m4.53 0h0m4.53 0h0m-6.79 3.93h0m4.53 0h0m4.53 0h0"/><path stroke="#740e07" d="M690.59 373.4h0m4.53 0h0m4.53 0h0m4.53 0h0m4.53 0h0m4.53 0h0m4.53 0h0m4.53 0h0m4.53 0h0m4.53 0h0m4.53 0h0m4.53 0h0m-65.68 3.93h0m4.53 0h0m4.53 0h0m4.53 0h0m4.53 0h0m4.53 0h0m4.53 0h0m4.53 0h0m4.53 0h0m4.53 0h0m4.53 0h0m4.53 0h0m4.53 0h0m4.53 0h0m4.53 0h0m4.53 0h0m4.53 0h0m4.53 0h0m4.53 0h0m-88.34 3.93h0m4.53 0h0m4.53 0h0m4.53 0h0m4.53 0h0m4.53 0h0m4.53 0h0m4.53 0h0m4.53 0h0m4.53 0h0m4.53 0h0m4.53 0h0m4.53 0h0m4.53 0h0m4.53 0h0m4.53 0h0m4.53 0h0m4.53 0h0m4.53 0h0m4.53 0h0m4.53 0h0m4.53 0h0m-101.93 3.93h0m4.53 0h0m4.53 0h0m4.53 0h0m4.53 0h0m4.53 0h0m4.53 0h0m4.53 0h0m4.53 0h0m4.53 0h0m4.53 0h0m4.53 0h0m4.53 0h0m4.53 0h0m4.53 0h0m4.53 0h0m4.53 0h0m4.53 0h0m4.53 0h0m4.53 0h0m4.53 0h0m4.53 0h0m4.53 0h0m4.53 0h0m4.53 0h0m-115.51 3.93h0m4.53 0h0m4.53 0h0m4.53 0h0m4.53 0h0m4.53 0h0m4.53 0h0m4.53 0h0m4.53 0h0m4.53 0h0m4.53 0h0m4.53 0h0m4.53 0h0m4.53 0h0m4.53 0h0m4.53 0h0m4.53 0h0m4.53 0h0m4.53 0h0m4.53 0h0m4.53 0h0m4.53 0h0m4.53 0h0m4.53 0h0m4.53 0h0m4.53 0h0m4.53 0h0m4.53 0h0m-129.11 3.93h0m4.53 0h0m4.53 0h0m4.53 0h0m4.53 0h0m4.53 0h0m4.53 0h0m4.53 0h0m4.53 0h0m4.53 0h0m4.53 0h0m4.53 0h0m4.53 0h0m4.53 0h0m4.53 0h0m4.53 0h0m4.53 0h0m4.53 0h0m4.53 0h0m4.53 0h0m4.53 0h0m4.53 0h0m4.53 0h0m4.53 0h0m4.53 0h0m4.53 0h0m4.53 0h0m4.53 0h0m4.53 0h0m4.53 0h0m4.53 0h0m-142.7 3.93h0m4.53 0h0m4.53 0h0m4.53 0h0m4.53 0h0m4.53 0h0m4.53 0h0m4.53 0h0m4.53 0h0m4.53 0h0m4.53 0h0m4.53 0h0m4.53 0h0m4.53 0h0m4.53 0h0m4.53 0h0m4.53 0h0m4.53 0h0m4.53 0h0m4.53 0h0m4.53 0h0m4.53 0h0m4.53 0h0m4.53 0h0m4.53 0h0m4.53 0h0m4.53 0h0m4.53 0h0m4.53 0h0m4.53 0h0m4.53 0h0m4.53 0h0m4.53 0h0m4.53 0h0m-151.75 3.93h0m4.53 0h0m4.53 0h0m4.53 0h0m4.53 0h0m4.53 0h0m4.53 0h0m4.53 0h0m4.53 0h0m4.53 0h0m4.53 0h0m4.53 0h0m4.53 0h0m4.53 0h0m4.53 0h0m4.53 0h0m4.53 0h0m4.53 0h0m4.53 0h0m4.53 0h0m4.53 0h0m4.53 0h0m4.53 0h0m4.53 0h0m4.53 0h0m4.53 0h0m4.53 0h0m4.53 0h0m4.53 0h0m4.53 0h0m4.53 0h0m4.53 0h0m4.53 0h0m4.53 0h0m4.53 0h0m-160.82 3.93h0m4.53 0h0m4.53 0h0m4.53 0h0m4.53 0h0m4.53 0h0m4.53 0h0m4.53 0h0m4.53 0h0m4.53 0h0m4.53 0h0m4.53 0h0m4.53 0h0m4.53 0h0m4.53 0h0m4.53 0h0m4.53 0h0m4.53 0h0m4.53 0h0m4.53 0h0m4.53 0h0m4.53 0h0m4.53 0h0m4.53 0h0m4.53 0h0m4.53 0h0m4.53 0h0m4.53 0h0m4.53 0h0m4.53 0h0m4.53 0h0m4.53 0h0m4.53 0h0m4.53 0h0m4.53 0h0m4.53 0h0m4.53 0h0m4.53 0h0m-169.88 3.93h0m4.53 0h0m4.53 0h0m4.53 0h0m4.53 0h0m4.53 0h0m4.53 0h0m4.53 0h0m4.53 0h0m4.53 0h0m4.53 0h0m4.53 0h0m4.53 0h0m4.53 0h0m4.53 0h0m4.53 0h0m4.53 0h0m4.53 0h0m4.53 0h0m4.53 0h0m4.53 0h0m4.53 0h0m4.53 0h0m4.53 0h0m4.53 0h0m4.53 0h0m4.53 0h0m4.53 0h0m4.53 0h0m4.53 0h0m4.53 0h0m4.53 0h0m4.53 0h0m4.53 0h0m4.53 0h0m4.53 0h0m4.53 0h0m4.53 0h0m4.53 0h0m-174.41 3.93h0m4.53 0h0m4.53 0h0m4.53 0h0m4.53 0h0m4.53 0h0m4.53 0h0m4.53 0h0m4.53 0h0m4.53 0h0m4.53 0h0m4.53 0h0m4.53 0h0m4.53 0h0m4.53 0h0m4.53 0h0m4.53 0h0m4.53 0h0m4.53 0h0m4.53 0h0m4.53 0h0m4.53 0h0m4.53 0h0m4.53 0h0m4.53 0h0m4.53 0h0m4.53 0h0m4.53 0h0m4.53 0h0m4.53 0h0m4.53 0h0m4.53 0h0m4.53 0h0m4.53 0h0m4.53 0h0m4.53 0h0m4.53 0h0m4.53 0h0m4.53 0h0m4.53 0h0m-183.47 3.93h0m4.53 0h0m4.53 0h0m4.53 0h0m4.53 0h0m4.53 0h0m4.53 0h0m4.53 0h0m4.53 0h0m4.53 0h0m4.53 0h0m4.53 0h0m4.53 0h0m4.53 0h0m4.53 0h0m4.53 0h0m4.53 0h0m4.53 0h0m4.53 0h0m4.53 0h0m4.53 0h0m4.53 0h0m4.53 0h0m4.53 0h0m4.53 0h0m4.53 0h0m4.53 0h0m4.53 0h0m4.53 0h0m4.53 0h0m4.53 0h0m4.53 0h0m4.53 0h0m4.53 0h0m4.53 0h0m4.53 0h0m4.53 0h0m4.53 0h0m4.53 0h0m4.53 0h0m4.53 0h0m4.53 0h0m4.53 0h0m-192.52 3.93h0m4.53 0h0m4.53 0h0m4.53 0h0m4.53 0h0m4.53 0h0m4.53 0h0m4.53 0h0m4.53 0h0m4.53 0h0m4.53 0h0m4.53 0h0m4.53 0h0m4.53 0h0m4.53 0h0m4.53 0h0m4.53 0h0m4.53 0h0m4.53 0h0m4.53 0h0m4.53 0h0m4.53 0h0m4.53 0h0m4.53 0h0m4.53 0h0m4.53 0h0m4.53 0h0m4.53 0h0m4.53 0h0m4.53 0h0m4.53 0h0m4.53 0h0m4.53 0h0m4.53 0h0m4.53 0h0m4.53 0h0m4.53 0h0m4.53 0h0m4.53 0h0m4.53 0h0m4.53 0h0m4.53 0h0m4.53 0h0m4.53 0h0m-197.05 3.93h0m4.53 0h0m4.53 0h0m4.53 0h0m4.53 0h0m4.53 0h0m4.53 0h0m4.53 0h0m4.53 0h0m4.53 0h0m4.53 0h0m4.53 0h0m4.53 0h0m4.53 0h0m4.53 0h0m4.53 0h0m4.53 0h0m4.53 0h0m4.53 0h0m4.53 0h0m4.53 0h0m4.53 0h0m4.53 0h0m4.53 0h0m4.53 0h0m4.53 0h0m4.53 0h0m4.53 0h0m4.53 0h0m4.53 0h0m4.53 0h0m4.53 0h0m4.53 0h0m4.53 0h0m4.53 0h0m4.53 0h0m4.53 0h0m4.53 0h0m4.53 0h0m4.53 0h0m4.53 0h0m4.53 0h0m4.53 0h0m4.53 0h0m4.53 0h0m-201.58 3.93h0m4.53 0h0m4.53 0h0m4.53 0h0m4.53 0h0m4.53 0h0m4.53 0h0m4.53 0h0m4.53 0h0m4.53 0h0m4.53 0h0m4.53 0h0m4.53 0h0m4.53 0h0m4.53 0h0m4.53 0h0m4.53 0h0m4.53 0h0m4.53 0h0m4.53 0h0m4.53 0h0m4.53 0h0m4.53 0h0m4.53 0h0m4.53 0h0m4.53 0h0m4.53 0h0m4.53 0h0m4.53 0h0m4.53 0h0m4.53 0h0m4.53 0h0m4.53 0h0m4.53 0h0m4.53 0h0m4.53 0h0m4.53 0h0m4.53 0h0m4.53 0h0m4.53 0h0m4.53 0h0m4.53 0h0m4.53 0h0m4.53 0h0m4.53 0h0m4.53 0h0m-206.12 3.93h0m4.53 0h0m4.53 0h0m4.53 0h0m4.53 0h0m4.53 0h0m4.53 0h0m4.53 0h0m4.53 0h0m4.53 0h0m4.53 0h0m4.53 0h0m4.53 0h0m4.53 0h0m4.53 0h0m4.53 0h0m4.53 0h0m4.53 0h0m4.53 0h0m4.53 0h0m4.53 0h0m4.53 0h0m4.53 0h0m4.53 0h0m4.53 0h0m4.53 0h0m4.53 0h0m4.53 0h0m4.53 0h0m4.53 0h0m4.53 0h0m4.53 0h0m4.53 0h0m4.53 0h0m4.53 0h0m4.53 0h0m4.53 0h0m4.53 0h0m4.53 0h0m4.53 0h0m4.53 0h0m4.53 0h0m4.53 0h0m4.53 0h0m4.53 0h0m4.53 0h0m4.53 0h0m-210.65 3.93h0m4.53 0h0m4.53 0h0m4.53 0h0m4.53 0h0m4.53 0h0m4.53 0h0m4.53 0h0m4.53 0h0m4.53 0h0m4.53 0h0m4.53 0h0m4.53 0h0m4.53 0h0m4.53 0h0m4.53 0h0m4.53 0h0m4.53 0h0m4.53 0h0m4.53 0h0m4.53 0h0m4.53 0h0m4.53 0h0m4.53 0h0m4.53 0h0m4.53 0h0m4.53 0h0m4.53 0h0m4.53 0h0m4.53 0h0m4.53 0h0m4.53 0h0m4.53 0h0m4.53 0h0m4.53 0h0m4.53 0h0m4.53 0h0m4.53 0h0m4.53 0h0m4.53 0h0m4.53 0h0m4.53 0h0m4.53 0h0m4.53 0h0m4.53 0h0m4.53 0h0m4.53 0h0m4.53 0h0m-215.18 3.93h0m4.53 0h0m4.53 0h0m4.53 0h0m4.53 0h0m4.53 0h0m4.53 0h0m4.53 0h0m4.53 0h0m4.53 0h0m4.53 0h0m4.53 0h0m4.53 0h0m4.53 0h0m4.53 0h0m4.53 0h0m4.53 0h0m4.53 0h0m4.53 0h0m4.53 0h0m4.53 0h0m4.53 0h0m4.53 0h0m4.53 0h0m4.53 0h0m4.53 0h0m4.53 0h0m4.53 0h0m4.53 0h0m4.53 0h0m4.53 0h0m4.53 0h0m4.53 0h0m4.53 0h0m4.53 0h0m4.53 0h0m4.53 0h0m4.53 0h0m4.53 0h0m4.53 0h0m4.53 0h0m4.53 0h0m4.53 0h0m4.53 0h0m4.53 0h0m4.53 0h0m4.53 0h0m4.53 0h0m4.53 0h0m-219.71 3.93h0m4.53 0h0m4.53 0h0m4.53 0h0m4.53 0h0m4.53 0h0m4.53 0h0m4.53 0h0m4.53 0h0m4.53 0h0m4.53 0h0m4.53 0h0m4.53 0h0m4.53 0h0m4.53 0h0m4.53 0h0m4.53 0h0m4.53 0h0m4.53 0h0m4.53 0h0m4.53 0h0m4.53 0h0m4.53 0h0m4.53 0h0m4.53 0h0m4.53 0h0m4.53 0h0m4.53 0h0m4.53 0h0m4.53 0h0m4.53 0h0m4.53 0h0m4.53 0h0m4.53 0h0m4.53 0h0m4.53 0h0m4.53 0h0m4.53 0h0m4.53 0h0m4.53 0h0m4.53 0h0m4.53 0h0m4.53 0h0m4.53 0h0m4.53 0h0m4.53 0h0m4.53 0h0m4.53 0h0m4.53 0h0m4.53 0h0m-219.71 3.93h0m4.53 0h0m4.53 0h0m4.53 0h0m4.53 0h0m4.53 0h0m4.53 0h0m4.53 0h0m4.53 0h0m4.53 0h0m4.53 0h0m4.53 0h0m4.53 0h0m4.53 0h0m4.53 0h0m4.53 0h0m4.53 0h0m4.53 0h0m4.53 0h0m4.53 0h0m4.53 0h0m4.53 0h0m4.53 0h0m4.53 0h0m4.53 0h0m4.53 0h0m4.53 0h0m4.53 0h0m4.53 0h0m4.53 0h0m4.53 0h0m4.53 0h0m4.53 0h0m4.53 0h0m4.53 0h0m4.53 0h0m4.53 0h0m4.53 0h0m4.53 0h0m4.53 0h0m4.53 0h0m4.53 0h0m4.53 0h0m4.53 0h0m4.53 0h0m4.53 0h0m4.53 0h0m4.53 0h0m4.53 0h0m-219.71 3.93h0m4.53 0h0m4.53 0h0m4.53 0h0m4.53 0h0m4.53 0h0m4.53 0h0m4.53 0h0m4.53 0h0m4.53 0h0m4.53 0h0m4.53 0h0m4.53 0h0m4.53 0h0m4.53 0h0m4.53 0h0m4.53 0h0m4.53 0h0m4.53 0h0m4.53 0h0m4.53 0h0m4.53 0h0m4.53 0h0m4.53 0h0m4.53 0h0m4.53 0h0m4.53 0h0m4.53 0h0m4.53 0h0m4.53 0h0m4.53 0h0m4.53 0h0m4.53 0h0m4.53 0h0m4.53 0h0m4.53 0h0m4.53 0h0m4.53 0h0m4.53 0h0m4.53 0h0m4.53 0h0m4.53 0h0m4.53 0h0m4.53 0h0m4.53 0h0m4.53 0h0m4.53 0h0m4.53 0h0m4.53 0h0m4.53 0h0m-224.24 3.93h0m4.53 0h0m4.53 0h0m4.53 0h0m4.53 0h0m4.53 0h0m4.53 0h0m4.53 0h0m4.53 0h0m4.53 0h0m4.53 0h0m4.53 0h0m4.53 0h0m4.53 0h0m4.53 0h0m4.53 0h0m4.53 0h0m4.53 0h0m4.53 0h0m4.53 0h0m4.53 0h0m4.53 0h0m4.53 0h0m4.53 0h0m4.53 0h0m4.53 0h0m4.53 0h0m4.53 0h0m4.53 0h0m4.53 0h0m4.53 0h0m4.53 0h0m4.53 0h0m4.53 0h0m4.53 0h0m4.53 0h0m4.53 0h0m4.53 0h0m4.53 0h0m4.53 0h0m4.53 0h0m4.53 0h0m4.53 0h0m4.53 0h0m4.53 0h0m4.53 0h0m4.53 0h0m4.53 0h0m4.53 0h0m4.53 0h0m4.53 0h0m-228.76 3.93h0m4.53 0h0m4.53 0h0m4.53 0h0m4.53 0h0m4.53 0h0m4.53 0h0m4.53 0h0m4.53 0h0m4.53 0h0m4.53 0h0m4.53 0h0m4.53 0h0m4.53 0h0m4.53 0h0m4.53 0h0m4.53 0h0m4.53 0h0m4.53 0h0m4.53 0h0m4.53 0h0m4.53 0h0m4.53 0h0m4.53 0h0m4.53 0h0m4.53 0h0m4.53 0h0m4.53 0h0m4.53 0h0m4.53 0h0m4.53 0h0m4.53 0h0m4.53 0h0m4.53 0h0m4.53 0h0m4.53 0h0m4.53 0h0m4.53 0h0m4.53 0h0m4.53 0h0m4.53 0h0m4.53 0h0m4.53 0h0m4.53 0h0m4.53 0h0m4.53 0h0m4.53 0h0m4.53 0h0m4.53 0h0m4.53 0h0m4.53 0h0m4.53 0h0m-233.29 3.93h0m4.53 0h0m4.53 0h0m4.53 0h0m4.53 0h0m4.53 0h0m4.53 0h0m4.53 0h0m4.53 0h0m4.53 0h0m4.53 0h0m4.53 0h0m4.53 0h0m4.53 0h0m4.53 0h0m4.53 0h0m4.53 0h0m4.53 0h0m4.53 0h0m4.53 0h0m4.53 0h0m4.53 0h0m4.53 0h0m4.53 0h0m4.53 0h0m4.53 0h0m4.53 0h0m4.53 0h0m4.53 0h0m4.53 0h0m4.53 0h0m4.53 0h0m4.53 0h0m4.53 0h0m4.53 0h0m4.53 0h0m4.53 0h0m4.53 0h0m4.53 0h0m4.53 0h0m4.53 0h0m4.53 0h0m4.53 0h0m4.53 0h0m4.53 0h0m4.53 0h0m4.53 0h0m4.53 0h0m4.53 0h0m4.53 0h0m4.53 0h0m4.53 0h0m4.53 0h0m-233.29 3.93h0m4.53 0h0m4.53 0h0m4.53 0h0m4.53 0h0m4.53 0h0m4.53 0h0m4.53 0h0m4.53 0h0m4.53 0h0m4.53 0h0m4.53 0h0m4.53 0h0m4.53 0h0m4.53 0h0m4.53 0h0m4.53 0h0m4.53 0h0m4.53 0h0m4.53 0h0m4.53 0h0m4.53 0h0m4.53 0h0m4.53 0h0m4.53 0h0m4.53 0h0m4.53 0h0m4.53 0h0m4.53 0h0m4.53 0h0m4.53 0h0m4.53 0h0m4.53 0h0m4.53 0h0m4.53 0h0m4.53 0h0m4.53 0h0m4.53 0h0m4.53 0h0m4.53 0h0m4.53 0h0m4.53 0h0m4.53 0h0m4.53 0h0m4.53 0h0m4.53 0h0m4.53 0h0m4.53 0h0m4.53 0h0m4.53 0h0m4.53 0h0m4.53 0h0m-233.29 3.93h0m4.53 0h0m4.53 0h0m4.53 0h0m4.53 0h0m4.53 0h0m4.53 0h0m4.53 0h0m4.53 0h0m4.53 0h0m4.53 0h0m4.53 0h0m4.53 0h0m4.53 0h0m4.53 0h0m4.53 0h0m4.53 0h0m4.53 0h0m4.53 0h0m4.53 0h0m4.53 0h0m4.53 0h0m4.53 0h0m4.53 0h0m4.53 0h0m4.53 0h0m4.53 0h0m4.53 0h0m4.53 0h0m4.53 0h0m4.53 0h0m4.53 0h0m4.53 0h0m4.53 0h0m4.53 0h0m4.53 0h0m4.53 0h0m4.53 0h0m4.53 0h0m4.53 0h0m4.53 0h0m4.53 0h0m4.53 0h0m4.53 0h0m4.53 0h0m4.53 0h0m4.53 0h0m4.53 0h0m4.53 0h0m4.53 0h0m4.53 0h0m4.53 0h0m4.53 0h0m-237.82 3.93h0m4.53 0h0m4.53 0h0m4.53 0h0m4.53 0h0m4.53 0h0m4.53 0h0m4.53 0h0m4.53 0h0m4.53 0h0m4.53 0h0m4.53 0h0m4.53 0h0m4.53 0h0m4.53 0h0m4.53 0h0m4.53 0h0m4.53 0h0m4.53 0h0m4.53 0h0m4.53 0h0m4.53 0h0m4.53 0h0m4.53 0h0m4.53 0h0m4.53 0h0m4.53 0h0m4.53 0h0m4.53 0h0m4.53 0h0m4.53 0h0m4.53 0h0m4.53 0h0m4.53 0h0m4.53 0h0m4.53 0h0m4.53 0h0m4.53 0h0m4.53 0h0m4.53 0h0m4.53 0h0m4.53 0h0m4.53 0h0m4.53 0h0m4.53 0h0m4.53 0h0m4.53 0h0m4.53 0h0m4.53 0h0m4.53 0h0m4.53 0h0m4.53 0h0m4.53 0h0m4.53 0h0m-237.82 3.93h0m4.53 0h0m4.53 0h0m4.53 0h0m4.53 0h0m4.53 0h0m4.53 0h0m4.53 0h0m4.53 0h0m4.53 0h0m4.53 0h0m4.53 0h0m4.53 0h0m4.53 0h0m4.53 0h0m4.53 0h0m4.53 0h0m4.53 0h0m4.53 0h0m4.53 0h0m4.53 0h0m4.53 0h0m4.53 0h0m4.53 0h0m4.53 0h0m4.53 0h0m4.53 0h0m4.53 0h0m4.53 0h0m4.53 0h0m4.53 0h0m4.53 0h0m4.53 0h0m4.53 0h0m4.53 0h0m4.53 0h0m4.53 0h0m4.53 0h0m4.53 0h0m4.53 0h0m4.53 0h0m4.53 0h0m4.53 0h0m4.53 0h0m4.53 0h0m4.53 0h0m4.53 0h0m4.53 0h0m4.53 0h0m4.53 0h0m4.53 0h0m4.53 0h0m4.53 0h0m-237.82 3.93h0m4.53 0h0m4.53 0h0m4.53 0h0m4.53 0h0m4.53 0h0m4.53 0h0m4.53 0h0m4.53 0h0m4.53 0h0m4.53 0h0m4.53 0h0m4.53 0h0m4.53 0h0m4.53 0h0m4.53 0h0m4.53 0h0m4.53 0h0m4.53 0h0m4.53 0h0m4.53 0h0m4.53 0h0m4.53 0h0m4.53 0h0m4.53 0h0m4.53 0h0m4.53 0h0m4.53 0h0m4.53 0h0m4.53 0h0m4.53 0h0m4.53 0h0m4.53 0h0m4.53 0h0m4.53 0h0m4.53 0h0m4.53 0h0m4.53 0h0m4.53 0h0m4.53 0h0m4.53 0h0m4.53 0h0m4.53 0h0m4.53 0h0m4.53 0h0m4.53 0h0m4.53 0h0m4.53 0h0m4.53 0h0m4.53 0h0m4.53 0h0m4.53 0h0m4.53 0h0m4.53 0h0m-237.82 3.93h0m4.53 0h0m4.53 0h0m4.53 0h0m4.53 0h0m4.53 0h0m4.53 0h0m4.53 0h0m4.53 0h0m4.53 0h0m4.53 0h0m4.53 0h0m4.53 0h0m4.53 0h0m4.53 0h0m4.53 0h0m4.53 0h0m4.53 0h0m4.53 0h0m4.53 0h0m4.53 0h0m4.53 0h0m4.53 0h0m4.53 0h0m4.53 0h0m4.53 0h0m4.53 0h0m4.53 0h0m4.53 0h0m4.53 0h0m4.53 0h0m4.53 0h0m4.53 0h0m4.53 0h0m4.53 0h0m4.53 0h0m4.53 0h0m4.53 0h0m4.53 0h0m4.53 0h0m4.53 0h0m4.53 0h0m4.53 0h0m4.53 0h0m4.53 0h0m4.53 0h0m4.53 0h0m4.53 0h0m4.53 0h0m4.53 0h0m4.53 0h0m4.53 0h0m4.53 0h0m-237.82 3.93h0m4.53 0h0m4.53 0h0m4.53 0h0m4.53 0h0m4.53 0h0m4.53 0h0m4.53 0h0m4.53 0h0m4.53 0h0m4.53 0h0m4.53 0h0m4.53 0h0m4.53 0h0m4.53 0h0m4.53 0h0m4.53 0h0m4.53 0h0m4.53 0h0m4.53 0h0m4.53 0h0m4.53 0h0m4.53 0h0m4.53 0h0m4.53 0h0m4.53 0h0m4.53 0h0m4.53 0h0m4.53 0h0m4.53 0h0m4.53 0h0m4.53 0h0m4.53 0h0m4.53 0h0m4.53 0h0m4.53 0h0m4.53 0h0m4.53 0h0m4.53 0h0m4.53 0h0m4.53 0h0m4.53 0h0m4.53 0h0m4.53 0h0m4.53 0h0m4.53 0h0m4.53 0h0m4.53 0h0m4.53 0h0m4.53 0h0m4.53 0h0m4.53 0h0m4.53 0h0m4.53 0h0m-237.82 3.93h0m4.53 0h0m4.53 0h0m4.53 0h0m4.53 0h0m4.53 0h0m4.53 0h0m4.53 0h0m4.53 0h0m4.53 0h0m4.53 0h0m4.53 0h0m4.53 0h0m4.53 0h0m4.53 0h0m4.53 0h0m4.53 0h0m4.53 0h0m4.53 0h0m4.53 0h0m4.53 0h0m4.53 0h0m4.53 0h0m4.53 0h0m4.53 0h0m4.53 0h0m4.53 0h0m4.53 0h0m4.53 0h0m4.53 0h0m4.53 0h0m4.53 0h0m4.53 0h0m4.53 0h0m4.53 0h0m4.53 0h0m4.53 0h0m4.53 0h0m4.53 0h0m4.53 0h0m4.53 0h0m4.53 0h0m4.53 0h0m4.53 0h0m4.53 0h0m4.53 0h0m4.53 0h0m4.53 0h0m4.53 0h0m4.53 0h0m4.53 0h0m4.53 0h0m4.53 0h0m-237.82 3.93h0m4.53 0h0m4.53 0h0m4.53 0h0m4.53 0h0m4.53 0h0m4.53 0h0m4.53 0h0m4.53 0h0m4.53 0h0m4.53 0h0m4.53 0h0m4.53 0h0m4.53 0h0m4.53 0h0m4.53 0h0m4.53 0h0m4.53 0h0m4.53 0h0m4.53 0h0m4.53 0h0m4.53 0h0m4.53 0h0m4.53 0h0m4.53 0h0m4.53 0h0m4.53 0h0m4.53 0h0m4.53 0h0m4.53 0h0m4.53 0h0m4.53 0h0m4.53 0h0m4.53 0h0m4.53 0h0m4.53 0h0m4.53 0h0m4.53 0h0m4.53 0h0m4.53 0h0m4.53 0h0m4.53 0h0m4.53 0h0m4.53 0h0m4.53 0h0m4.53 0h0m4.53 0h0m4.53 0h0m4.53 0h0m4.53 0h0m4.53 0h0m4.53 0h0m4.53 0h0m4.53 0h0m-237.82 3.93h0m4.53 0h0m4.53 0h0m4.53 0h0m4.53 0h0m4.53 0h0m4.53 0h0m4.53 0h0m4.53 0h0m4.53 0h0m4.53 0h0m4.53 0h0m4.53 0h0m4.53 0h0m4.53 0h0m4.53 0h0m4.53 0h0m4.53 0h0m4.53 0h0m4.53 0h0m4.53 0h0m4.53 0h0m4.53 0h0m4.53 0h0m4.53 0h0m4.53 0h0m4.53 0h0m4.53 0h0m4.53 0h0m4.53 0h0m4.53 0h0m4.53 0h0m4.53 0h0m4.53 0h0m4.53 0h0m4.53 0h0m4.53 0h0m4.53 0h0m4.53 0h0m4.53 0h0m4.53 0h0m4.53 0h0m4.53 0h0m4.53 0h0m4.53 0h0m4.53 0h0m4.53 0h0m4.53 0h0m4.53 0h0m4.53 0h0m4.53 0h0m4.53 0h0m4.53 0h0m-233.29 3.93h0m4.53 0h0m4.53 0h0m4.53 0h0m4.53 0h0m4.53 0h0m4.53 0h0m4.53 0h0m4.53 0h0m4.53 0h0m4.53 0h0m4.53 0h0m4.53 0h0m4.53 0h0m4.53 0h0m4.53 0h0m4.53 0h0m4.53 0h0m4.53 0h0m4.53 0h0m4.53 0h0m4.53 0h0m4.53 0h0m4.53 0h0m4.53 0h0m4.53 0h0m4.53 0h0m4.53 0h0m4.53 0h0m4.53 0h0m4.53 0h0m4.53 0h0m4.53 0h0m4.53 0h0m4.53 0h0m4.53 0h0m4.53 0h0m4.53 0h0m4.53 0h0m4.53 0h0m4.53 0h0m4.53 0h0m4.53 0h0m4.53 0h0m4.53 0h0m4.53 0h0m4.53 0h0m4.53 0h0m4.53 0h0m4.53 0h0m4.53 0h0m4.53 0h0m-233.29 3.93h0m4.53 0h0m4.53 0h0m4.53 0h0m4.53 0h0m4.53 0h0m4.53 0h0m4.53 0h0m4.53 0h0m4.53 0h0m4.53 0h0m4.53 0h0m4.53 0h0m4.53 0h0m4.53 0h0m4.53 0h0m4.53 0h0m4.53 0h0m4.53 0h0m4.53 0h0m4.53 0h0m4.53 0h0m4.53 0h0m4.53 0h0m4.53 0h0m4.53 0h0m4.53 0h0m4.53 0h0m4.53 0h0m4.53 0h0m4.53 0h0m4.53 0h0m4.53 0h0m4.53 0h0m4.53 0h0m4.53 0h0m4.53 0h0m4.53 0h0m4.53 0h0m4.53 0h0m4.53 0h0m4.53 0h0m4.53 0h0m4.53 0h0m4.53 0h0m4.53 0h0m4.53 0h0m4.53 0h0m4.53 0h0m4.53 0h0m4.53 0h0m4.53 0h0m4.53 0h0m-233.29 3.93h0m4.53 0h0m4.53 0h0m4.53 0h0m4.53 0h0m4.53 0h0m4.53 0h0m4.53 0h0m4.53 0h0m4.53 0h0m4.53 0h0m4.53 0h0m4.53 0h0m4.53 0h0m4.53 0h0m4.53 0h0m4.53 0h0m4.53 0h0m4.53 0h0m4.53 0h0m4.53 0h0m4.53 0h0m4.53 0h0m4.53 0h0m4.53 0h0m4.53 0h0m4.53 0h0m4.53 0h0m4.53 0h0m4.53 0h0m4.53 0h0m4.53 0h0m4.53 0h0m4.53 0h0m4.53 0h0m4.53 0h0m4.53 0h0m4.53 0h0m4.53 0h0m4.53 0h0m4.53 0h0m4.53 0h0m4.53 0h0m4.53 0h0m4.53 0h0m4.53 0h0m4.53 0h0m4.53 0h0m4.53 0h0m4.53 0h0m4.53 0h0m4.53 0h0m-233.29 3.93h0m4.53 0h0m4.53 0h0m4.53 0h0m4.53 0h0m4.53 0h0m4.53 0h0m4.53 0h0m4.53 0h0m4.53 0h0m4.53 0h0m4.53 0h0m4.53 0h0m4.53 0h0m4.53 0h0m4.53 0h0m4.53 0h0m4.53 0h0m4.53 0h0m4.53 0h0m4.53 0h0m4.53 0h0m4.53 0h0m4.53 0h0m4.53 0h0m4.53 0h0m4.53 0h0m4.53 0h0m4.53 0h0m4.53 0h0m4.53 0h0m4.53 0h0m4.53 0h0m4.53 0h0m4.53 0h0m4.53 0h0m4.53 0h0m4.53 0h0m4.53 0h0m4.53 0h0m4.53 0h0m4.53 0h0m4.53 0h0m4.53 0h0m4.53 0h0m4.53 0h0m4.53 0h0m4.53 0h0m4.53 0h0m4.53 0h0m4.53 0h0m4.53 0h0m4.53 0h0m-233.29 3.93h0m4.53 0h0m4.53 0h0m4.53 0h0m4.53 0h0m4.53 0h0m4.53 0h0m4.53 0h0m4.53 0h0m4.53 0h0m4.53 0h0m4.53 0h0m4.53 0h0m4.53 0h0m4.53 0h0m4.53 0h0m4.53 0h0m4.53 0h0m4.53 0h0m4.53 0h0m4.53 0h0m4.53 0h0m4.53 0h0m4.53 0h0m4.53 0h0m4.53 0h0m4.53 0h0m4.53 0h0m4.53 0h0m4.53 0h0m4.53 0h0m4.53 0h0m4.53 0h0m4.53 0h0m4.53 0h0m4.53 0h0m4.53 0h0m4.53 0h0m4.53 0h0m4.53 0h0m4.53 0h0m4.53 0h0m4.53 0h0m4.53 0h0m4.53 0h0m4.53 0h0m4.53 0h0m4.53 0h0m4.53 0h0m4.53 0h0m4.53 0h0m4.53 0h0m-228.76 3.93h0m4.53 0h0m4.53 0h0m4.53 0h0m4.53 0h0m4.53 0h0m4.53 0h0m4.53 0h0m4.53 0h0m4.53 0h0m4.53 0h0m4.53 0h0m4.53 0h0m4.53 0h0m4.53 0h0m4.53 0h0m4.53 0h0m4.53 0h0m4.53 0h0m4.53 0h0m4.53 0h0m4.53 0h0m4.53 0h0m4.53 0h0m4.53 0h0m4.53 0h0m4.53 0h0m4.53 0h0m4.53 0h0m4.53 0h0m4.53 0h0m4.53 0h0m4.53 0h0m4.53 0h0m4.53 0h0m4.53 0h0m4.53 0h0m4.53 0h0m4.53 0h0m4.53 0h0m4.53 0h0m4.53 0h0m4.53 0h0m4.53 0h0m4.53 0h0m4.53 0h0m4.53 0h0m4.53 0h0m4.53 0h0m4.53 0h0m4.53 0h0m-224.24 3.93h0m4.53 0h0m4.53 0h0m4.53 0h0m4.53 0h0m4.53 0h0m4.53 0h0m4.53 0h0m4.53 0h0m4.53 0h0m4.53 0h0m4.53 0h0m4.53 0h0m4.53 0h0m4.53 0h0m4.53 0h0m4.53 0h0m4.53 0h0m4.53 0h0m4.53 0h0m4.53 0h0m4.53 0h0m4.53 0h0m4.53 0h0m4.53 0h0m4.53 0h0m4.53 0h0m4.53 0h0m4.53 0h0m4.53 0h0m4.53 0h0m4.53 0h0m4.53 0h0m4.53 0h0m4.53 0h0m4.53 0h0m4.53 0h0m4.53 0h0m4.53 0h0m4.53 0h0m4.53 0h0m4.53 0h0m4.53 0h0m4.53 0h0m4.53 0h0m4.53 0h0m4.53 0h0m4.53 0h0m4.53 0h0m4.53 0h0m-219.71 3.93h0m4.53 0h0m4.53 0h0m4.53 0h0m4.53 0h0m4.53 0h0m4.53 0h0m4.53 0h0m4.53 0h0m4.53 0h0m4.53 0h0m4.53 0h0m4.53 0h0m4.53 0h0m4.53 0h0m4.53 0h0m4.53 0h0m4.53 0h0m4.53 0h0m4.53 0h0m4.53 0h0m4.53 0h0m4.53 0h0m4.53 0h0m4.53 0h0m4.53 0h0m4.53 0h0m4.53 0h0m4.53 0h0m4.53 0h0m4.53 0h0m4.53 0h0m4.53 0h0m4.53 0h0m4.53 0h0m4.53 0h0m4.53 0h0m4.53 0h0m4.53 0h0m4.53 0h0m4.53 0h0m4.53 0h0m4.53 0h0m4.53 0h0m4.53 0h0m4.53 0h0m4.53 0h0m4.53 0h0m4.53 0h0m-219.71 3.93h0m4.53 0h0m4.53 0h0m4.53 0h0m4.53 0h0m4.53 0h0m4.53 0h0m4.53 0h0m4.53 0h0m4.53 0h0m4.53 0h0m4.53 0h0m4.53 0h0m4.53 0h0m4.53 0h0m4.53 0h0m4.53 0h0m4.53 0h0m4.53 0h0m4.53 0h0m4.53 0h0m4.53 0h0m4.53 0h0m4.53 0h0m4.53 0h0m4.53 0h0m4.53 0h0m4.53 0h0m4.53 0h0m4.53 0h0m4.53 0h0m4.53 0h0m4.53 0h0m4.53 0h0m4.53 0h0m4.53 0h0m4.53 0h0m4.53 0h0m4.53 0h0m4.53 0h0m4.53 0h0m4.53 0h0m4.53 0h0m4.53 0h0m4.53 0h0m4.53 0h0m4.53 0h0m4.53 0h0m4.53 0h0m4.53 0h0m-219.71 3.93h0m4.53 0h0m4.53 0h0m4.53 0h0m4.53 0h0m4.53 0h0m4.53 0h0m4.53 0h0m4.53 0h0m4.53 0h0m4.53 0h0m4.53 0h0m4.53 0h0m4.53 0h0m4.53 0h0m4.53 0h0m4.53 0h0m4.53 0h0m4.53 0h0m4.53 0h0m4.53 0h0m4.53 0h0m4.53 0h0m4.53 0h0m4.53 0h0m4.53 0h0m4.53 0h0m4.53 0h0m4.53 0h0m4.53 0h0m4.53 0h0m4.53 0h0m4.53 0h0m4.53 0h0m4.53 0h0m4.53 0h0m4.53 0h0m4.53 0h0m4.53 0h0m4.53 0h0m4.53 0h0m4.53 0h0m4.53 0h0m4.53 0h0m4.53 0h0m4.53 0h0m4.53 0h0m4.53 0h0m4.53 0h0m-215.18 3.93h0m4.53 0h0m4.53 0h0m4.53 0h0m4.53 0h0m4.53 0h0m4.53 0h0m4.53 0h0m4.53 0h0m4.53 0h0m4.53 0h0m4.53 0h0m4.53 0h0m4.53 0h0m4.53 0h0m4.53 0h0m4.53 0h0m4.53 0h0m4.53 0h0m4.53 0h0m4.53 0h0m4.53 0h0m4.53 0h0m4.53 0h0m4.53 0h0m4.53 0h0m4.53 0h0m4.53 0h0m4.53 0h0m4.53 0h0m4.53 0h0m4.53 0h0m4.53 0h0m4.53 0h0m4.53 0h0m4.53 0h0m4.53 0h0m4.53 0h0m4.53 0h0m4.53 0h0m4.53 0h0m4.53 0h0m4.53 0h0m4.53 0h0m4.53 0h0m4.53 0h0m4.53 0h0m4.53 0h0m-210.65 3.93h0m4.53 0h0m4.53 0h0m4.53 0h0m4.53 0h0m4.53 0h0m4.53 0h0m4.53 0h0m4.53 0h0m4.53 0h0m4.53 0h0m4.53 0h0m4.53 0h0m4.53 0h0m4.53 0h0m4.53 0h0m4.53 0h0m4.53 0h0m4.53 0h0m4.53 0h0m4.53 0h0m4.53 0h0m4.53 0h0m4.53 0h0m4.53 0h0m4.53 0h0m4.53 0h0m4.53 0h0m4.53 0h0m4.53 0h0m4.53 0h0m4.53 0h0m4.53 0h0m4.53 0h0m4.53 0h0m4.53 0h0m4.53 0h0m4.53 0h0m4.53 0h0m4.53 0h0m4.53 0h0m4.53 0h0m4.53 0h0m4.53 0h0m4.53 0h0m4.53 0h0m4.53 0h0m-206.12 3.93h0m4.53 0h0m4.53 0h0m4.53 0h0m4.53 0h0m4.53 0h0m4.53 0h0m4.53 0h0m4.53 0h0m4.53 0h0m4.53 0h0m4.53 0h0m4.53 0h0m4.53 0h0m4.53 0h0m4.53 0h0m4.53 0h0m4.53 0h0m4.53 0h0m4.53 0h0m4.53 0h0m4.53 0h0m4.53 0h0m4.53 0h0m4.53 0h0m4.53 0h0m4.53 0h0m4.53 0h0m4.53 0h0m4.53 0h0m4.53 0h0m4.53 0h0m4.53 0h0m4.53 0h0m4.53 0h0m4.53 0h0m4.53 0h0m4.53 0h0m4.53 0h0m4.53 0h0m4.53 0h0m4.53 0h0m4.53 0h0m4.53 0h0m4.53 0h0m4.53 0h0m-201.58 3.93h0m4.53 0h0m4.53 0h0m4.53 0h0m4.53 0h0m4.53 0h0m4.53 0h0m4.53 0h0m4.53 0h0m4.53 0h0m4.53 0h0m4.53 0h0m4.53 0h0m4.53 0h0m4.53 0h0m4.53 0h0m4.53 0h0m4.53 0h0m4.53 0h0m4.53 0h0m4.53 0h0m4.53 0h0m4.53 0h0m4.53 0h0m4.53 0h0m4.53 0h0m4.53 0h0m4.53 0h0m4.53 0h0m4.53 0h0m4.53 0h0m4.53 0h0m4.53 0h0m4.53 0h0m4.53 0h0m4.53 0h0m4.53 0h0m4.53 0h0m4.53 0h0m4.53 0h0m4.53 0h0m4.53 0h0m4.53 0h0m4.53 0h0m4.53 0h0m-197.05 3.93h0m4.53 0h0m4.53 0h0m4.53 0h0m4.53 0h0m4.53 0h0m4.53 0h0m4.53 0h0m4.53 0h0m4.53 0h0m4.53 0h0m4.53 0h0m4.53 0h0m4.53 0h0m4.53 0h0m4.53 0h0m4.53 0h0m4.53 0h0m4.53 0h0m4.53 0h0m4.53 0h0m4.53 0h0m4.53 0h0m4.53 0h0m4.53 0h0m4.53 0h0m4.53 0h0m4.53 0h0m4.53 0h0m4.53 0h0m4.53 0h0m4.53 0h0m4.53 0h0m4.53 0h0m4.53 0h0m4.53 0h0m4.53 0h0m4.53 0h0m4.53 0h0m4.53 0h0m4.53 0h0m4.53 0h0m4.53 0h0m4.53 0h0m-192.52 3.93h0m4.53 0h0m4.53 0h0m4.53 0h0m4.53 0h0m4.53 0h0m4.53 0h0m4.53 0h0m4.53 0h0m4.53 0h0m4.53 0h0m4.53 0h0m4.53 0h0m4.53 0h0m4.53 0h0m4.53 0h0m4.53 0h0m4.53 0h0m4.53 0h0m4.53 0h0m4.53 0h0m4.53 0h0m4.53 0h0m4.53 0h0m4.53 0h0m4.53 0h0m4.53 0h0m4.53 0h0m4.53 0h0m4.53 0h0m4.53 0h0m4.53 0h0m4.53 0h0m4.53 0h0m4.53 0h0m4.53 0h0m4.53 0h0m4.53 0h0m4.53 0h0m4.53 0h0m4.53 0h0m4.53 0h0m4.53 0h0m-183.47 3.93h0m4.53 0h0m4.53 0h0m4.53 0h0m4.53 0h0m4.53 0h0m4.53 0h0m4.53 0h0m4.53 0h0m4.53 0h0m4.53 0h0m4.53 0h0m4.53 0h0m4.53 0h0m4.53 0h0m4.53 0h0m4.53 0h0m4.53 0h0m4.53 0h0m4.53 0h0m4.53 0h0m4.53 0h0m4.53 0h0m4.53 0h0m4.53 0h0m4.53 0h0m4.53 0h0m4.53 0h0m4.53 0h0m4.53 0h0m4.53 0h0m4.53 0h0m4.53 0h0m4.53 0h0m4.53 0h0m4.53 0h0m4.53 0h0m4.53 0h0m4.53 0h0m4.53 0h0m-174.41 3.93h0m4.53 0h0m4.53 0h0m4.53 0h0m4.53 0h0m4.53 0h0m4.53 0h0m4.53 0h0m4.53 0h0m4.53 0h0m4.53 0h0m4.53 0h0m4.53 0h0m4.53 0h0m4.53 0h0m4.53 0h0m4.53 0h0m4.53 0h0m4.53 0h0m4.53 0h0m4.53 0h0m4.53 0h0m4.53 0h0m4.53 0h0m4.53 0h0m4.53 0h0m4.53 0h0m4.53 0h0m4.53 0h0m4.53 0h0m4.53 0h0m4.53 0h0m4.53 0h0m4.53 0h0m4.53 0h0m4.53 0h0m4.53 0h0m4.53 0h0m4.53 0h0m-169.88 3.93h0m4.53 0h0m4.53 0h0m4.53 0h0m4.53 0h0m4.53 0h0m4.53 0h0m4.53 0h0m4.53 0h0m4.53 0h0m4.53 0h0m4.53 0h0m4.53 0h0m4.53 0h0m4.53 0h0m4.53 0h0m4.53 0h0m4.53 0h0m4.53 0h0m4.53 0h0m4.53 0h0m4.53 0h0m4.53 0h0m4.53 0h0m4.53 0h0m4.53 0h0m4.53 0h0m4.53 0h0m4.53 0h0m4.53 0h0m4.53 0h0m4.53 0h0m4.53 0h0m4.53 0h0m4.53 0h0m4.53 0h0m4.53 0h0m4.53 0h0m-160.82 3.93h0m4.53 0h0m4.53 0h0m4.53 0h0m4.53 0h0m4.53 0h0m4.53 0h0m4.53 0h0m4.53 0h0m4.53 0h0m4.53 0h0m4.53 0h0m4.53 0h0m4.53 0h0m4.53 0h0m4.53 0h0m4.53 0h0m4.53 0h0m4.53 0h0m4.53 0h0m4.53 0h0m4.53 0h0m4.53 0h0m4.53 0h0m4.53 0h0m4.53 0h0m4.53 0h0m4.53 0h0m4.53 0h0m4.53 0h0m4.53 0h0m4.53 0h0m4.53 0h0m4.53 0h0m4.53 0h0m-151.75 3.93h0m4.53 0h0m4.53 0h0m4.53 0h0m4.53 0h0m4.53 0h0m4.53 0h0m4.53 0h0m4.53 0h0m4.53 0h0m4.53 0h0m4.53 0h0m4.53 0h0m4.53 0h0m4.53 0h0m4.53 0h0m4.53 0h0m4.53 0h0m4.53 0h0m4.53 0h0m4.53 0h0m4.53 0h0m4.53 0h0m4.53 0h0m4.53 0h0m4.53 0h0m4.53 0h0m4.53 0h0m4.53 0h0m4.53 0h0m4.53 0h0m4.53 0h0m4.53 0h0m4.53 0h0m-142.7 3.93h0m4.53 0h0m4.53 0h0m4.53 0h0m4.53 0h0m4.53 0h0m4.53 0h0m4.53 0h0m4.53 0h0m4.53 0h0m4.53 0h0m4.53 0h0m4.53 0h0m4.53 0h0m4.53 0h0m4.53 0h0m4.53 0h0m4.53 0h0m4.53 0h0m4.53 0h0m4.53 0h0m4.53 0h0m4.53 0h0m4.53 0h0m4.53 0h0m4.53 0h0m4.53 0h0m4.53 0h0m4.53 0h0m4.53 0h0m4.53 0h0m-129.11 3.93h0m4.53 0h0m4.53 0h0m4.53 0h0m4.53 0h0m4.53 0h0m4.53 0h0m4.53 0h0m4.53 0h0m4.53 0h0m4.53 0h0m4.53 0h0m4.53 0h0m4.53 0h0m4.53 0h0m4.53 0h0m4.53 0h0m4.53 0h0m4.53 0h0m4.53 0h0m4.53 0h0m4.53 0h0m4.53 0h0m4.53 0h0m4.53 0h0m4.53 0h0m4.53 0h0m4.53 0h0m-115.51 3.93h0m4.53 0h0m4.53 0h0m4.53 0h0m4.53 0h0m4.53 0h0m4.53 0h0m4.53 0h0m4.53 0h0m4.53 0h0m4.53 0h0m4.53 0h0m4.53 0h0m4.53 0h0m4.53 0h0m4.53 0h0m4.53 0h0m4.53 0h0m4.53 0h0m4.53 0h0m4.53 0h0m4.53 0h0m4.53 0h0m4.53 0h0m4.53 0h0m-101.93 3.93h0m4.53 0h0m4.53 0h0m4.53 0h0m4.53 0h0m4.53 0h0m4.53 0h0m4.53 0h0m4.53 0h0m4.53 0h0m4.53 0h0m4.53 0h0m4.53 0h0m4.53 0h0m4.53 0h0m4.53 0h0m4.53 0h0m4.53 0h0m4.53 0h0m4.53 0h0m4.53 0h0m4.53 0h0m-88.34 3.93h0m4.53 0h0m4.53 0h0m4.53 0h0m4.53 0h0m4.53 0h0m4.53 0h0m4.53 0h0m4.53 0h0m4.53 0h0m4.53 0h0m4.53 0h0m4.53 0h0m4.53 0h0m4.53 0h0m4.53 0h0m4.53 0h0m4.53 0h0m4.53 0h0m-65.68 3.93h0m4.53 0h0m4.53 0h0m4.53 0h0m4.53 0h0m4.53 0h0m4.53 0h0m4.53 0h0m4.53 0h0m4.53 0h0m4.53 0h0m4.53 0h0M910.95 424.55h0m-20.38 3.93h0m4.53 0h0m4.53 0h0m4.53 0h0m4.53 0h0m4.53 0h0m4.53 0h0m4.53 0h0m4.53 0h0m4.53 0h0m-47.56 3.93h0m4.53 0h0m4.53 0h0m4.53 0h0m4.53 0h0m4.53 0h0m4.53 0h0m4.53 0h0m4.53 0h0m4.53 0h0m4.53 0h0m4.53 0h0m4.53 0h0m-61.15 3.93h0m4.53 0h0m4.53 0h0m4.53 0h0m4.53 0h0m4.53 0h0m4.53 0h0m4.53 0h0m4.53 0h0m4.53 0h0m4.53 0h0m4.53 0h0m4.53 0h0m4.53 0h0m4.53 0h0m4.53 0h0m-74.75 3.93h0m4.53 0h0m4.53 0h0m4.53 0h0m4.53 0h0m4.53 0h0m4.53 0h0m4.53 0h0m4.53 0h0m4.53 0h0m4.53 0h0m4.53 0h0m4.53 0h0m4.53 0h0m4.53 0h0m4.53 0h0m4.53 0h0m4.53 0h0m4.53 0h0m-83.8 3.93h0m4.53 0h0m4.53 0h0m4.53 0h0m4.53 0h0m4.53 0h0m4.53 0h0m4.53 0h0m4.53 0h0m4.53 0h0m4.53 0h0m4.53 0h0m4.53 0h0m4.53 0h0m4.53 0h0m4.53 0h0m4.53 0h0m4.53 0h0m4.53 0h0m4.53 0h0m-92.87 3.93h0m4.53 0h0m4.53 0h0m4.53 0h0m4.53 0h0m4.53 0h0m4.53 0h0m4.53 0h0m4.53 0h0m4.53 0h0m4.53 0h0m4.53 0h0m4.53 0h0m4.53 0h0m4.53 0h0m4.53 0h0m4.53 0h0m4.53 0h0m4.53 0h0m4.53 0h0m4.53 0h0m4.53 0h0m4.53 0h0m-101.93 3.93h0m4.53 0h0m4.53 0h0m4.53 0h0m4.53 0h0m4.53 0h0m4.53 0h0m4.53 0h0m4.53 0h0m4.53 0h0m4.53 0h0m4.53 0h0m4.53 0h0m4.53 0h0m4.53 0h0m4.53 0h0m4.53 0h0m4.53 0h0m4.53 0h0m4.53 0h0m4.53 0h0m4.53 0h0m4.53 0h0m4.53 0h0m-106.46 3.93h0m4.53 0h0m4.53 0h0m4.53 0h0m4.53 0h0m4.53 0h0m4.53 0h0m4.53 0h0m4.53 0h0m4.53 0h0m4.53 0h0m4.53 0h0m4.53 0h0m4.53 0h0m4.53 0h0m4.53 0h0m4.53 0h0m4.53 0h0m4.53 0h0m4.53 0h0m4.53 0h0m4.53 0h0m4.53 0h0m4.53 0h0m4.53 0h0m-110.99 3.93h0m4.53 0h0m4.53 0h0m4.53 0h0m4.53 0h0m4.53 0h0m4.53 0h0m4.53 0h0m4.53 0h0m4.53 0h0m4.53 0h0m4.53 0h0m4.53 0h0m4.53 0h0m4.53 0h0m4.53 0h0m4.53 0h0m4.53 0h0m4.53 0h0m4.53 0h0m4.53 0h0m4.53 0h0m4.53 0h0m4.53 0h0m4.53 0h0m4.53 0h0m-115.51 3.93h0m4.53 0h0m4.53 0h0m4.53 0h0m4.53 0h0m4.53 0h0m4.53 0h0m4.53 0h0m4.53 0h0m4.53 0h0m4.53 0h0m4.53 0h0m4.53 0h0m4.53 0h0m4.53 0h0m4.53 0h0m4.53 0h0m4.53 0h0m4.53 0h0m4.53 0h0m4.53 0h0m4.53 0h0m4.53 0h0m4.53 0h0m4.53 0h0m4.53 0h0m4.53 0h0m-120.04 3.93h0m4.53 0h0m4.53 0h0m4.53 0h0m4.53 0h0m4.53 0h0m4.53 0h0m4.53 0h0m4.53 0h0m4.53 0h0m4.53 0h0m4.53 0h0m4.53 0h0m4.53 0h0m4.53 0h0m4.53 0h0m4.53 0h0m4.53 0h0m4.53 0h0m4.53 0h0m4.53 0h0m4.53 0h0m4.53 0h0m4.53 0h0m4.53 0h0m4.53 0h0m4.53 0h0m4.53 0h0m-120.04 3.93h0m4.53 0h0m4.53 0h0m4.53 0h0m4.53 0h0m4.53 0h0m4.53 0h0m4.53 0h0m4.53 0h0m4.53 0h0m4.53 0h0m4.53 0h0m4.53 0h0m4.53 0h0m4.53 0h0m4.53 0h0m4.53 0h0m4.53 0h0m4.53 0h0m4.53 0h0m4.53 0h0m4.53 0h0m4.53 0h0m4.53 0h0m4.53 0h0m4.53 0h0m4.53 0h0m-120.04 3.93h0m4.53 0h0m4.53 0h0m4.53 0h0m4.53 0h0m4.53 0h0m4.53 0h0m4.53 0h0m4.53 0h0m4.53 0h0m4.53 0h0m4.53 0h0m4.53 0h0m4.53 0h0m4.53 0h0m4.53 0h0m4.53 0h0m4.53 0h0m4.53 0h0m4.53 0h0m4.53 0h0m4.53 0h0m4.53 0h0m4.53 0h0m4.53 0h0m4.53 0h0m4.53 0h0m4.53 0h0m-124.57 3.93h0m4.53 0h0m4.53 0h0m4.53 0h0m4.53 0h0m4.53 0h0m4.53 0h0m4.53 0h0m4.53 0h0m4.53 0h0m4.53 0h0m4.53 0h0m4.53 0h0m4.53 0h0m4.53 0h0m4.53 0h0m4.53 0h0m4.53 0h0m4.53 0h0m4.53 0h0m4.53 0h0m4.53 0h0m4.53 0h0m4.53 0h0m4.53 0h0m4.53 0h0m4.53 0h0m4.53 0h0m4.53 0h0m-124.57 3.93h0m4.53 0h0m4.53 0h0m4.53 0h0m4.53 0h0m4.53 0h0m4.53 0h0m4.53 0h0m4.53 0h0m4.53 0h0m4.53 0h0m4.53 0h0m4.53 0h0m4.53 0h0m4.53 0h0m4.53 0h0m4.53 0h0m4.53 0h0m4.53 0h0m4.53 0h0m4.53 0h0m4.53 0h0m4.53 0h0m4.53 0h0m4.53 0h0m4.53 0h0m4.53 0h0m4.53 0h0m-124.57 3.93h0m4.53 0h0m4.53 0h0m4.53 0h0m4.53 0h0m4.53 0h0m4.53 0h0m4.53 0h0m4.53 0h0m4.53 0h0m4.53 0h0m4.53 0h0m4.53 0h0m4.53 0h0m4.53 0h0m4.53 0h0m4.53 0h0m4.53 0h0m4.53 0h0m4.53 0h0m4.53 0h0m4.53 0h0m4.53 0h0m4.53 0h0m4.53 0h0m4.53 0h0m4.53 0h0m4.53 0h0m4.53 0h0m-124.57 3.93h0m4.53 0h0m4.53 0h0m4.53 0h0m4.53 0h0m4.53 0h0m4.53 0h0m4.53 0h0m4.53 0h0m4.53 0h0m4.53 0h0m4.53 0h0m4.53 0h0m4.53 0h0m4.53 0h0m4.53 0h0m4.53 0h0m4.53 0h0m4.53 0h0m4.53 0h0m4.53 0h0m4.53 0h0m4.53 0h0m4.53 0h0m4.53 0h0m4.53 0h0m4.53 0h0m4.53 0h0m-124.57 3.93h0m4.53 0h0m4.53 0h0m4.53 0h0m4.53 0h0m4.53 0h0m4.53 0h0m4.53 0h0m4.53 0h0m4.53 0h0m4.53 0h0m4.53 0h0m4.53 0h0m4.53 0h0m4.53 0h0m4.53 0h0m4.53 0h0m4.53 0h0m4.53 0h0m4.53 0h0m4.53 0h0m4.53 0h0m4.53 0h0m4.53 0h0m4.53 0h0m4.53 0h0m4.53 0h0m4.53 0h0m4.53 0h0m-124.57 3.93h0m4.53 0h0m4.53 0h0m4.53 0h0m4.53 0h0m4.53 0h0m4.53 0h0m4.53 0h0m4.53 0h0m4.53 0h0m4.53 0h0m4.53 0h0m4.53 0h0m4.53 0h0m4.53 0h0m4.53 0h0m4.53 0h0m4.53 0h0m4.53 0h0m4.53 0h0m4.53 0h0m4.53 0h0m4.53 0h0m4.53 0h0m4.53 0h0m4.53 0h0m4.53 0h0m4.53 0h0m-120.04 3.93h0m4.53 0h0m4.53 0h0m4.53 0h0m4.53 0h0m4.53 0h0m4.53 0h0m4.53 0h0m4.53 0h0m4.53 0h0m4.53 0h0m4.53 0h0m4.53 0h0m4.53 0h0m4.53 0h0m4.53 0h0m4.53 0h0m4.53 0h0m4.53 0h0m4.53 0h0m4.53 0h0m4.53 0h0m4.53 0h0m4.53 0h0m4.53 0h0m4.53 0h0m4.53 0h0m4.53 0h0m-124.57 3.93h0m4.53 0h0m4.53 0h0m4.53 0h0m4.53 0h0m4.53 0h0m4.53 0h0m4.53 0h0m4.53 0h0m4.53 0h0m4.53 0h0m4.53 0h0m4.53 0h0m4.53 0h0m4.53 0h0m4.53 0h0m4.53 0h0m4.53 0h0m4.53 0h0m4.53 0h0m4.53 0h0m4.53 0h0m4.53 0h0m4.53 0h0m4.53 0h0m4.53 0h0m4.53 0h0m4.53 0h0m-120.04 3.93h0m4.53 0h0m4.53 0h0m4.53 0h0m4.53 0h0m4.53 0h0m4.53 0h0m4.53 0h0m4.53 0h0m4.53 0h0m4.53 0h0m4.53 0h0m4.53 0h0m4.53 0h0m4.53 0h0m4.53 0h0m4.53 0h0m4.53 0h0m4.53 0h0m4.53 0h0m4.53 0h0m4.53 0h0m4.53 0h0m4.53 0h0m4.53 0h0m4.53 0h0m4.53 0h0m-115.51 3.93h0m4.53 0h0m4.53 0h0m4.53 0h0m4.53 0h0m4.53 0h0m4.53 0h0m4.53 0h0m4.53 0h0m4.53 0h0m4.53 0h0m4.53 0h0m4.53 0h0m4.53 0h0m4.53 0h0m4.53 0h0m4.53 0h0m4.53 0h0m4.53 0h0m4.53 0h0m4.53 0h0m4.53 0h0m4.53 0h0m4.53 0h0m4.53 0h0m4.53 0h0m-110.99 3.93h0m4.53 0h0m4.53 0h0m4.53 0h0m4.53 0h0m4.53 0h0m4.53 0h0m4.53 0h0m4.53 0h0m4.53 0h0m4.53 0h0m4.53 0h0m4.53 0h0m4.53 0h0m4.53 0h0m4.53 0h0m4.53 0h0m4.53 0h0m4.53 0h0m4.53 0h0m4.53 0h0m4.53 0h0m4.53 0h0m4.53 0h0m4.53 0h0m-106.46 3.93h0m4.53 0h0m4.53 0h0m4.53 0h0m4.53 0h0m4.53 0h0m4.53 0h0m4.53 0h0m4.53 0h0m4.53 0h0m4.53 0h0m4.53 0h0m4.53 0h0m4.53 0h0m4.53 0h0m4.53 0h0m4.53 0h0m4.53 0h0m4.53 0h0m4.53 0h0m4.53 0h0m4.53 0h0m4.53 0h0m4.53 0h0m-101.93 3.93h0m4.53 0h0m4.53 0h0m4.53 0h0m4.53 0h0m4.53 0h0m4.53 0h0m4.53 0h0m4.53 0h0m4.53 0h0m4.53 0h0m4.53 0h0m4.53 0h0m4.53 0h0m4.53 0h0m4.53 0h0m4.53 0h0m4.53 0h0m4.53 0h0m4.53 0h0m4.53 0h0m4.53 0h0m4.53 0h0m-97.4 3.93h0m4.53 0h0m4.53 0h0m4.53 0h0m4.53 0h0m4.53 0h0m4.53 0h0m4.53 0h0m4.53 0h0m4.53 0h0m4.53 0h0m4.53 0h0m4.53 0h0m4.53 0h0m4.53 0h0m4.53 0h0m4.53 0h0m4.53 0h0m4.53 0h0m4.53 0h0m4.53 0h0m4.53 0h0m-92.87 3.93h0m4.53 0h0m4.53 0h0m4.53 0h0m4.53 0h0m4.53 0h0m4.53 0h0m4.53 0h0m4.53 0h0m4.53 0h0m4.53 0h0m4.53 0h0m4.53 0h0m4.53 0h0m4.53 0h0m4.53 0h0m4.53 0h0m4.53 0h0m4.53 0h0m4.53 0h0m4.53 0h0m-83.8 3.93h0m4.53 0h0m4.53 0h0m4.53 0h0m4.53 0h0m4.53 0h0m4.53 0h0m4.53 0h0m4.53 0h0m4.53 0h0m4.53 0h0m4.53 0h0m4.53 0h0m4.53 0h0m4.53 0h0m4.53 0h0m4.53 0h0m4.53 0h0m-74.75 3.93h0m4.53 0h0m4.53 0h0m4.53 0h0m4.53 0h0m4.53 0h0m4.53 0h0m4.53 0h0m4.53 0h0m4.53 0h0m4.53 0h0m4.53 0h0m4.53 0h0m4.53 0h0m4.53 0h0m4.53 0h0m4.53 0h0m-65.69 3.93h0m4.53 0h0m4.53 0h0m4.53 0h0m4.53 0h0m4.53 0h0m4.53 0h0m4.53 0h0m4.53 0h0m4.53 0h0m4.53 0h0m4.53 0h0m4.53 0h0m4.53 0h0m-47.57 3.93h0m4.53 0h0m4.53 0h0m4.53 0h0m4.53 0h0m4.53 0h0m4.53 0h0m4.53 0h0m4.53 0h0m-20.38 3.93h0m4.53 0h0M846.74 552.77h0m4.53 0h0m4.53 0h0m4.53 0h0m4.53 0h0m-24.91 3.93h0m4.53 0h0m4.53 0h0m4.53 0h0m4.53 0h0m4.53 0h0m4.53 0h0m4.53 0h0m-38.5 3.93h0m4.53 0h0m4.53 0h0m4.53 0h0m4.53 0h0m4.53 0h0m4.53 0h0m4.53 0h0m4.53 0h0m4.53 0h0m4.53 0h0m-52.1 3.93h0m4.53 0h0m4.53 0h0m4.53 0h0m4.53 0h0m4.53 0h0m4.53 0h0m4.53 0h0m4.53 0h0m4.53 0h0m4.53 0h0m4.53 0h0m4.53 0h0m4.53 0h0m-61.16 3.93h0m4.53 0h0m4.53 0h0m4.53 0h0m4.53 0h0m4.53 0h0m4.53 0h0m4.53 0h0m4.53 0h0m4.53 0h0m4.53 0h0m4.53 0h0m4.53 0h0m4.53 0h0m4.53 0h0m-65.69 3.93h0m4.53 0h0m4.53 0h0m4.53 0h0m4.53 0h0m4.53 0h0m4.53 0h0m4.53 0h0m4.53 0h0m4.53 0h0m4.53 0h0m4.53 0h0m4.53 0h0m4.53 0h0m4.53 0h0m4.53 0h0m-70.22 3.93h0m4.53 0h0m4.53 0h0m4.53 0h0m4.53 0h0m4.53 0h0m4.53 0h0m4.53 0h0m4.53 0h0m4.53 0h0m4.53 0h0m4.53 0h0m4.53 0h0m4.53 0h0m4.53 0h0m4.53 0h0m4.53 0h0m-74.75 3.93h0m4.53 0h0m4.53 0h0m4.53 0h0m4.53 0h0m4.53 0h0m4.53 0h0m4.53 0h0m4.53 0h0m4.53 0h0m4.53 0h0m4.53 0h0m4.53 0h0m4.53 0h0m4.53 0h0m4.53 0h0m4.53 0h0m4.53 0h0m-79.27 3.93h0m4.53 0h0m4.53 0h0m4.53 0h0m4.53 0h0m4.53 0h0m4.53 0h0m4.53 0h0m4.53 0h0m4.53 0h0m4.53 0h0m4.53 0h0m4.53 0h0m4.53 0h0m4.53 0h0m4.53 0h0m4.53 0h0m4.53 0h0m4.53 0h0m-83.8 3.93h0m4.53 0h0m4.53 0h0m4.53 0h0m4.53 0h0m4.53 0h0m4.53 0h0m4.53 0h0m4.53 0h0m4.53 0h0m4.53 0h0m4.53 0h0m4.53 0h0m4.53 0h0m4.53 0h0m4.53 0h0m4.53 0h0m4.53 0h0m4.53 0h0m4.53 0h0m-83.8 3.93h0m4.53 0h0m4.53 0h0m4.53 0h0m4.53 0h0m4.53 0h0m4.53 0h0m4.53 0h0m4.53 0h0m4.53 0h0m4.53 0h0m4.53 0h0m4.53 0h0m4.53 0h0m4.53 0h0m4.53 0h0m4.53 0h0m4.53 0h0m4.53 0h0m-83.8 3.93h0m4.53 0h0m4.53 0h0m4.53 0h0m4.53 0h0m4.53 0h0m4.53 0h0m4.53 0h0m4.53 0h0m4.53 0h0m4.53 0h0m4.53 0h0m4.53 0h0m4.53 0h0m4.53 0h0m4.53 0h0m4.53 0h0m4.53 0h0m4.53 0h0m4.53 0h0m-83.8 3.93h0m4.53 0h0m4.53 0h0m4.53 0h0m4.53 0h0m4.53 0h0m4.53 0h0m4.53 0h0m4.53 0h0m4.53 0h0m4.53 0h0m4.53 0h0m4.53 0h0m4.53 0h0m4.53 0h0m4.53 0h0m4.53 0h0m4.53 0h0m4.53 0h0m-83.8 3.93h0m4.53 0h0m4.53 0h0m4.53 0h0m4.53 0h0m4.53 0h0m4.53 0h0m4.53 0h0m4.53 0h0m4.53 0h0m4.53 0h0m4.53 0h0m4.53 0h0m4.53 0h0m4.53 0h0m4.53 0h0m4.53 0h0m4.53 0h0m4.53 0h0m4.53 0h0m-83.8 3.93h0m4.53 0h0m4.53 0h0m4.53 0h0m4.53 0h0m4.53 0h0m4.53 0h0m4.53 0h0m4.53 0h0m4.53 0h0m4.53 0h0m4.53 0h0m4.53 0h0m4.53 0h0m4.53 0h0m4.53 0h0m4.53 0h0m4.53 0h0m4.53 0h0m-79.27 3.93h0m4.53 0h0m4.53 0h0m4.53 0h0m4.53 0h0m4.53 0h0m4.53 0h0m4.53 0h0m4.53 0h0m4.53 0h0m4.53 0h0m4.53 0h0m4.53 0h0m4.53 0h0m4.53 0h0m4.53 0h0m4.53 0h0m4.53 0h0m-74.75 3.93h0m4.53 0h0m4.53 0h0m4.53 0h0m4.53 0h0m4.53 0h0m4.53 0h0m4.53 0h0m4.53 0h0m4.53 0h0m4.53 0h0m4.53 0h0m4.53 0h0m4.53 0h0m4.53 0h0m4.53 0h0m4.53 0h0m-70.22 3.93h0m4.53 0h0m4.53 0h0m4.53 0h0m4.53 0h0m4.53 0h0m4.53 0h0m4.53 0h0m4.53 0h0m4.53 0h0m4.53 0h0m4.53 0h0m4.53 0h0m4.53 0h0m4.53 0h0m4.53 0h0m-65.69 3.93h0m4.53 0h0m4.53 0h0m4.53 0h0m4.53 0h0m4.53 0h0m4.53 0h0m4.53 0h0m4.53 0h0m4.53 0h0m4.53 0h0m4.53 0h0m4.53 0h0m4.53 0h0m4.53 0h0m-61.16 3.93h0m4.53 0h0m4.53 0h0m4.53 0h0m4.53 0h0m4.53 0h0m4.53 0h0m4.53 0h0m4.53 0h0m4.53 0h0m4.53 0h0m4.53 0h0m4.53 0h0m4.53 0h0m-52.1 3.93h0m4.53 0h0m4.53 0h0m4.53 0h0m4.53 0h0m4.53 0h0m4.53 0h0m4.53 0h0m4.53 0h0m4.53 0h0m4.53 0h0m-38.5 3.93h0m4.53 0h0m4.53 0h0m4.53 0h0m4.53 0h0m4.53 0h0m4.53 0h0m4.53 0h0m-24.91 3.93h0m4.53 0h0m4.53 0h0m4.53 0h0m4.53 0h0M689.81 682.07h0m4.53 0h0m4.53 0h0m4.53 0h0m-11.32 3.93h0m4.53 0h0m4.53 0h0m-6.79 3.93h0m4.53 0h0M596.44 382.27h0m4.53 0h0m-6.79 3.93h0m4.53 0h0m4.53 0h0M725.8 676.91h0m-11.33 3.93h0m4.53 0h0m4.53 0h0m4.53 0h0m4.53 0h0m4.53 0h0m-20.38 3.93h0m4.53 0h0m4.53 0h0m4.53 0h0m4.53 0h0m-15.85 3.93h0m4.53 0h0m4.53 0h0m4.53 0h0m-15.85 3.93h0m4.53 0h0m4.53 0h0m4.53 0h0m4.53 0h0m-20.38 3.93h0m4.53 0h0m4.53 0h0m4.53 0h0m4.53 0h0m4.53 0h0m-11.33 3.93h0M605.16 401.87h0m-11.32 3.93h0m4.53 0h0m4.53 0h0m4.53 0h0m4.53 0h0m-15.85 3.93h0m4.53 0h0m4.53 0h0m4.53 0h0m-11.32 3.93h0m4.53 0h0m4.53 0h0m-6.79 3.93h0m4.53 0h0M647.74 345.18h0m4.53 0h0m-11.32 3.93h0m4.53 0h0m4.53 0h0m4.53 0h0m4.53 0h0m-20.38 3.93h0m4.53 0h0m4.53 0h0m4.53 0h0m4.53 0h0m4.53 0h0m-24.92 3.93h0m4.53 0h0m4.53 0h0m4.53 0h0m4.53 0h0m4.53 0h0m4.53 0h0m-24.92 3.93h0m4.53 0h0m4.53 0h0m4.53 0h0m4.53 0h0m4.53 0h0m-24.92 3.93h0m4.53 0h0m4.53 0h0m4.53 0h0m4.53 0h0m4.53 0h0m4.53 0h0m-24.92 3.93h0m4.53 0h0m4.53 0h0m4.53 0h0m4.53 0h0m4.53 0h0m-15.86 3.93h0m4.53 0h0m4.53 0h0m-6.79 3.93h0m4.53 0h0M654.53 609.68h0m4.53 0h0m-11.32 3.93h0m4.53 0h0m4.53 0h0m4.53 0h0m4.53 0h0m-20.38 3.93h0m4.53 0h0m4.53 0h0m4.53 0h0m4.53 0h0m4.53 0h0m-24.92 3.93h0m4.53 0h0m4.53 0h0m4.53 0h0m4.53 0h0m4.53 0h0m4.53 0h0m-24.92 3.93h0m4.53 0h0m4.53 0h0m4.53 0h0m4.53 0h0m4.53 0h0m-24.92 3.93h0m4.53 0h0m4.53 0h0m4.53 0h0m4.53 0h0m4.53 0h0m4.53 0h0m-24.92 3.93h0m4.53 0h0m4.53 0h0m4.53 0h0m4.53 0h0m4.53 0h0m-20.38 3.93h0m4.53 0h0m4.53 0h0m4.53 0h0m4.53 0h0m-11.32 3.93h0m4.53 0h0M906.53 624.88h0m4.53 0h0m-6.79 3.93h0m4.53 0h0m4.53 0h0m-15.86 3.93h0m4.53 0h0m4.53 0h0m4.53 0h0m4.53 0h0m4.53 0h0m-20.38 3.93h0m4.53 0h0m4.53 0h0m4.53 0h0m4.53 0h0m4.53 0h0m-24.92 3.93h0m4.53 0h0m4.53 0h0m4.53 0h0m4.53 0h0m4.53 0h0m-24.92 3.93h0m4.53 0h0m4.53 0h0m4.53 0h0m4.53 0h0m4.53 0h0m-20.38 3.93h0m4.53 0h0m4.53 0h0m4.53 0h0m4.53 0h0m4.53 0h0m-15.86 3.93h0m4.53 0h0m4.53 0h0m-6.79 3.93h0m4.53 0h0M987.37 490.37h0m4.53 0h0m4.53 0h0m-11.32 3.93h0m4.53 0h0m4.53 0h0m-6.79 3.93h0m4.53 0h0m4.53 0h0M589.1 432.5h0M576.87 528.87h0m4.53 0h0m4.53 0h0m4.53 0h0m-15.85 3.93h0m4.53 0h0m4.53 0h0m4.53 0h0m-11.32 3.93h0m4.53 0h0m4.53 0h0M658.13 323.5h0M934.25 561.36h0m4.53 0h0m4.53 0h0m4.53 0h0m-20.38 3.93h0m4.53 0h0m4.53 0h0m4.53 0h0m4.53 0h0m4.53 0h0m4.53 0h0m-33.98 3.93h0m4.53 0h0m4.53 0h0m4.53 0h0m4.53 0h0m4.53 0h0m4.53 0h0m4.53 0h0m4.53 0h0m4.53 0h0m-43.03 3.93h0m4.53 0h0m4.53 0h0m4.53 0h0m4.53 0h0m4.53 0h0m4.53 0h0m4.53 0h0m4.53 0h0m4.53 0h0m4.53 0h0m-47.56 3.93h0m4.53 0h0m4.53 0h0m4.53 0h0m4.53 0h0m4.53 0h0m4.53 0h0m4.53 0h0m4.53 0h0m4.53 0h0m4.53 0h0m4.53 0h0m-52.09 3.93h0m4.53 0h0m4.53 0h0m4.53 0h0m4.53 0h0m4.53 0h0m4.53 0h0m4.53 0h0m4.53 0h0m4.53 0h0m4.53 0h0m4.53 0h0m4.53 0h0m-56.62 3.93h0m4.53 0h0m4.53 0h0m4.53 0h0m4.53 0h0m4.53 0h0m4.53 0h0m4.53 0h0m4.53 0h0m4.53 0h0m4.53 0h0m4.53 0h0m4.53 0h0m4.53 0h0m-56.62 3.93h0m4.53 0h0m4.53 0h0m4.53 0h0m4.53 0h0m4.53 0h0m4.53 0h0m4.53 0h0m4.53 0h0m4.53 0h0m4.53 0h0m4.53 0h0m4.53 0h0m4.53 0h0m-61.16 3.93h0m4.53 0h0m4.53 0h0m4.53 0h0m4.53 0h0m4.53 0h0m4.53 0h0m4.53 0h0m4.53 0h0m4.53 0h0m4.53 0h0m4.53 0h0m4.53 0h0m4.53 0h0m-61.16 3.93h0m4.53 0h0m4.53 0h0m4.53 0h0m4.53 0h0m4.53 0h0m4.53 0h0m4.53 0h0m4.53 0h0m4.53 0h0m4.53 0h0m4.53 0h0m4.53 0h0m4.53 0h0m-56.62 3.93h0m4.53 0h0m4.53 0h0m4.53 0h0m4.53 0h0m4.53 0h0m4.53 0h0m4.53 0h0m4.53 0h0m4.53 0h0m4.53 0h0m4.53 0h0m4.53 0h0m4.53 0h0m-56.62 3.93h0m4.53 0h0m4.53 0h0m4.53 0h0m4.53 0h0m4.53 0h0m4.53 0h0m4.53 0h0m4.53 0h0m4.53 0h0m4.53 0h0m4.53 0h0m4.53 0h0m-52.09 3.93h0m4.53 0h0m4.53 0h0m4.53 0h0m4.53 0h0m4.53 0h0m4.53 0h0m4.53 0h0m4.53 0h0m4.53 0h0m4.53 0h0m4.53 0h0m-47.56 3.93h0m4.53 0h0m4.53 0h0m4.53 0h0m4.53 0h0m4.53 0h0m4.53 0h0m4.53 0h0m4.53 0h0m4.53 0h0m4.53 0h0m-43.03 3.93h0m4.53 0h0m4.53 0h0m4.53 0h0m4.53 0h0m4.53 0h0m4.53 0h0m4.53 0h0m4.53 0h0m4.53 0h0m-33.98 3.93h0m4.53 0h0m4.53 0h0m4.53 0h0m4.53 0h0m4.53 0h0m4.53 0h0m-20.38 3.93h0m4.53 0h0m4.53 0h0m4.53 0h0M695.81 623.62h0m4.53 0h0m4.53 0h0m4.53 0h0m-15.85 3.93h0m4.53 0h0m4.53 0h0m4.53 0h0m4.53 0h0m-24.91 3.93h0m4.53 0h0m4.53 0h0m4.53 0h0m4.53 0h0m4.53 0h0m4.53 0h0m4.53 0h0m-38.5 3.93h0m4.53 0h0m4.53 0h0m4.53 0h0m4.53 0h0m4.53 0h0m4.53 0h0m4.53 0h0m4.53 0h0m4.53 0h0m4.53 0h0m-43.03 3.93h0m4.53 0h0m4.53 0h0m4.53 0h0m4.53 0h0m4.53 0h0m4.53 0h0m4.53 0h0m4.53 0h0m4.53 0h0m-43.03 3.93h0m4.53 0h0m4.53 0h0m4.53 0h0m4.53 0h0m4.53 0h0m4.53 0h0m4.53 0h0m4.53 0h0m4.53 0h0m4.53 0h0m-43.03 3.93h0m4.53 0h0m4.53 0h0m4.53 0h0m4.53 0h0m4.53 0h0m4.53 0h0m4.53 0h0m4.53 0h0m4.53 0h0m-43.03 3.93h0m4.53 0h0m4.53 0h0m4.53 0h0m4.53 0h0m4.53 0h0m4.53 0h0m4.53 0h0m4.53 0h0m4.53 0h0m4.53 0h0m-43.03 3.93h0m4.53 0h0m4.53 0h0m4.53 0h0m4.53 0h0m4.53 0h0m4.53 0h0m4.53 0h0m4.53 0h0m4.53 0h0m-38.5 3.93h0m4.53 0h0m4.53 0h0m4.53 0h0m4.53 0h0m4.53 0h0m4.53 0h0m4.53 0h0m4.53 0h0m-33.98 3.93h0m4.53 0h0m4.53 0h0m4.53 0h0m4.53 0h0m4.53 0h0m4.53 0h0m4.53 0h0m-24.91 3.93h0m4.53 0h0m4.53 0h0m4.53 0h0m4.53 0h0m-15.85 3.93h0m4.53 0h0m4.53 0h0m4.53 0h0M843.3 694.37h0m-2.26 3.93h0m4.53 0h0m-2.26 3.93h0M625.1 650.8h0m-2.26 3.93h0m4.53 0h0M638.13 649.2h0M665.3 299h0M670 299h0M659.3 304h0M660.7 310h0M689.3 288.7h0M697.6 286.3h0M723 276.3h0M721.3 281.7h0M754.4 280.6h0M773 270.7h0M635.5 334h0M637.8 337.8h0M619.5 338.4h0M623.6 338.4h0M601.2 369h0M606.8 369h0M625.2 356.7h0M870.7 285.4h0M873.3 291h0M879.1 289.7h0M886.4 292.6h0M902.7 301.3h0M909.3 304h0M914 314.6h0M815.3 270.6h0M932 331.2h0M938.7 331.2h0M971.7 368.4h0M1007.9 469.9h0M1004.4 528.4h0M996 562.4h0M980.9 590.3h0M980.9 596.8h0M929.4 652h0M921.8 667.3h0M880 694h0M854.4 702h0M814.7 711.3h0M805.7 713.3h0M773 713.3h0M705.8 696.3h0M739 706h0M594 390h0M598 390h0M590.2 396.8h0M580.4 402.4h0M565.6 451.2h0M568.3 456.2h0M561.8 508.6h0M586 595.2h0"/><path stroke="#e2714f" d="M847.77 315.58h0m4.53 0h0m4.53 0h0m4.53 0h0m4.53 0h0m4.53 0h0m-33.98 3.93h0m4.53 0h0m4.53 0h0m4.53 0h0m4.53 0h0m4.53 0h0m4.53 0h0m4.53 0h0m4.53 0h0m4.53 0h0m4.53 0h0m-52.1 3.93h0m4.53 0h0m4.53 0h0m4.53 0h0m4.53 0h0m4.53 0h0m4.53 0h0m4.53 0h0m4.53 0h0m4.53 0h0m4.53 0h0m4.53 0h0m4.53 0h0m4.53 0h0m-65.69 3.93h0m4.53 0h0m4.53 0h0m4.53 0h0m4.53 0h0m4.53 0h0m4.53 0h0m4.53 0h0m4.53 0h0m4.53 0h0m4.53 0h0m4.53 0h0m4.53 0h0m4.53 0h0m4.53 0h0m4.53 0h0m4.53 0h0m-74.75 3.93h0m4.53 0h0m4.53 0h0m4.53 0h0m4.53 0h0m4.53 0h0m4.53 0h0m4.53 0h0m4.53 0h0m4.53 0h0m4.53 0h0m4.53 0h0m4.53 0h0m4.53 0h0m4.53 0h0m4.53 0h0m4.53 0h0m4.53 0h0m-79.27 3.93h0m4.53 0h0m4.53 0h0m4.53 0h0m4.53 0h0m4.53 0h0m4.53 0h0m4.53 0h0m4.53 0h0m4.53 0h0m4.53 0h0m4.53 0h0m4.53 0h0m4.53 0h0m4.53 0h0m4.53 0h0m4.53 0h0m4.53 0h0m4.53 0h0m-88.34 3.93h0m4.53 0h0m4.53 0h0m4.53 0h0m4.53 0h0m4.53 0h0m4.53 0h0m4.53 0h0m4.53 0h0m4.53 0h0m4.53 0h0m4.53 0h0m4.53 0h0m4.53 0h0m4.53 0h0m4.53 0h0m4.53 0h0m4.53 0h0m4.53 0h0m4.53 0h0m4.53 0h0m4.53 0h0m-97.4 3.93h0m4.53 0h0m4.53 0h0m4.53 0h0m4.53 0h0m4.53 0h0m4.53 0h0m4.53 0h0m4.53 0h0m4.53 0h0m4.53 0h0m4.53 0h0m4.53 0h0m4.53 0h0m4.53 0h0m4.53 0h0m4.53 0h0m4.53 0h0m4.53 0h0m4.53 0h0m4.53 0h0m4.53 0h0m4.53 0h0m-97.4 3.93h0m4.53 0h0m4.53 0h0m4.53 0h0m4.53 0h0m4.53 0h0m4.53 0h0m4.53 0h0m4.53 0h0m4.53 0h0m4.53 0h0m4.53 0h0m4.53 0h0m4.53 0h0m4.53 0h0m4.53 0h0m4.53 0h0m4.53 0h0m4.53 0h0m4.53 0h0m4.53 0h0m4.53 0h0m-97.4 3.93h0m4.53 0h0m4.53 0h0m4.53 0h0m4.53 0h0m4.53 0h0m4.53 0h0m4.53 0h0m4.53 0h0m4.53 0h0m4.53 0h0m4.53 0h0m4.53 0h0m4.53 0h0m4.53 0h0m4.53 0h0m4.53 0h0m4.53 0h0m4.53 0h0m4.53 0h0m4.53 0h0m4.53 0h0m4.53 0h0m-101.93 3.93h0m4.53 0h0m4.53 0h0m4.53 0h0m4.53 0h0m4.53 0h0m4.53 0h0m4.53 0h0m4.53 0h0m4.53 0h0m4.53 0h0m4.53 0h0m4.53 0h0m4.53 0h0m4.53 0h0m4.53 0h0m4.53 0h0m4.53 0h0m4.53 0h0m4.53 0h0m4.53 0h0m4.53 0h0m4.53 0h0m4.53 0h0m-106.46 3.93h0m4.53 0h0m4.53 0h0m4.53 0h0m4.53 0h0m4.53 0h0m4.53 0h0m4.53 0h0m4.53 0h0m4.53 0h0m4.53 0h0m4.53 0h0m4.53 0h0m4.53 0h0m4.53 0h0m4.53 0h0m4.53 0h0m4.53 0h0m4.53 0h0m4.53 0h0m4.53 0h0m4.53 0h0m4.53 0h0m4.53 0h0m4.53 0h0m-106.46 3.93h0m4.53 0h0m4.53 0h0m4.53 0h0m4.53 0h0m4.53 0h0m4.53 0h0m4.53 0h0m4.53 0h0m4.53 0h0m4.53 0h0m4.53 0h0m4.53 0h0m4.53 0h0m4.53 0h0m4.53 0h0m4.53 0h0m4.53 0h0m4.53 0h0m4.53 0h0m4.53 0h0m4.53 0h0m4.53 0h0m4.53 0h0m-106.46 3.93h0m4.53 0h0m4.53 0h0m4.53 0h0m4.53 0h0m4.53 0h0m4.53 0h0m4.53 0h0m4.53 0h0m4.53 0h0m4.53 0h0m4.53 0h0m4.53 0h0m4.53 0h0m4.53 0h0m4.53 0h0m4.53 0h0m4.53 0h0m4.53 0h0m4.53 0h0m4.53 0h0m4.53 0h0m4.53 0h0m4.53 0h0m4.53 0h0m-110.99 3.93h0m4.53 0h0m4.53 0h0m4.53 0h0m4.53 0h0m4.53 0h0m4.53 0h0m4.53 0h0m4.53 0h0m4.53 0h0m4.53 0h0m4.53 0h0m4.53 0h0m4.53 0h0m4.53 0h0m4.53 0h0m4.53 0h0m4.53 0h0m4.53 0h0m4.53 0h0m4.53 0h0m4.53 0h0m4.53 0h0m4.53 0h0m4.53 0h0m4.53 0h0m-110.99 3.93h0m4.53 0h0m4.53 0h0m4.53 0h0m4.53 0h0m4.53 0h0m4.53 0h0m4.53 0h0m4.53 0h0m4.53 0h0m4.53 0h0m4.53 0h0m4.53 0h0m4.53 0h0m4.53 0h0m4.53 0h0m4.53 0h0m4.53 0h0m4.53 0h0m4.53 0h0m4.53 0h0m4.53 0h0m4.53 0h0m4.53 0h0m4.53 0h0m-106.46 3.93h0m4.53 0h0m4.53 0h0m4.53 0h0m4.53 0h0m4.53 0h0m4.53 0h0m4.53 0h0m4.53 0h0m4.53 0h0m4.53 0h0m4.53 0h0m4.53 0h0m4.53 0h0m4.53 0h0m4.53 0h0m4.53 0h0m4.53 0h0m4.53 0h0m4.53 0h0m4.53 0h0m4.53 0h0m4.53 0h0m4.53 0h0m-106.46 3.93h0m4.53 0h0m4.53 0h0m4.53 0h0m4.53 0h0m4.53 0h0m4.53 0h0m4.53 0h0m4.53 0h0m4.53 0h0m4.53 0h0m4.53 0h0m4.53 0h0m4.53 0h0m4.53 0h0m4.53 0h0m4.53 0h0m4.53 0h0m4.53 0h0m4.53 0h0m4.53 0h0m4.53 0h0m4.53 0h0m4.53 0h0m4.53 0h0m-106.46 3.93h0m4.53 0h0m4.53 0h0m4.53 0h0m4.53 0h0m4.53 0h0m4.53 0h0m4.53 0h0m4.53 0h0m4.53 0h0m4.53 0h0m4.53 0h0m4.53 0h0m4.53 0h0m4.53 0h0m4.53 0h0m4.53 0h0m4.53 0h0m4.53 0h0m4.53 0h0m4.53 0h0m4.53 0h0m4.53 0h0m4.53 0h0m-101.93 3.93h0m4.53 0h0m4.53 0h0m4.53 0h0m4.53 0h0m4.53 0h0m4.53 0h0m4.53 0h0m4.53 0h0m4.53 0h0m4.53 0h0m4.53 0h0m4.53 0h0m4.53 0h0m4.53 0h0m4.53 0h0m4.53 0h0m4.53 0h0m4.53 0h0m4.53 0h0m4.53 0h0m4.53 0h0m4.53 0h0m-97.4 3.93h0m4.53 0h0m4.53 0h0m4.53 0h0m4.53 0h0m4.53 0h0m4.53 0h0m4.53 0h0m4.53 0h0m4.53 0h0m4.53 0h0m4.53 0h0m4.53 0h0m4.53 0h0m4.53 0h0m4.53 0h0m4.53 0h0m4.53 0h0m4.53 0h0m4.53 0h0m4.53 0h0m4.53 0h0m-97.4 3.93h0m4.53 0h0m4.53 0h0m4.53 0h0m4.53 0h0m4.53 0h0m4.53 0h0m4.53 0h0m4.53 0h0m4.53 0h0m4.53 0h0m4.53 0h0m4.53 0h0m4.53 0h0m4.53 0h0m4.53 0h0m4.53 0h0m4.53 0h0m4.53 0h0m4.53 0h0m4.53 0h0m4.53 0h0m4.53 0h0m-92.87 3.93h0m4.53 0h0m4.53 0h0m4.53 0h0m4.53 0h0m4.53 0h0m4.53 0h0m4.53 0h0m4.53 0h0m4.53 0h0m4.53 0h0m4.53 0h0m4.53 0h0m4.53 0h0m4.53 0h0m4.53 0h0m4.53 0h0m4.53 0h0m4.53 0h0m4.53 0h0m4.53 0h0m-88.34 3.93h0m4.53 0h0m4.53 0h0m4.53 0h0m4.53 0h0m4.53 0h0m4.53 0h0m4.53 0h0m4.53 0h0m4.53 0h0m4.53 0h0m4.53 0h0m4.53 0h0m4.53 0h0m4.53 0h0m4.53 0h0m4.53 0h0m4.53 0h0m4.53 0h0m-79.27 3.93h0m4.53 0h0m4.53 0h0m4.53 0h0m4.53 0h0m4.53 0h0m4.53 0h0m4.53 0h0m4.53 0h0m4.53 0h0m4.53 0h0m4.53 0h0m4.53 0h0m4.53 0h0m4.53 0h0m4.53 0h0m4.53 0h0m4.53 0h0m-74.75 3.93h0m4.53 0h0m4.53 0h0m4.53 0h0m4.53 0h0m4.53 0h0m4.53 0h0m4.53 0h0m4.53 0h0m4.53 0h0m4.53 0h0m4.53 0h0m4.53 0h0m4.53 0h0m4.53 0h0m4.53 0h0m4.53 0h0m-65.69 3.93h0m4.53 0h0m4.53 0h0m4.53 0h0m4.53 0h0m4.53 0h0m4.53 0h0m4.53 0h0m4.53 0h0m4.53 0h0m4.53 0h0m4.53 0h0m4.53 0h0m4.53 0h0m-52.1 3.93h0m4.53 0h0m4.53 0h0m4.53 0h0m4.53 0h0m4.53 0h0m4.53 0h0m4.53 0h0m4.53 0h0m4.53 0h0m4.53 0h0m-33.98 3.93h0m4.53 0h0m4.53 0h0m4.53 0h0m4.53 0h0m4.53 0h0M749.31 294.13h0m4.53 0h0m4.53 0h0m4.53 0h0m4.53 0h0m4.53 0h0m4.53 0h0m-33.98 3.93h0m4.53 0h0m4.53 0h0m4.53 0h0m4.53 0h0m4.53 0h0m4.53 0h0m4.53 0h0m4.53 0h0m4.53 0h0m-43.03 3.93h0m4.53 0h0m4.53 0h0m4.53 0h0m4.53 0h0m4.53 0h0m4.53 0h0m4.53 0h0m4.53 0h0m4.53 0h0m4.53 0h0m-52.1 3.93h0m4.53 0h0m4.53 0h0m4.53 0h0m4.53 0h0m4.53 0h0m4.53 0h0m4.53 0h0m4.53 0h0m4.53 0h0m4.53 0h0m4.53 0h0m4.53 0h0m4.53 0h0m-61.16 3.93h0m4.53 0h0m4.53 0h0m4.53 0h0m4.53 0h0m4.53 0h0m4.53 0h0m4.53 0h0m4.53 0h0m4.53 0h0m4.53 0h0m4.53 0h0m4.53 0h0m4.53 0h0m4.53 0h0m-65.69 3.93h0m4.53 0h0m4.53 0h0m4.53 0h0m4.53 0h0m4.53 0h0m4.53 0h0m4.53 0h0m4.53 0h0m4.53 0h0m4.53 0h0m4.53 0h0m4.53 0h0m4.53 0h0m4.53 0h0m4.53 0h0m-65.69 3.93h0m4.53 0h0m4.53 0h0m4.53 0h0m4.53 0h0m4.53 0h0m4.53 0h0m4.53 0h0m4.53 0h0m4.53 0h0m4.53 0h0m4.53 0h0m4.53 0h0m4.53 0h0m4.53 0h0m-65.69 3.93h0m4.53 0h0m4.53 0h0m4.53 0h0m4.53 0h0m4.53 0h0m4.53 0h0m4.53 0h0m4.53 0h0m4.53 0h0m4.53 0h0m4.53 0h0m4.53 0h0m4.53 0h0m4.53 0h0m4.53 0h0m-70.22 3.93h0m4.53 0h0m4.53 0h0m4.53 0h0m4.53 0h0m4.53 0h0m4.53 0h0m4.53 0h0m4.53 0h0m4.53 0h0m4.53 0h0m4.53 0h0m4.53 0h0m4.53 0h0m4.53 0h0m4.53 0h0m4.53 0h0m-70.22 3.93h0m4.53 0h0m4.53 0h0m4.53 0h0m4.53 0h0m4.53 0h0m4.53 0h0m4.53 0h0m4.53 0h0m4.53 0h0m4.53 0h0m4.53 0h0m4.53 0h0m4.53 0h0m4.53 0h0m4.53 0h0m-70.22 3.93h0m4.53 0h0m4.53 0h0m4.53 0h0m4.53 0h0m4.53 0h0m4.53 0h0m4.53 0h0m4.53 0h0m4.53 0h0m4.53 0h0m4.53 0h0m4.53 0h0m4.53 0h0m4.53 0h0m4.53 0h0m4.53 0h0m-70.22 3.93h0m4.53 0h0m4.53 0h0m4.53 0h0m4.53 0h0m4.53 0h0m4.53 0h0m4.53 0h0m4.53 0h0m4.53 0h0m4.53 0h0m4.53 0h0m4.53 0h0m4.53 0h0m4.53 0h0m4.53 0h0m-65.69 3.93h0m4.53 0h0m4.53 0h0m4.53 0h0m4.53 0h0m4.53 0h0m4.53 0h0m4.53 0h0m4.53 0h0m4.53 0h0m4.53 0h0m4.53 0h0m4.53 0h0m4.53 0h0m4.53 0h0m-65.69 3.93h0m4.53 0h0m4.53 0h0m4.53 0h0m4.53 0h0m4.53 0h0m4.53 0h0m4.53 0h0m4.53 0h0m4.53 0h0m4.53 0h0m4.53 0h0m4.53 0h0m4.53 0h0m4.53 0h0m4.53 0h0m-65.69 3.93h0m4.53 0h0m4.53 0h0m4.53 0h0m4.53 0h0m4.53 0h0m4.53 0h0m4.53 0h0m4.53 0h0m4.53 0h0m4.53 0h0m4.53 0h0m4.53 0h0m4.53 0h0m4.53 0h0m-61.16 3.93h0m4.53 0h0m4.53 0h0m4.53 0h0m4.53 0h0m4.53 0h0m4.53 0h0m4.53 0h0m4.53 0h0m4.53 0h0m4.53 0h0m4.53 0h0m4.53 0h0m4.53 0h0m-52.1 3.93h0m4.53 0h0m4.53 0h0m4.53 0h0m4.53 0h0m4.53 0h0m4.53 0h0m4.53 0h0m4.53 0h0m4.53 0h0m4.53 0h0m-43.03 3.93h0m4.53 0h0m4.53 0h0m4.53 0h0m4.53 0h0m4.53 0h0m4.53 0h0m4.53 0h0m4.53 0h0m4.53 0h0m-29.44 3.93h0m4.53 0h0m4.53 0h0m4.53 0h0m4.53 0h0M580.04 432.5h0m4.53 0h0m9.06 0h0m4.53 0h0m-15.85 3.93h0m13.59 0h0m-11.32 3.93h0m4.53 0h0m4.53 0h0M695.76 316.45h0m-6.79 3.93h0m4.53 0h0m4.53 0h0m-20.38 3.93h0m4.53 0h0m4.53 0h0m4.53 0h0m4.53 0h0m4.53 0h0m4.53 0h0m4.53 0h0m-33.98 3.93h0m4.53 0h0m4.53 0h0m4.53 0h0m4.53 0h0m4.53 0h0m4.53 0h0m4.53 0h0m4.53 0h0m-38.5 3.93h0m4.53 0h0m4.53 0h0m4.53 0h0m4.53 0h0m4.53 0h0m4.53 0h0m4.53 0h0m4.53 0h0m4.53 0h0m-38.5 3.93h0m4.53 0h0m4.53 0h0m4.53 0h0m4.53 0h0m4.53 0h0m4.53 0h0m4.53 0h0m4.53 0h0m4.53 0h0m-43.03 3.93h0m4.53 0h0m4.53 0h0m4.53 0h0m4.53 0h0m4.53 0h0m4.53 0h0m4.53 0h0m4.53 0h0m4.53 0h0m-43.03 3.93h0m4.53 0h0m4.53 0h0m4.53 0h0m4.53 0h0m4.53 0h0m4.53 0h0m4.53 0h0m4.53 0h0m4.53 0h0m-38.5 3.93h0m4.53 0h0m4.53 0h0m4.53 0h0m4.53 0h0m4.53 0h0m4.53 0h0m4.53 0h0m4.53 0h0m4.53 0h0m-38.5 3.93h0m4.53 0h0m4.53 0h0m4.53 0h0m4.53 0h0m4.53 0h0m4.53 0h0m4.53 0h0m4.53 0h0m-33.98 3.93h0m4.53 0h0m4.53 0h0m4.53 0h0m4.53 0h0m4.53 0h0m4.53 0h0m4.53 0h0m-20.38 3.93h0m4.53 0h0m4.53 0h0"/><path stroke="#eea574" d="M980.6 425.71h0m-11.33 3.93h0m4.53 0h0m4.53 0h0m4.53 0h0m4.53 0h0m4.53 0h0m-20.38 3.93h0m4.53 0h0m4.53 0h0m4.53 0h0m4.53 0h0m-15.85 3.93h0m4.53 0h0m4.53 0h0m4.53 0h0m-15.85 3.93h0m4.53 0h0m4.53 0h0m4.53 0h0m4.53 0h0m-20.38 3.93h0m4.53 0h0m4.53 0h0m4.53 0h0m4.53 0h0m4.53 0h0m-11.33 3.93h0M653.6 323.5h0M670.5 310.47h0m-2.26 3.93h0m4.53 0h0"/></g>
</svg>
<!-- /CHART -->

<!-- bottom filter bar -->
<div class="abs" style="left:13px;top:747px;width:1172.5px;height:60px;border-radius:9px;background:#eff1f5;box-shadow:0 -1px 3px rgba(0,0,0,0.10)"></div>
<div class="t" style="left:30px;top:764px;font-size:14px;font-weight:bold;color:#2e2e2e;letter-spacing:-0.05px">Filter(s) applied:</div>
<div class="t" style="left:140.5px;top:764px;font-size:14px;color:#2e2e2e;letter-spacing:-0.2px;-webkit-text-stroke:0.25px #2e2e2e">None</div>
<div class="abs" style="left:978px;top:755px;width:147px;height:31px;border-radius:5px;background:#fff;border:1px solid #e2e5eb"></div>
<svg class="abs" style="left:994px;top:762.5px" width="12" height="13" viewBox="0 0 12 13"><path d="M1 2 H4 V0.5 H8 V2 H11 V13 H1 Z" fill="#43536f"/></svg>
<div class="t" style="left:1012.5px;top:764px;font-size:13px;color:#43536f;letter-spacing:-0.3px;-webkit-text-stroke:0.25px #43536f">Copy Filter Rules</div>
<div class="abs" style="left:1141px;top:757px;width:28.5px;height:28px;border-radius:50%;background:#fff;border:1px solid #e2e5eb"></div>
<svg class="abs" style="left:1149.5px;top:767px" width="12" height="7" viewBox="0 0 12 7"><path d="M1.2 5.8 L6 1.4 L10.8 5.8" fill="none" stroke="#43536f" stroke-width="2" stroke-linecap="round" stroke-linejoin="round"/></svg>

</div>
</div></div>
</body></html>
